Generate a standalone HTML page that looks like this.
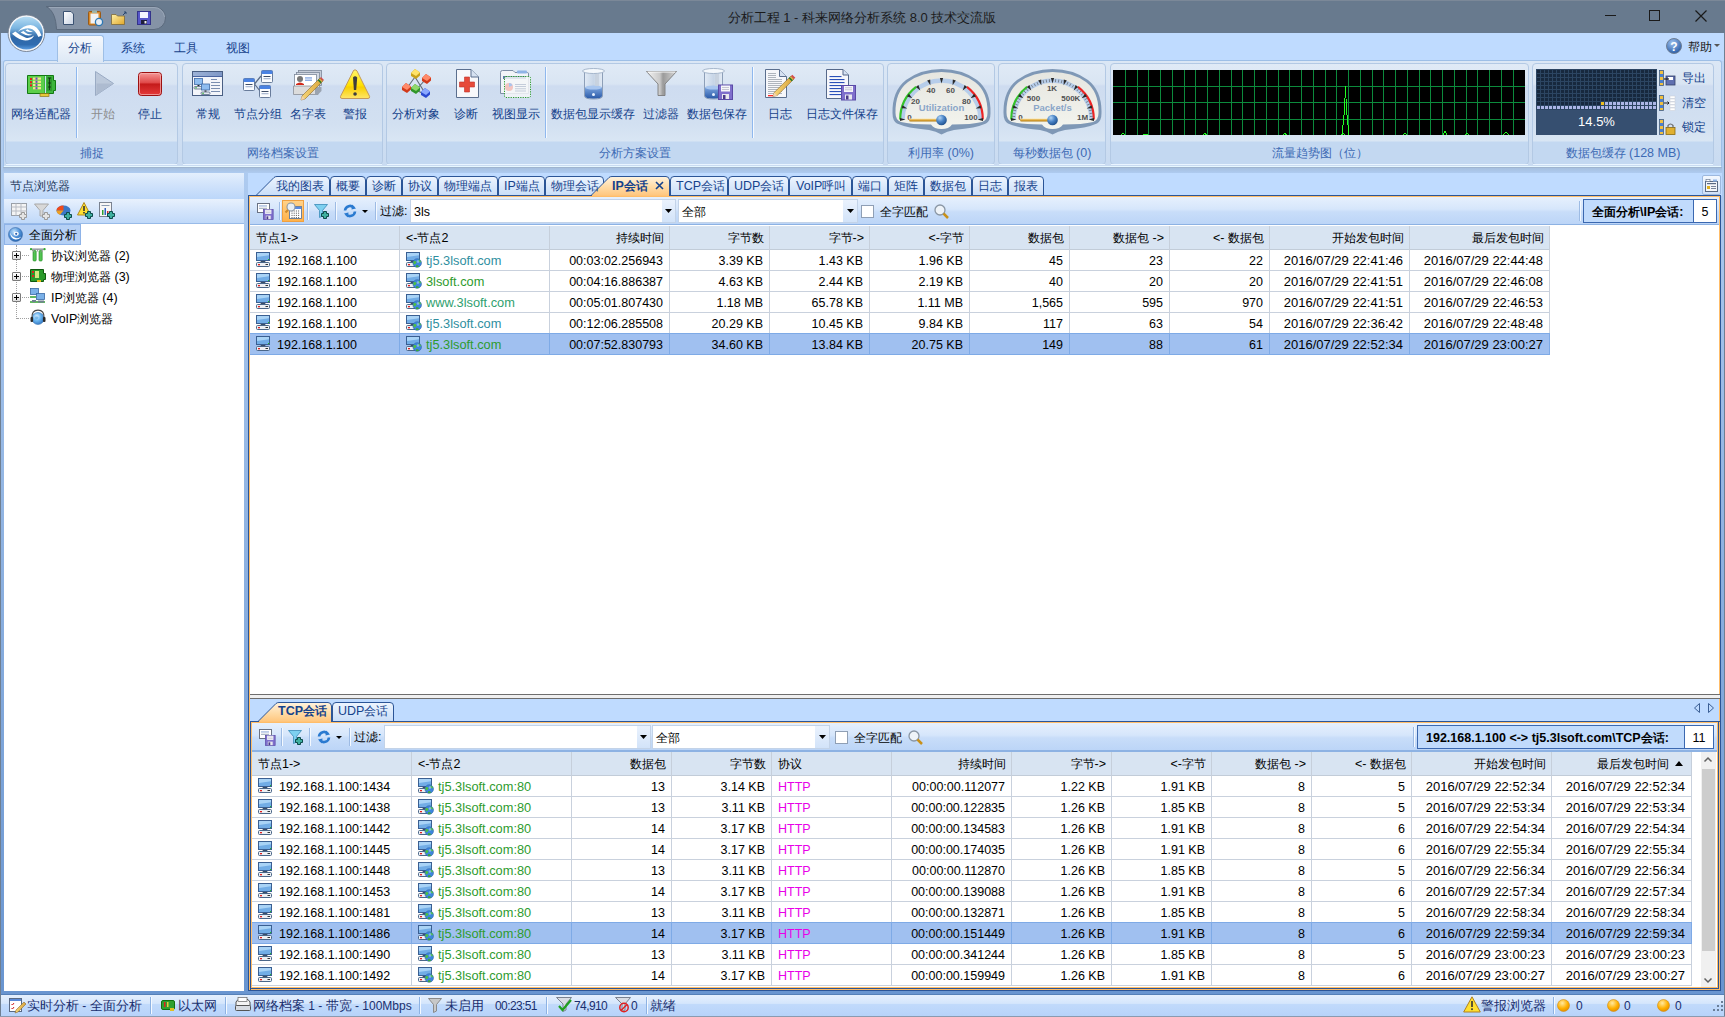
<!DOCTYPE html><html><head><meta charset="utf-8"><title>科来网络分析系统</title><style>
html,body{margin:0;padding:0}
body{width:1725px;height:1017px;position:relative;overflow:hidden;background:#6f9ad5;font-family:"Liberation Sans",sans-serif}
body div{position:absolute;box-sizing:border-box}
.t{white-space:nowrap;line-height:20px;height:20px}
svg{overflow:visible}
</style></head><body>
<div style="left:0px;top:0px;width:1725px;height:33px;background:#687a8e"></div>
<div style="left:0px;top:0px;width:1725px;height:1px;background:#7b8898"></div>
<div class="t" style="left:562.0px;width:600px;text-align:center;top:7.5px;font-size:12.5px;color:#1b1b1b;font-weight:normal;">分析工程<span style="font-size:13px"> 1 - </span>科来网络分析系统<span style="font-size:13px"> 8.0 </span>技术交流版</div>
<div style="left:1605px;top:15px;width:11px;height:1px;background:#1a1a1a"></div>
<div style="left:1649px;top:10px;width:11px;height:11px;border:1px solid #1a1a1a"></div>
<svg style="position:absolute;left:1695px;top:10px" width="12" height="12" viewBox="0 0 12 12"><path d="M0.5 0.5L11.5 11.5M11.5 0.5L0.5 11.5" stroke="#1a1a1a" stroke-width="1.2"/></svg>
<div style="left:0px;top:33px;width:1725px;height:984px;background:linear-gradient(#c0d8f6 0px,#aecbf0 135px,#6995d0 958px)"></div>
<div style="left:0px;top:33px;width:1px;height:984px;background:#6f7f92"></div>
<div style="left:1724px;top:33px;width:1px;height:984px;background:#6f7f92"></div>
<div style="left:1px;top:33px;width:1723px;height:28px;background:#bfdbff"></div>
<div style="left:3px;top:60px;width:1719px;height:108px;background:linear-gradient(#dbe7f5,#c9dbf1);border:1px solid #9ebfe6;border-radius:3px;border-bottom:2px solid #e6f7ff"></div>
<div style="left:3px;top:167px;width:1719px;height:1px;background:#9fb4cf"></div>
<div style="left:57px;top:35px;width:47px;height:27px;background:linear-gradient(#f6f9fd,#dde8f5);border:1px solid #9ebfe6;border-bottom:none;border-radius:3px 3px 0 0"></div>
<div style="left:58px;top:61px;width:45px;height:2px;background:#dde8f5"></div>
<div class="t" style="left:50.0px;width:60px;text-align:center;top:37.5px;font-size:12px;color:#15428b;font-weight:normal;">分析</div>
<div class="t" style="left:103.0px;width:60px;text-align:center;top:37.5px;font-size:12px;color:#15428b;font-weight:normal;">系统</div>
<div class="t" style="left:156.0px;width:60px;text-align:center;top:37.5px;font-size:12px;color:#15428b;font-weight:normal;">工具</div>
<div class="t" style="left:208.0px;width:60px;text-align:center;top:37.5px;font-size:12px;color:#15428b;font-weight:normal;">视图</div>
<svg style="position:absolute;left:1666px;top:38px" width="16" height="16" viewBox="0 0 16 16"><defs><radialGradient id="hg" cx="40%" cy="30%" r="70%"><stop offset="0" stop-color="#9fc3f0"/><stop offset="1" stop-color="#2d5fa8"/></radialGradient></defs><circle cx="8" cy="8" r="7.5" fill="url(#hg)" stroke="#6f7f95"/><text x="8" y="12.5" font-size="12" font-weight="bold" text-anchor="middle" fill="#fff" font-family="Liberation Sans">?</text></svg>
<div class="t" style="left:1688px;top:36.5px;font-size:12px;color:#1b1b1b;font-weight:normal;">帮助</div>
<svg style="position:absolute;left:1714px;top:44px" width="6" height="4" viewBox="0 0 6 4"><path d="M0 0H6L3 3Z" fill="#555"/></svg>
<div style="left:5px;top:63px;width:173px;height:102px;border:1px solid #b3c9e4;border-radius:4px;overflow:hidden;background:linear-gradient(#e0eaf6 0px,#d9e5f3 20px,#cedcf0 22px,#d2e0f1 60px,#d9e6f4 77px,#c3d8f1 78px,#c3d8f1 100px)"></div>
<div style="left:6px;top:164px;width:171px;height:1px;background:#e9f4ff"></div>
<div class="t" style="left:5.0px;width:173px;text-align:center;top:142.5px;font-size:12px;color:#3d6ab4;font-weight:normal;">捕捉</div>
<div style="left:182px;top:63px;width:201px;height:102px;border:1px solid #b3c9e4;border-radius:4px;overflow:hidden;background:linear-gradient(#e0eaf6 0px,#d9e5f3 20px,#cedcf0 22px,#d2e0f1 60px,#d9e6f4 77px,#c3d8f1 78px,#c3d8f1 100px)"></div>
<div style="left:183px;top:164px;width:199px;height:1px;background:#e9f4ff"></div>
<div class="t" style="left:182.0px;width:201px;text-align:center;top:142.5px;font-size:12px;color:#3d6ab4;font-weight:normal;">网络档案设置</div>
<div style="left:386px;top:63px;width:498px;height:102px;border:1px solid #b3c9e4;border-radius:4px;overflow:hidden;background:linear-gradient(#e0eaf6 0px,#d9e5f3 20px,#cedcf0 22px,#d2e0f1 60px,#d9e6f4 77px,#c3d8f1 78px,#c3d8f1 100px)"></div>
<div style="left:387px;top:164px;width:496px;height:1px;background:#e9f4ff"></div>
<div class="t" style="left:386.0px;width:498px;text-align:center;top:142.5px;font-size:12px;color:#3d6ab4;font-weight:normal;">分析方案设置</div>
<div style="left:887px;top:63px;width:108px;height:102px;border:1px solid #b3c9e4;border-radius:4px;overflow:hidden;background:linear-gradient(#e0eaf6 0px,#d9e5f3 20px,#cedcf0 22px,#d2e0f1 60px,#d9e6f4 77px,#c3d8f1 78px,#c3d8f1 100px)"></div>
<div style="left:888px;top:164px;width:106px;height:1px;background:#e9f4ff"></div>
<div class="t" style="left:887.0px;width:108px;text-align:center;top:142.5px;font-size:12px;color:#3d6ab4;font-weight:normal;">利用率<span style="font-size:12.5px"> (0%)</span></div>
<div style="left:998px;top:63px;width:108px;height:102px;border:1px solid #b3c9e4;border-radius:4px;overflow:hidden;background:linear-gradient(#e0eaf6 0px,#d9e5f3 20px,#cedcf0 22px,#d2e0f1 60px,#d9e6f4 77px,#c3d8f1 78px,#c3d8f1 100px)"></div>
<div style="left:999px;top:164px;width:106px;height:1px;background:#e9f4ff"></div>
<div class="t" style="left:998.0px;width:108px;text-align:center;top:142.5px;font-size:12px;color:#3d6ab4;font-weight:normal;">每秒数据包<span style="font-size:12.5px"> (0)</span></div>
<div style="left:1110px;top:63px;width:419px;height:102px;border:1px solid #b3c9e4;border-radius:4px;overflow:hidden;background:linear-gradient(#e0eaf6 0px,#d9e5f3 20px,#cedcf0 22px,#d2e0f1 60px,#d9e6f4 77px,#c3d8f1 78px,#c3d8f1 100px)"></div>
<div style="left:1111px;top:164px;width:417px;height:1px;background:#e9f4ff"></div>
<div class="t" style="left:1110.0px;width:419px;text-align:center;top:142.5px;font-size:12px;color:#3d6ab4;font-weight:normal;">流量趋势图（位）</div>
<div style="left:1532px;top:63px;width:182px;height:102px;border:1px solid #b3c9e4;border-radius:4px;overflow:hidden;background:linear-gradient(#e0eaf6 0px,#d9e5f3 20px,#cedcf0 22px,#d2e0f1 60px,#d9e6f4 77px,#c3d8f1 78px,#c3d8f1 100px)"></div>
<div style="left:1533px;top:164px;width:180px;height:1px;background:#e9f4ff"></div>
<div class="t" style="left:1532.0px;width:182px;text-align:center;top:142.5px;font-size:12px;color:#3d6ab4;font-weight:normal;">数据包缓存<span style="font-size:12.5px"> (128 MB)</span></div>
<div class="t" style="left:-19.0px;width:120px;text-align:center;top:104.0px;font-size:12px;color:#15428b;font-weight:normal;">网络适配器</div>
<div class="t" style="left:42.5px;width:120px;text-align:center;top:104.0px;font-size:12px;color:#8d8d8d;font-weight:normal;">开始</div>
<div class="t" style="left:90.0px;width:120px;text-align:center;top:104.0px;font-size:12px;color:#15428b;font-weight:normal;">停止</div>
<div class="t" style="left:148.0px;width:120px;text-align:center;top:104.0px;font-size:12px;color:#15428b;font-weight:normal;">常规</div>
<div class="t" style="left:198.0px;width:120px;text-align:center;top:104.0px;font-size:12px;color:#15428b;font-weight:normal;">节点分组</div>
<div class="t" style="left:248.0px;width:120px;text-align:center;top:104.0px;font-size:12px;color:#15428b;font-weight:normal;">名字表</div>
<div class="t" style="left:295.0px;width:120px;text-align:center;top:104.0px;font-size:12px;color:#15428b;font-weight:normal;">警报</div>
<div class="t" style="left:356.0px;width:120px;text-align:center;top:104.0px;font-size:12px;color:#15428b;font-weight:normal;">分析对象</div>
<div class="t" style="left:406.0px;width:120px;text-align:center;top:104.0px;font-size:12px;color:#15428b;font-weight:normal;">诊断</div>
<div class="t" style="left:455.5px;width:120px;text-align:center;top:104.0px;font-size:12px;color:#15428b;font-weight:normal;">视图显示</div>
<div class="t" style="left:532.5px;width:120px;text-align:center;top:104.0px;font-size:12px;color:#15428b;font-weight:normal;">数据包显示缓存</div>
<div class="t" style="left:601.0px;width:120px;text-align:center;top:104.0px;font-size:12px;color:#15428b;font-weight:normal;">过滤器</div>
<div class="t" style="left:657.0px;width:120px;text-align:center;top:104.0px;font-size:12px;color:#15428b;font-weight:normal;">数据包保存</div>
<div class="t" style="left:719.5px;width:120px;text-align:center;top:104.0px;font-size:12px;color:#15428b;font-weight:normal;">日志</div>
<div class="t" style="left:781.5px;width:120px;text-align:center;top:104.0px;font-size:12px;color:#15428b;font-weight:normal;">日志文件保存</div>
<div style="left:76px;top:67px;width:1px;height:71px;background:#8fb8ee;box-shadow:1px 0 0 #f4f9ff"></div>
<div style="left:545px;top:67px;width:1px;height:71px;background:#8fb8ee;box-shadow:1px 0 0 #f4f9ff"></div>
<div style="left:752px;top:67px;width:1px;height:71px;background:#8fb8ee;box-shadow:1px 0 0 #f4f9ff"></div>
<div style="left:3px;top:168px;width:1719px;height:5px;background:linear-gradient(#a6bfdf,#aecbf0)"></div>
<div style="left:4px;top:173px;width:240px;height:26px;background:linear-gradient(#e4effd,#cfe2fb 50%,#bcd7fa)"></div>
<div class="t" style="left:10px;top:176.0px;font-size:12px;color:#1e395b;font-weight:normal;">节点浏览器</div>
<div style="left:4px;top:199px;width:240px;height:25px;background:linear-gradient(#e8f1fd,#d3e4fb 50%,#c0d9f9);border-bottom:1px solid #99bbe8"></div>
<div style="left:4px;top:224px;width:240px;height:767px;background:#fff"></div>
<div style="left:4px;top:224px;width:77px;height:21px;background:#b5d0f5;border:1px solid #8eb3e8"></div>
<div class="t" style="left:29px;top:225.0px;font-size:12px;color:#000;font-weight:normal;">全面分析</div>
<div class="t" style="left:51px;top:246.0px;font-size:12px;color:#000;font-weight:normal;">协议浏览器<span style="font-size:12.5px"> (2)</span></div>
<div class="t" style="left:51px;top:267.0px;font-size:12px;color:#000;font-weight:normal;">物理浏览器<span style="font-size:12.5px"> (3)</span></div>
<div class="t" style="left:51px;top:288.0px;font-size:12px;color:#000;font-weight:normal;"><span style="font-size:12.5px">IP</span>浏览器<span style="font-size:12.5px"> (4)</span></div>
<div class="t" style="left:51px;top:309.0px;font-size:12px;color:#000;font-weight:normal;"><span style="font-size:12.5px">VoIP</span>浏览器</div>
<div style="left:16px;top:245px;width:1px;height:74px;border-left:1px dotted #a0a0a0"></div>
<div style="left:17px;top:255px;width:12px;height:1px;border-top:1px dotted #a0a0a0"></div>
<div style="left:17px;top:276px;width:12px;height:1px;border-top:1px dotted #a0a0a0"></div>
<div style="left:17px;top:297px;width:12px;height:1px;border-top:1px dotted #a0a0a0"></div>
<div style="left:17px;top:318px;width:12px;height:1px;border-top:1px dotted #a0a0a0"></div>
<div style="left:12px;top:251px;width:9px;height:9px;background:linear-gradient(#fff,#dcdcdc);border:1px solid #7a7a7a;border-radius:1px"></div>
<div style="left:14px;top:255px;width:5px;height:1px;background:#000"></div>
<div style="left:16px;top:253px;width:1px;height:5px;background:#000"></div>
<div style="left:12px;top:272px;width:9px;height:9px;background:linear-gradient(#fff,#dcdcdc);border:1px solid #7a7a7a;border-radius:1px"></div>
<div style="left:14px;top:276px;width:5px;height:1px;background:#000"></div>
<div style="left:16px;top:274px;width:1px;height:5px;background:#000"></div>
<div style="left:12px;top:293px;width:9px;height:9px;background:linear-gradient(#fff,#dcdcdc);border:1px solid #7a7a7a;border-radius:1px"></div>
<div style="left:14px;top:297px;width:5px;height:1px;background:#000"></div>
<div style="left:16px;top:295px;width:1px;height:5px;background:#000"></div>
<div style="left:1px;top:994px;width:1723px;height:1px;background:#5580b8"></div>
<div style="left:1px;top:995px;width:1723px;height:21px;background:linear-gradient(#e4effd,#d5e6fc 40%,#c1dafb 45%,#b7d3fa)"></div>
<div style="left:0px;top:1016px;width:1725px;height:1px;background:#8a9bb0"></div>
<div class="t" style="left:27px;top:995.5px;font-size:13px;color:#1a2f6e;font-weight:normal;">实时分析<span style="font-size:12px"> - </span>全面分析</div>
<div class="t" style="left:178px;top:995.5px;font-size:13px;color:#1a2f6e;font-weight:normal;">以太网</div>
<div class="t" style="left:253px;top:995.5px;font-size:13px;color:#1a2f6e;font-weight:normal;">网络档案<span style="font-size:12px"> 1 - </span>带宽<span style="font-size:12px"> - 100Mbps</span></div>
<div class="t" style="left:445px;top:995.5px;font-size:13px;color:#1a2f6e;font-weight:normal;">未启用</div>
<div class="t" style="left:495px;top:995.5px;font-size:13px;color:#1a2f6e;font-weight:normal;letter-spacing:-0.6px"><span style="font-size:12px">00:23:51</span></div>
<div class="t" style="left:574px;top:995.5px;font-size:13px;color:#1a2f6e;font-weight:normal;letter-spacing:-0.6px"><span style="font-size:12px">74,910</span></div>
<div class="t" style="left:631px;top:995.5px;font-size:13px;color:#1a2f6e;font-weight:normal;letter-spacing:-0.6px"><span style="font-size:12px">0</span></div>
<div class="t" style="left:650px;top:995.5px;font-size:13px;color:#1a2f6e;font-weight:normal;">就绪</div>
<div class="t" style="left:1481px;top:995.5px;font-size:13px;color:#1a2f6e;font-weight:normal;">警报浏览器</div>
<div class="t" style="left:1576px;top:995.5px;font-size:13px;color:#1a2f6e;font-weight:normal;letter-spacing:-0.6px"><span style="font-size:12px">0</span></div>
<div class="t" style="left:1624px;top:995.5px;font-size:13px;color:#1a2f6e;font-weight:normal;letter-spacing:-0.6px"><span style="font-size:12px">0</span></div>
<div class="t" style="left:1675px;top:995.5px;font-size:13px;color:#1a2f6e;font-weight:normal;letter-spacing:-0.6px"><span style="font-size:12px">0</span></div>
<div style="left:150px;top:997px;width:1px;height:17px;background:#8db2e3;box-shadow:1px 0 0 #f4f9ff"></div>
<div style="left:225px;top:997px;width:1px;height:17px;background:#8db2e3;box-shadow:1px 0 0 #f4f9ff"></div>
<div style="left:419px;top:997px;width:1px;height:17px;background:#8db2e3;box-shadow:1px 0 0 #f4f9ff"></div>
<div style="left:546px;top:997px;width:1px;height:17px;background:#8db2e3;box-shadow:1px 0 0 #f4f9ff"></div>
<div style="left:646px;top:997px;width:1px;height:17px;background:#8db2e3;box-shadow:1px 0 0 #f4f9ff"></div>
<div style="left:1553px;top:997px;width:1px;height:17px;background:#8db2e3;box-shadow:1px 0 0 #f4f9ff"></div>
<div style="left:248px;top:173px;width:1474px;height:23px;background:#bfdbff"></div>
<svg style="position:absolute;left:0px;top:176px" width="1725" height="21" viewBox="0 0 1725 21"><defs><linearGradient id="tun" x1="0" y1="0" x2="0" y2="1"><stop offset="0" stop-color="#eef5fe"/><stop offset="1" stop-color="#c6dcf8"/></linearGradient><linearGradient id="tsel" x1="0" y1="0" x2="0" y2="1"><stop offset="0" stop-color="#fff3df"/><stop offset="0.5" stop-color="#ffdca8"/><stop offset="1" stop-color="#ffc479"/></linearGradient></defs><path d="M255 20.5 L274 1.5 Q275 0.5 277 0.5 H326 Q329 0.5 329.5 4 V20.5" fill="url(#tun)" stroke="#2b5597" stroke-width="1"/><path d="M330.5 20.5 V4 Q330.5 0.5 334 0.5 H362 Q365.5 0.5 365.5 4 V20.5" fill="url(#tun)" stroke="#2b5597" stroke-width="1"/><path d="M366.5 20.5 V4 Q366.5 0.5 370 0.5 H398 Q401.5 0.5 401.5 4 V20.5" fill="url(#tun)" stroke="#2b5597" stroke-width="1"/><path d="M402.5 20.5 V4 Q402.5 0.5 406 0.5 H434 Q437.5 0.5 437.5 4 V20.5" fill="url(#tun)" stroke="#2b5597" stroke-width="1"/><path d="M438.5 20.5 V4 Q438.5 0.5 442 0.5 H494 Q497.5 0.5 497.5 4 V20.5" fill="url(#tun)" stroke="#2b5597" stroke-width="1"/><path d="M498.5 20.5 V4 Q498.5 0.5 502 0.5 H541 Q544.5 0.5 544.5 4 V20.5" fill="url(#tun)" stroke="#2b5597" stroke-width="1"/><path d="M545.5 20.5 V4 Q545.5 0.5 549 0.5 H600 Q603.5 0.5 603.5 4 V20.5" fill="url(#tun)" stroke="#2b5597" stroke-width="1"/><path d="M670.5 20.5 V4 Q670.5 0.5 674 0.5 H724 Q727.5 0.5 727.5 4 V20.5" fill="url(#tun)" stroke="#2b5597" stroke-width="1"/><path d="M728.5 20.5 V4 Q728.5 0.5 732 0.5 H785 Q788.5 0.5 788.5 4 V20.5" fill="url(#tun)" stroke="#2b5597" stroke-width="1"/><path d="M789.5 20.5 V4 Q789.5 0.5 793 0.5 H848 Q851.5 0.5 851.5 4 V20.5" fill="url(#tun)" stroke="#2b5597" stroke-width="1"/><path d="M852.5 20.5 V4 Q852.5 0.5 856 0.5 H884 Q887.5 0.5 887.5 4 V20.5" fill="url(#tun)" stroke="#2b5597" stroke-width="1"/><path d="M888.5 20.5 V4 Q888.5 0.5 892 0.5 H920 Q923.5 0.5 923.5 4 V20.5" fill="url(#tun)" stroke="#2b5597" stroke-width="1"/><path d="M924.5 20.5 V4 Q924.5 0.5 928 0.5 H968 Q971.5 0.5 971.5 4 V20.5" fill="url(#tun)" stroke="#2b5597" stroke-width="1"/><path d="M972.5 20.5 V4 Q972.5 0.5 976 0.5 H1004 Q1007.5 0.5 1007.5 4 V20.5" fill="url(#tun)" stroke="#2b5597" stroke-width="1"/><path d="M1008.5 20.5 V4 Q1008.5 0.5 1012 0.5 H1040 Q1043.5 0.5 1043.5 4 V20.5" fill="url(#tun)" stroke="#2b5597" stroke-width="1"/><path d="M590 20.5 L609 1.5 Q610 0.5 612 0.5 H666 Q669 0.5 669.5 4 V20.5" fill="url(#tsel)" stroke="#2b5597" stroke-width="1"/></svg>
<div class="t" style="left:276px;top:175.5px;font-size:12px;color:#15428b;font-weight:normal;">我的图表</div>
<div class="t" style="left:336px;top:175.5px;font-size:12px;color:#15428b;font-weight:normal;">概要</div>
<div class="t" style="left:372px;top:175.5px;font-size:12px;color:#15428b;font-weight:normal;">诊断</div>
<div class="t" style="left:408px;top:175.5px;font-size:12px;color:#15428b;font-weight:normal;">协议</div>
<div class="t" style="left:444px;top:175.5px;font-size:12px;color:#15428b;font-weight:normal;">物理端点</div>
<div class="t" style="left:504px;top:175.5px;font-size:12px;color:#15428b;font-weight:normal;"><span style="font-size:12.5px">IP</span>端点</div>
<div class="t" style="left:551px;top:175.5px;font-size:12px;color:#15428b;font-weight:normal;">物理会话</div>
<div class="t" style="left:676px;top:175.5px;font-size:12px;color:#15428b;font-weight:normal;"><span style="font-size:12.5px">TCP</span>会话</div>
<div class="t" style="left:734px;top:175.5px;font-size:12px;color:#15428b;font-weight:normal;"><span style="font-size:12.5px">UDP</span>会话</div>
<div class="t" style="left:796px;top:175.5px;font-size:12px;color:#15428b;font-weight:normal;"><span style="font-size:12.5px">VoIP</span>呼叫</div>
<div class="t" style="left:858px;top:175.5px;font-size:12px;color:#15428b;font-weight:normal;">端口</div>
<div class="t" style="left:894px;top:175.5px;font-size:12px;color:#15428b;font-weight:normal;">矩阵</div>
<div class="t" style="left:930px;top:175.5px;font-size:12px;color:#15428b;font-weight:normal;">数据包</div>
<div class="t" style="left:978px;top:175.5px;font-size:12px;color:#15428b;font-weight:normal;">日志</div>
<div class="t" style="left:1014px;top:175.5px;font-size:12px;color:#15428b;font-weight:normal;">报表</div>
<div class="t" style="left:612px;top:175.5px;font-size:12px;color:#15428b;font-weight:bold;"><span style="font-size:12.5px">IP</span>会话</div>
<svg style="position:absolute;left:655px;top:181px" width="9" height="9" viewBox="0 0 9 9"><path d="M1 1L8 8M8 1L1 8" stroke="#15428b" stroke-width="1.6"/></svg>
<div style="left:1702px;top:175px;width:19px;height:20px;background:linear-gradient(#f3f8fe,#cfe1f9);border:1px solid #9db8de;border-radius:2px"></div>
<div style="left:248px;top:195px;width:1473px;height:796px;border:1px solid #2b5597"></div>
<div style="left:249px;top:196px;width:1471px;height:794px;border:1px solid #ffbd69;background:#bfdbff"></div>
<div style="left:592px;top:195px;width:77px;height:1px;background:#ffc479"></div>
<div style="left:250px;top:197px;width:1469px;height:497px;background:#fff"></div>
<div style="left:250px;top:197px;width:1469px;height:28px;background:linear-gradient(#e6f0fd,#d6e6fb 45%,#c8ddf9 55%,#bcd5f7);border-bottom:1px solid #8db2e3"></div>
<div class="t" style="left:380px;top:201.0px;font-size:12px;color:#000;font-weight:normal;">过滤<span style="font-size:12.5px">:</span></div>
<div style="left:410px;top:199px;width:266px;height:24px;background:#fff;border:1px solid #c3d3e8"></div>
<div style="left:662px;top:200px;width:13px;height:22px;background:linear-gradient(#eaf2fd,#d2e3f9)"></div>
<svg style="position:absolute;left:665px;top:209.0px" width="7" height="4" viewBox="0 0 7 4"><path d="M0 0H7L3.5 4Z" fill="#000"/></svg>
<div class="t" style="left:414px;top:201.5px;font-size:12px;color:#000;font-weight:normal;"><span style="font-size:12.5px">3ls</span></div>
<div style="left:678px;top:199px;width:180px;height:24px;background:#fff;border:1px solid #c3d3e8"></div>
<div style="left:843px;top:200px;width:14px;height:22px;background:linear-gradient(#eaf2fd,#d2e3f9)"></div>
<svg style="position:absolute;left:847px;top:209.0px" width="7" height="4" viewBox="0 0 7 4"><path d="M0 0H7L3.5 4Z" fill="#000"/></svg>
<div class="t" style="left:682px;top:201.5px;font-size:12px;color:#000;font-weight:normal;">全部</div>
<div style="left:861px;top:205.0px;width:13px;height:13px;background:#fff;border:1px solid #8f9fb5"></div>
<div class="t" style="left:880px;top:201.5px;font-size:12px;color:#000;font-weight:normal;">全字匹配</div>
<div style="left:1579px;top:201px;width:1px;height:20px;background:#9dbbe4;box-shadow:1px 0 0 #f4f9ff"></div>
<div style="left:1583px;top:199px;width:134px;height:24px;background:#c1dbfc;border:1px solid #3b68b0"></div>
<div style="left:1693px;top:200px;width:23px;height:22px;background:#fff;border-left:1px solid #3b68b0"></div>
<div class="t" style="left:1592px;top:201.5px;font-size:12px;color:#000;font-weight:bold;">全面分析<span style="font-size:12.5px">\IP</span>会话<span style="font-size:12.5px">:</span></div>
<div class="t" style="left:1693.0px;width:24px;text-align:center;top:201.5px;font-size:12px;color:#000;font-weight:normal;"><span style="font-size:12.5px">5</span></div>
<div style="left:250px;top:226px;width:1300px;height:24px;background:#d8e4f2;border-bottom:1px solid #c2ccd8"></div>
<div style="left:399px;top:226px;width:1px;height:24px;background:#c6cfdb"></div>
<div class="t" style="left:256px;top:228.0px;font-size:12px;color:#000;font-weight:normal;">节点<span style="font-size:12.5px">1-&gt;</span></div>
<div style="left:549px;top:226px;width:1px;height:24px;background:#c6cfdb"></div>
<div class="t" style="left:406px;top:228.0px;font-size:12px;color:#000;font-weight:normal;"><span style="font-size:12.5px">&lt;-</span>节点<span style="font-size:12.5px">2</span></div>
<div style="left:669px;top:226px;width:1px;height:24px;background:#c6cfdb"></div>
<div class="t" style="left:544px;width:120px;text-align:right;top:228.0px;font-size:12px;color:#000;font-weight:normal;">持续时间</div>
<div style="left:769px;top:226px;width:1px;height:24px;background:#c6cfdb"></div>
<div class="t" style="left:664px;width:100px;text-align:right;top:228.0px;font-size:12px;color:#000;font-weight:normal;">字节数</div>
<div style="left:869px;top:226px;width:1px;height:24px;background:#c6cfdb"></div>
<div class="t" style="left:764px;width:100px;text-align:right;top:228.0px;font-size:12px;color:#000;font-weight:normal;">字节<span style="font-size:12.5px">-&gt;</span></div>
<div style="left:969px;top:226px;width:1px;height:24px;background:#c6cfdb"></div>
<div class="t" style="left:864px;width:100px;text-align:right;top:228.0px;font-size:12px;color:#000;font-weight:normal;"><span style="font-size:12.5px">&lt;-</span>字节</div>
<div style="left:1069px;top:226px;width:1px;height:24px;background:#c6cfdb"></div>
<div class="t" style="left:964px;width:100px;text-align:right;top:228.0px;font-size:12px;color:#000;font-weight:normal;">数据包</div>
<div style="left:1169px;top:226px;width:1px;height:24px;background:#c6cfdb"></div>
<div class="t" style="left:1064px;width:100px;text-align:right;top:228.0px;font-size:12px;color:#000;font-weight:normal;">数据包<span style="font-size:12.5px"> -&gt;</span></div>
<div style="left:1269px;top:226px;width:1px;height:24px;background:#c6cfdb"></div>
<div class="t" style="left:1164px;width:100px;text-align:right;top:228.0px;font-size:12px;color:#000;font-weight:normal;"><span style="font-size:12.5px">&lt;- </span>数据包</div>
<div style="left:1409px;top:226px;width:1px;height:24px;background:#c6cfdb"></div>
<div class="t" style="left:1264px;width:140px;text-align:right;top:228.0px;font-size:12px;color:#000;font-weight:normal;">开始发包时间</div>
<div style="left:1549px;top:226px;width:1px;height:24px;background:#c6cfdb"></div>
<div class="t" style="left:1404px;width:140px;text-align:right;top:228.0px;font-size:12px;color:#000;font-weight:normal;">最后发包时间</div>
<div style="left:250px;top:270px;width:1300px;height:1px;background:#c9d1dd"></div>
<div style="left:399px;top:250px;width:1px;height:21px;background:#c9d1dd"></div>
<div class="t" style="left:277px;top:251.0px;font-size:12px;color:#000;font-weight:normal;"><span style="font-size:12.5px">192.168.1.100</span></div>
<div style="left:549px;top:250px;width:1px;height:21px;background:#c9d1dd"></div>
<div class="t" style="left:426px;top:251.0px;font-size:12px;color:#2f8fa0;font-weight:normal;"><span style="font-size:12.8px">tj5.3lsoft.com</span></div>
<div style="left:669px;top:250px;width:1px;height:21px;background:#c9d1dd"></div>
<div class="t" style="left:543px;width:120px;text-align:right;top:251.0px;font-size:12px;color:#000;font-weight:normal;"><span style="font-size:12.5px">00:03:02.256943</span></div>
<div style="left:769px;top:250px;width:1px;height:21px;background:#c9d1dd"></div>
<div class="t" style="left:663px;width:100px;text-align:right;top:251.0px;font-size:12px;color:#000;font-weight:normal;"><span style="font-size:12.5px">3.39 KB</span></div>
<div style="left:869px;top:250px;width:1px;height:21px;background:#c9d1dd"></div>
<div class="t" style="left:763px;width:100px;text-align:right;top:251.0px;font-size:12px;color:#000;font-weight:normal;"><span style="font-size:12.5px">1.43 KB</span></div>
<div style="left:969px;top:250px;width:1px;height:21px;background:#c9d1dd"></div>
<div class="t" style="left:863px;width:100px;text-align:right;top:251.0px;font-size:12px;color:#000;font-weight:normal;"><span style="font-size:12.5px">1.96 KB</span></div>
<div style="left:1069px;top:250px;width:1px;height:21px;background:#c9d1dd"></div>
<div class="t" style="left:963px;width:100px;text-align:right;top:251.0px;font-size:12px;color:#000;font-weight:normal;"><span style="font-size:12.5px">45</span></div>
<div style="left:1169px;top:250px;width:1px;height:21px;background:#c9d1dd"></div>
<div class="t" style="left:1063px;width:100px;text-align:right;top:251.0px;font-size:12px;color:#000;font-weight:normal;"><span style="font-size:12.5px">23</span></div>
<div style="left:1269px;top:250px;width:1px;height:21px;background:#c9d1dd"></div>
<div class="t" style="left:1163px;width:100px;text-align:right;top:251.0px;font-size:12px;color:#000;font-weight:normal;"><span style="font-size:12.5px">22</span></div>
<div style="left:1409px;top:250px;width:1px;height:21px;background:#c9d1dd"></div>
<div class="t" style="left:1263px;width:140px;text-align:right;top:251.0px;font-size:12px;color:#000;font-weight:normal;"><span style="font-size:13px">2016/07/29 22:41:46</span></div>
<div style="left:1549px;top:250px;width:1px;height:21px;background:#c9d1dd"></div>
<div class="t" style="left:1403px;width:140px;text-align:right;top:251.0px;font-size:12px;color:#000;font-weight:normal;"><span style="font-size:13px">2016/07/29 22:44:48</span></div>
<div style="left:250px;top:291px;width:1300px;height:1px;background:#c9d1dd"></div>
<div style="left:399px;top:271px;width:1px;height:21px;background:#c9d1dd"></div>
<div class="t" style="left:277px;top:272.0px;font-size:12px;color:#000;font-weight:normal;"><span style="font-size:12.5px">192.168.1.100</span></div>
<div style="left:549px;top:271px;width:1px;height:21px;background:#c9d1dd"></div>
<div class="t" style="left:426px;top:272.0px;font-size:12px;color:#2e9b2e;font-weight:normal;"><span style="font-size:12.8px">3lsoft.com</span></div>
<div style="left:669px;top:271px;width:1px;height:21px;background:#c9d1dd"></div>
<div class="t" style="left:543px;width:120px;text-align:right;top:272.0px;font-size:12px;color:#000;font-weight:normal;"><span style="font-size:12.5px">00:04:16.886387</span></div>
<div style="left:769px;top:271px;width:1px;height:21px;background:#c9d1dd"></div>
<div class="t" style="left:663px;width:100px;text-align:right;top:272.0px;font-size:12px;color:#000;font-weight:normal;"><span style="font-size:12.5px">4.63 KB</span></div>
<div style="left:869px;top:271px;width:1px;height:21px;background:#c9d1dd"></div>
<div class="t" style="left:763px;width:100px;text-align:right;top:272.0px;font-size:12px;color:#000;font-weight:normal;"><span style="font-size:12.5px">2.44 KB</span></div>
<div style="left:969px;top:271px;width:1px;height:21px;background:#c9d1dd"></div>
<div class="t" style="left:863px;width:100px;text-align:right;top:272.0px;font-size:12px;color:#000;font-weight:normal;"><span style="font-size:12.5px">2.19 KB</span></div>
<div style="left:1069px;top:271px;width:1px;height:21px;background:#c9d1dd"></div>
<div class="t" style="left:963px;width:100px;text-align:right;top:272.0px;font-size:12px;color:#000;font-weight:normal;"><span style="font-size:12.5px">40</span></div>
<div style="left:1169px;top:271px;width:1px;height:21px;background:#c9d1dd"></div>
<div class="t" style="left:1063px;width:100px;text-align:right;top:272.0px;font-size:12px;color:#000;font-weight:normal;"><span style="font-size:12.5px">20</span></div>
<div style="left:1269px;top:271px;width:1px;height:21px;background:#c9d1dd"></div>
<div class="t" style="left:1163px;width:100px;text-align:right;top:272.0px;font-size:12px;color:#000;font-weight:normal;"><span style="font-size:12.5px">20</span></div>
<div style="left:1409px;top:271px;width:1px;height:21px;background:#c9d1dd"></div>
<div class="t" style="left:1263px;width:140px;text-align:right;top:272.0px;font-size:12px;color:#000;font-weight:normal;"><span style="font-size:13px">2016/07/29 22:41:51</span></div>
<div style="left:1549px;top:271px;width:1px;height:21px;background:#c9d1dd"></div>
<div class="t" style="left:1403px;width:140px;text-align:right;top:272.0px;font-size:12px;color:#000;font-weight:normal;"><span style="font-size:13px">2016/07/29 22:46:08</span></div>
<div style="left:250px;top:312px;width:1300px;height:1px;background:#c9d1dd"></div>
<div style="left:399px;top:292px;width:1px;height:21px;background:#c9d1dd"></div>
<div class="t" style="left:277px;top:293.0px;font-size:12px;color:#000;font-weight:normal;"><span style="font-size:12.5px">192.168.1.100</span></div>
<div style="left:549px;top:292px;width:1px;height:21px;background:#c9d1dd"></div>
<div class="t" style="left:426px;top:293.0px;font-size:12px;color:#2f9f6f;font-weight:normal;"><span style="font-size:12.8px">www.3lsoft.com</span></div>
<div style="left:669px;top:292px;width:1px;height:21px;background:#c9d1dd"></div>
<div class="t" style="left:543px;width:120px;text-align:right;top:293.0px;font-size:12px;color:#000;font-weight:normal;"><span style="font-size:12.5px">00:05:01.807430</span></div>
<div style="left:769px;top:292px;width:1px;height:21px;background:#c9d1dd"></div>
<div class="t" style="left:663px;width:100px;text-align:right;top:293.0px;font-size:12px;color:#000;font-weight:normal;"><span style="font-size:12.5px">1.18 MB</span></div>
<div style="left:869px;top:292px;width:1px;height:21px;background:#c9d1dd"></div>
<div class="t" style="left:763px;width:100px;text-align:right;top:293.0px;font-size:12px;color:#000;font-weight:normal;"><span style="font-size:12.5px">65.78 KB</span></div>
<div style="left:969px;top:292px;width:1px;height:21px;background:#c9d1dd"></div>
<div class="t" style="left:863px;width:100px;text-align:right;top:293.0px;font-size:12px;color:#000;font-weight:normal;"><span style="font-size:12.5px">1.11 MB</span></div>
<div style="left:1069px;top:292px;width:1px;height:21px;background:#c9d1dd"></div>
<div class="t" style="left:963px;width:100px;text-align:right;top:293.0px;font-size:12px;color:#000;font-weight:normal;"><span style="font-size:12.5px">1,565</span></div>
<div style="left:1169px;top:292px;width:1px;height:21px;background:#c9d1dd"></div>
<div class="t" style="left:1063px;width:100px;text-align:right;top:293.0px;font-size:12px;color:#000;font-weight:normal;"><span style="font-size:12.5px">595</span></div>
<div style="left:1269px;top:292px;width:1px;height:21px;background:#c9d1dd"></div>
<div class="t" style="left:1163px;width:100px;text-align:right;top:293.0px;font-size:12px;color:#000;font-weight:normal;"><span style="font-size:12.5px">970</span></div>
<div style="left:1409px;top:292px;width:1px;height:21px;background:#c9d1dd"></div>
<div class="t" style="left:1263px;width:140px;text-align:right;top:293.0px;font-size:12px;color:#000;font-weight:normal;"><span style="font-size:13px">2016/07/29 22:41:51</span></div>
<div style="left:1549px;top:292px;width:1px;height:21px;background:#c9d1dd"></div>
<div class="t" style="left:1403px;width:140px;text-align:right;top:293.0px;font-size:12px;color:#000;font-weight:normal;"><span style="font-size:13px">2016/07/29 22:46:53</span></div>
<div style="left:250px;top:333px;width:1300px;height:1px;background:#c9d1dd"></div>
<div style="left:399px;top:313px;width:1px;height:21px;background:#c9d1dd"></div>
<div class="t" style="left:277px;top:314.0px;font-size:12px;color:#000;font-weight:normal;"><span style="font-size:12.5px">192.168.1.100</span></div>
<div style="left:549px;top:313px;width:1px;height:21px;background:#c9d1dd"></div>
<div class="t" style="left:426px;top:314.0px;font-size:12px;color:#2f8fa0;font-weight:normal;"><span style="font-size:12.8px">tj5.3lsoft.com</span></div>
<div style="left:669px;top:313px;width:1px;height:21px;background:#c9d1dd"></div>
<div class="t" style="left:543px;width:120px;text-align:right;top:314.0px;font-size:12px;color:#000;font-weight:normal;"><span style="font-size:12.5px">00:12:06.285508</span></div>
<div style="left:769px;top:313px;width:1px;height:21px;background:#c9d1dd"></div>
<div class="t" style="left:663px;width:100px;text-align:right;top:314.0px;font-size:12px;color:#000;font-weight:normal;"><span style="font-size:12.5px">20.29 KB</span></div>
<div style="left:869px;top:313px;width:1px;height:21px;background:#c9d1dd"></div>
<div class="t" style="left:763px;width:100px;text-align:right;top:314.0px;font-size:12px;color:#000;font-weight:normal;"><span style="font-size:12.5px">10.45 KB</span></div>
<div style="left:969px;top:313px;width:1px;height:21px;background:#c9d1dd"></div>
<div class="t" style="left:863px;width:100px;text-align:right;top:314.0px;font-size:12px;color:#000;font-weight:normal;"><span style="font-size:12.5px">9.84 KB</span></div>
<div style="left:1069px;top:313px;width:1px;height:21px;background:#c9d1dd"></div>
<div class="t" style="left:963px;width:100px;text-align:right;top:314.0px;font-size:12px;color:#000;font-weight:normal;"><span style="font-size:12.5px">117</span></div>
<div style="left:1169px;top:313px;width:1px;height:21px;background:#c9d1dd"></div>
<div class="t" style="left:1063px;width:100px;text-align:right;top:314.0px;font-size:12px;color:#000;font-weight:normal;"><span style="font-size:12.5px">63</span></div>
<div style="left:1269px;top:313px;width:1px;height:21px;background:#c9d1dd"></div>
<div class="t" style="left:1163px;width:100px;text-align:right;top:314.0px;font-size:12px;color:#000;font-weight:normal;"><span style="font-size:12.5px">54</span></div>
<div style="left:1409px;top:313px;width:1px;height:21px;background:#c9d1dd"></div>
<div class="t" style="left:1263px;width:140px;text-align:right;top:314.0px;font-size:12px;color:#000;font-weight:normal;"><span style="font-size:13px">2016/07/29 22:36:42</span></div>
<div style="left:1549px;top:313px;width:1px;height:21px;background:#c9d1dd"></div>
<div class="t" style="left:1403px;width:140px;text-align:right;top:314.0px;font-size:12px;color:#000;font-weight:normal;"><span style="font-size:13px">2016/07/29 22:48:48</span></div>
<div style="left:250px;top:354px;width:1300px;height:1px;background:#c9d1dd"></div>
<div style="left:250px;top:333px;width:1300px;height:22px;background:#a0c0f0;border-top:1px solid #7eaae6;border-bottom:1px solid #7eaae6"></div>
<div style="left:399px;top:333px;width:1px;height:22px;background:#7eaae6"></div>
<div class="t" style="left:277px;top:335.0px;font-size:12px;color:#000;font-weight:normal;"><span style="font-size:12.5px">192.168.1.100</span></div>
<div style="left:549px;top:333px;width:1px;height:22px;background:#7eaae6"></div>
<div class="t" style="left:426px;top:335.0px;font-size:12px;color:#2e9b2e;font-weight:normal;"><span style="font-size:12.8px">tj5.3lsoft.com</span></div>
<div style="left:669px;top:333px;width:1px;height:22px;background:#7eaae6"></div>
<div class="t" style="left:543px;width:120px;text-align:right;top:335.0px;font-size:12px;color:#000;font-weight:normal;"><span style="font-size:12.5px">00:07:52.830793</span></div>
<div style="left:769px;top:333px;width:1px;height:22px;background:#7eaae6"></div>
<div class="t" style="left:663px;width:100px;text-align:right;top:335.0px;font-size:12px;color:#000;font-weight:normal;"><span style="font-size:12.5px">34.60 KB</span></div>
<div style="left:869px;top:333px;width:1px;height:22px;background:#7eaae6"></div>
<div class="t" style="left:763px;width:100px;text-align:right;top:335.0px;font-size:12px;color:#000;font-weight:normal;"><span style="font-size:12.5px">13.84 KB</span></div>
<div style="left:969px;top:333px;width:1px;height:22px;background:#7eaae6"></div>
<div class="t" style="left:863px;width:100px;text-align:right;top:335.0px;font-size:12px;color:#000;font-weight:normal;"><span style="font-size:12.5px">20.75 KB</span></div>
<div style="left:1069px;top:333px;width:1px;height:22px;background:#7eaae6"></div>
<div class="t" style="left:963px;width:100px;text-align:right;top:335.0px;font-size:12px;color:#000;font-weight:normal;"><span style="font-size:12.5px">149</span></div>
<div style="left:1169px;top:333px;width:1px;height:22px;background:#7eaae6"></div>
<div class="t" style="left:1063px;width:100px;text-align:right;top:335.0px;font-size:12px;color:#000;font-weight:normal;"><span style="font-size:12.5px">88</span></div>
<div style="left:1269px;top:333px;width:1px;height:22px;background:#7eaae6"></div>
<div class="t" style="left:1163px;width:100px;text-align:right;top:335.0px;font-size:12px;color:#000;font-weight:normal;"><span style="font-size:12.5px">61</span></div>
<div style="left:1409px;top:333px;width:1px;height:22px;background:#7eaae6"></div>
<div class="t" style="left:1263px;width:140px;text-align:right;top:335.0px;font-size:12px;color:#000;font-weight:normal;"><span style="font-size:13px">2016/07/29 22:52:34</span></div>
<div style="left:1549px;top:333px;width:1px;height:22px;background:#7eaae6"></div>
<div class="t" style="left:1403px;width:140px;text-align:right;top:335.0px;font-size:12px;color:#000;font-weight:normal;"><span style="font-size:13px">2016/07/29 23:00:27</span></div>
<div style="left:250px;top:694px;width:1470px;height:1px;background:#6e6e6e"></div>
<div style="left:250px;top:695px;width:1470px;height:3px;background:#f0f0f0"></div>
<div style="left:250px;top:698px;width:1470px;height:1px;background:#6e6e6e"></div>
<svg style="position:absolute;left:0px;top:702px" width="1725" height="21" viewBox="0 0 1725 21"><defs><linearGradient id="tun" x1="0" y1="0" x2="0" y2="1"><stop offset="0" stop-color="#eef5fe"/><stop offset="1" stop-color="#c6dcf8"/></linearGradient><linearGradient id="tsel" x1="0" y1="0" x2="0" y2="1"><stop offset="0" stop-color="#fff3df"/><stop offset="0.5" stop-color="#ffdca8"/><stop offset="1" stop-color="#ffc479"/></linearGradient></defs><path d="M332.5 20.5 V4 Q332.5 0.5 336 0.5 H390 Q393.5 0.5 393.5 4 V20.5" fill="url(#tun)" stroke="#2b5597" stroke-width="1"/><path d="M257 20.5 L276 1.5 Q277 0.5 279 0.5 H328 Q331 0.5 331.5 4 V20.5" fill="url(#tsel)" stroke="#2b5597" stroke-width="1"/></svg>
<div class="t" style="left:278px;top:701.0px;font-size:12px;color:#15428b;font-weight:bold;"><span style="font-size:12.5px">TCP</span>会话</div>
<div class="t" style="left:338px;top:701.0px;font-size:12px;color:#15428b;font-weight:normal;"><span style="font-size:12.5px">UDP</span>会话</div>
<svg style="position:absolute;left:1694px;top:703px" width="6" height="10" viewBox="0 0 6 10"><path d="M5.5 0.5V9.5L0.5 5Z" fill="none" stroke="#3b5f95"/></svg>
<svg style="position:absolute;left:1708px;top:703px" width="6" height="10" viewBox="0 0 6 10"><path d="M0.5 0.5V9.5L5.5 5Z" fill="none" stroke="#3b5f95"/></svg>
<div style="left:250px;top:721px;width:1470px;height:269px;border:1px solid #2b5597;border-bottom:none;border-right:none"></div>
<div style="left:251px;top:722px;width:1467px;height:266px;border:1px solid #ffbd69;background:#fff"></div>
<div style="left:259px;top:721px;width:72px;height:1px;background:#ffc479"></div>
<div style="left:1718px;top:722px;width:1px;height:267px;background:#2b5597"></div>
<div style="left:251px;top:988px;width:1468px;height:1px;background:#2b5597"></div>
<div style="left:252px;top:723px;width:1465px;height:28px;background:linear-gradient(#e6f0fd,#d6e6fb 45%,#c8ddf9 55%,#bcd5f7);border-bottom:1px solid #8db2e3"></div>
<div class="t" style="left:354px;top:727.0px;font-size:12px;color:#000;font-weight:normal;">过滤<span style="font-size:12.5px">:</span></div>
<div style="left:384px;top:725px;width:267px;height:24px;background:#fff;border:1px solid #c3d3e8"></div>
<div style="left:637px;top:726px;width:13px;height:22px;background:linear-gradient(#eaf2fd,#d2e3f9)"></div>
<svg style="position:absolute;left:640px;top:735.0px" width="7" height="4" viewBox="0 0 7 4"><path d="M0 0H7L3.5 4Z" fill="#000"/></svg>
<div style="left:652px;top:725px;width:178px;height:24px;background:#fff;border:1px solid #c3d3e8"></div>
<div style="left:815px;top:726px;width:14px;height:22px;background:linear-gradient(#eaf2fd,#d2e3f9)"></div>
<svg style="position:absolute;left:819px;top:735.0px" width="7" height="4" viewBox="0 0 7 4"><path d="M0 0H7L3.5 4Z" fill="#000"/></svg>
<div class="t" style="left:656px;top:727.5px;font-size:12px;color:#000;font-weight:normal;">全部</div>
<div style="left:835px;top:731.0px;width:13px;height:13px;background:#fff;border:1px solid #8f9fb5"></div>
<div class="t" style="left:854px;top:727.5px;font-size:12px;color:#000;font-weight:normal;">全字匹配</div>
<div style="left:1413px;top:727px;width:1px;height:20px;background:#9dbbe4;box-shadow:1px 0 0 #f4f9ff"></div>
<div style="left:1417px;top:725px;width:297px;height:24px;background:#c1dbfc;border:1px solid #3b68b0"></div>
<div style="left:1684px;top:726px;width:29px;height:22px;background:#fff;border-left:1px solid #3b68b0"></div>
<div class="t" style="left:1426px;top:727.5px;font-size:12px;color:#000;font-weight:bold;"><span style="font-size:12.5px">192.168.1.100 &lt;-&gt; tj5.3lsoft.com\TCP</span>会话<span style="font-size:12.5px">:</span></div>
<div class="t" style="left:1684.0px;width:30px;text-align:center;top:727.5px;font-size:12px;color:#000;font-weight:normal;"><span style="font-size:12.5px">11</span></div>
<div style="left:252px;top:751px;width:1465px;height:1px;background:#8db2e3"></div>
<div style="left:252px;top:752px;width:1440px;height:24px;background:#d8e4f2;border-bottom:1px solid #c2ccd8"></div>
<div style="left:411px;top:752px;width:1px;height:24px;background:#c6cfdb"></div>
<div class="t" style="left:258px;top:754.0px;font-size:12px;color:#000;font-weight:normal;">节点<span style="font-size:12.5px">1-&gt;</span></div>
<div style="left:571px;top:752px;width:1px;height:24px;background:#c6cfdb"></div>
<div class="t" style="left:418px;top:754.0px;font-size:12px;color:#000;font-weight:normal;"><span style="font-size:12.5px">&lt;-</span>节点<span style="font-size:12.5px">2</span></div>
<div style="left:671px;top:752px;width:1px;height:24px;background:#c6cfdb"></div>
<div class="t" style="left:566px;width:100px;text-align:right;top:754.0px;font-size:12px;color:#000;font-weight:normal;">数据包</div>
<div style="left:771px;top:752px;width:1px;height:24px;background:#c6cfdb"></div>
<div class="t" style="left:666px;width:100px;text-align:right;top:754.0px;font-size:12px;color:#000;font-weight:normal;">字节数</div>
<div style="left:891px;top:752px;width:1px;height:24px;background:#c6cfdb"></div>
<div class="t" style="left:778px;top:754.0px;font-size:12px;color:#000;font-weight:normal;">协议</div>
<div style="left:1011px;top:752px;width:1px;height:24px;background:#c6cfdb"></div>
<div class="t" style="left:886px;width:120px;text-align:right;top:754.0px;font-size:12px;color:#000;font-weight:normal;">持续时间</div>
<div style="left:1111px;top:752px;width:1px;height:24px;background:#c6cfdb"></div>
<div class="t" style="left:1006px;width:100px;text-align:right;top:754.0px;font-size:12px;color:#000;font-weight:normal;">字节<span style="font-size:12.5px">-&gt;</span></div>
<div style="left:1211px;top:752px;width:1px;height:24px;background:#c6cfdb"></div>
<div class="t" style="left:1106px;width:100px;text-align:right;top:754.0px;font-size:12px;color:#000;font-weight:normal;"><span style="font-size:12.5px">&lt;-</span>字节</div>
<div style="left:1311px;top:752px;width:1px;height:24px;background:#c6cfdb"></div>
<div class="t" style="left:1206px;width:100px;text-align:right;top:754.0px;font-size:12px;color:#000;font-weight:normal;">数据包<span style="font-size:12.5px"> -&gt;</span></div>
<div style="left:1411px;top:752px;width:1px;height:24px;background:#c6cfdb"></div>
<div class="t" style="left:1306px;width:100px;text-align:right;top:754.0px;font-size:12px;color:#000;font-weight:normal;"><span style="font-size:12.5px">&lt;- </span>数据包</div>
<div style="left:1551px;top:752px;width:1px;height:24px;background:#c6cfdb"></div>
<div class="t" style="left:1406px;width:140px;text-align:right;top:754.0px;font-size:12px;color:#000;font-weight:normal;">开始发包时间</div>
<div style="left:1691px;top:752px;width:1px;height:24px;background:#c6cfdb"></div>
<div class="t" style="left:1529px;width:140px;text-align:right;top:754.0px;font-size:12px;color:#000;font-weight:normal;">最后发包时间</div>
<div style="left:252px;top:796px;width:1440px;height:1px;background:#c9d1dd"></div>
<div style="left:411px;top:776px;width:1px;height:21px;background:#c9d1dd"></div>
<div class="t" style="left:279px;top:777.0px;font-size:12px;color:#000;font-weight:normal;"><span style="font-size:12.5px">192.168.1.100:1434</span></div>
<div style="left:571px;top:776px;width:1px;height:21px;background:#c9d1dd"></div>
<div class="t" style="left:438px;top:777.0px;font-size:12px;color:#2e9b2e;font-weight:normal;"><span style="font-size:12.8px">tj5.3lsoft.com:80</span></div>
<div style="left:671px;top:776px;width:1px;height:21px;background:#c9d1dd"></div>
<div class="t" style="left:565px;width:100px;text-align:right;top:777.0px;font-size:12px;color:#000;font-weight:normal;"><span style="font-size:12.5px">13</span></div>
<div style="left:771px;top:776px;width:1px;height:21px;background:#c9d1dd"></div>
<div class="t" style="left:665px;width:100px;text-align:right;top:777.0px;font-size:12px;color:#000;font-weight:normal;"><span style="font-size:12.5px">3.14 KB</span></div>
<div style="left:891px;top:776px;width:1px;height:21px;background:#c9d1dd"></div>
<div class="t" style="left:778px;top:777.0px;font-size:12px;color:#e800e8;font-weight:normal;"><span style="font-size:12.5px">HTTP</span></div>
<div style="left:1011px;top:776px;width:1px;height:21px;background:#c9d1dd"></div>
<div class="t" style="left:885px;width:120px;text-align:right;top:777.0px;font-size:12px;color:#000;font-weight:normal;"><span style="font-size:12.5px">00:00:00.112077</span></div>
<div style="left:1111px;top:776px;width:1px;height:21px;background:#c9d1dd"></div>
<div class="t" style="left:1005px;width:100px;text-align:right;top:777.0px;font-size:12px;color:#000;font-weight:normal;"><span style="font-size:12.5px">1.22 KB</span></div>
<div style="left:1211px;top:776px;width:1px;height:21px;background:#c9d1dd"></div>
<div class="t" style="left:1105px;width:100px;text-align:right;top:777.0px;font-size:12px;color:#000;font-weight:normal;"><span style="font-size:12.5px">1.91 KB</span></div>
<div style="left:1311px;top:776px;width:1px;height:21px;background:#c9d1dd"></div>
<div class="t" style="left:1205px;width:100px;text-align:right;top:777.0px;font-size:12px;color:#000;font-weight:normal;"><span style="font-size:12.5px">8</span></div>
<div style="left:1411px;top:776px;width:1px;height:21px;background:#c9d1dd"></div>
<div class="t" style="left:1305px;width:100px;text-align:right;top:777.0px;font-size:12px;color:#000;font-weight:normal;"><span style="font-size:12.5px">5</span></div>
<div style="left:1551px;top:776px;width:1px;height:21px;background:#c9d1dd"></div>
<div class="t" style="left:1405px;width:140px;text-align:right;top:777.0px;font-size:12px;color:#000;font-weight:normal;"><span style="font-size:13px">2016/07/29 22:52:34</span></div>
<div style="left:1691px;top:776px;width:1px;height:21px;background:#c9d1dd"></div>
<div class="t" style="left:1545px;width:140px;text-align:right;top:777.0px;font-size:12px;color:#000;font-weight:normal;"><span style="font-size:13px">2016/07/29 22:52:34</span></div>
<div style="left:252px;top:817px;width:1440px;height:1px;background:#c9d1dd"></div>
<div style="left:411px;top:797px;width:1px;height:21px;background:#c9d1dd"></div>
<div class="t" style="left:279px;top:798.0px;font-size:12px;color:#000;font-weight:normal;"><span style="font-size:12.5px">192.168.1.100:1438</span></div>
<div style="left:571px;top:797px;width:1px;height:21px;background:#c9d1dd"></div>
<div class="t" style="left:438px;top:798.0px;font-size:12px;color:#2e9b2e;font-weight:normal;"><span style="font-size:12.8px">tj5.3lsoft.com:80</span></div>
<div style="left:671px;top:797px;width:1px;height:21px;background:#c9d1dd"></div>
<div class="t" style="left:565px;width:100px;text-align:right;top:798.0px;font-size:12px;color:#000;font-weight:normal;"><span style="font-size:12.5px">13</span></div>
<div style="left:771px;top:797px;width:1px;height:21px;background:#c9d1dd"></div>
<div class="t" style="left:665px;width:100px;text-align:right;top:798.0px;font-size:12px;color:#000;font-weight:normal;"><span style="font-size:12.5px">3.11 KB</span></div>
<div style="left:891px;top:797px;width:1px;height:21px;background:#c9d1dd"></div>
<div class="t" style="left:778px;top:798.0px;font-size:12px;color:#e800e8;font-weight:normal;"><span style="font-size:12.5px">HTTP</span></div>
<div style="left:1011px;top:797px;width:1px;height:21px;background:#c9d1dd"></div>
<div class="t" style="left:885px;width:120px;text-align:right;top:798.0px;font-size:12px;color:#000;font-weight:normal;"><span style="font-size:12.5px">00:00:00.122835</span></div>
<div style="left:1111px;top:797px;width:1px;height:21px;background:#c9d1dd"></div>
<div class="t" style="left:1005px;width:100px;text-align:right;top:798.0px;font-size:12px;color:#000;font-weight:normal;"><span style="font-size:12.5px">1.26 KB</span></div>
<div style="left:1211px;top:797px;width:1px;height:21px;background:#c9d1dd"></div>
<div class="t" style="left:1105px;width:100px;text-align:right;top:798.0px;font-size:12px;color:#000;font-weight:normal;"><span style="font-size:12.5px">1.85 KB</span></div>
<div style="left:1311px;top:797px;width:1px;height:21px;background:#c9d1dd"></div>
<div class="t" style="left:1205px;width:100px;text-align:right;top:798.0px;font-size:12px;color:#000;font-weight:normal;"><span style="font-size:12.5px">8</span></div>
<div style="left:1411px;top:797px;width:1px;height:21px;background:#c9d1dd"></div>
<div class="t" style="left:1305px;width:100px;text-align:right;top:798.0px;font-size:12px;color:#000;font-weight:normal;"><span style="font-size:12.5px">5</span></div>
<div style="left:1551px;top:797px;width:1px;height:21px;background:#c9d1dd"></div>
<div class="t" style="left:1405px;width:140px;text-align:right;top:798.0px;font-size:12px;color:#000;font-weight:normal;"><span style="font-size:13px">2016/07/29 22:53:34</span></div>
<div style="left:1691px;top:797px;width:1px;height:21px;background:#c9d1dd"></div>
<div class="t" style="left:1545px;width:140px;text-align:right;top:798.0px;font-size:12px;color:#000;font-weight:normal;"><span style="font-size:13px">2016/07/29 22:53:34</span></div>
<div style="left:252px;top:838px;width:1440px;height:1px;background:#c9d1dd"></div>
<div style="left:411px;top:818px;width:1px;height:21px;background:#c9d1dd"></div>
<div class="t" style="left:279px;top:819.0px;font-size:12px;color:#000;font-weight:normal;"><span style="font-size:12.5px">192.168.1.100:1442</span></div>
<div style="left:571px;top:818px;width:1px;height:21px;background:#c9d1dd"></div>
<div class="t" style="left:438px;top:819.0px;font-size:12px;color:#2e9b2e;font-weight:normal;"><span style="font-size:12.8px">tj5.3lsoft.com:80</span></div>
<div style="left:671px;top:818px;width:1px;height:21px;background:#c9d1dd"></div>
<div class="t" style="left:565px;width:100px;text-align:right;top:819.0px;font-size:12px;color:#000;font-weight:normal;"><span style="font-size:12.5px">14</span></div>
<div style="left:771px;top:818px;width:1px;height:21px;background:#c9d1dd"></div>
<div class="t" style="left:665px;width:100px;text-align:right;top:819.0px;font-size:12px;color:#000;font-weight:normal;"><span style="font-size:12.5px">3.17 KB</span></div>
<div style="left:891px;top:818px;width:1px;height:21px;background:#c9d1dd"></div>
<div class="t" style="left:778px;top:819.0px;font-size:12px;color:#e800e8;font-weight:normal;"><span style="font-size:12.5px">HTTP</span></div>
<div style="left:1011px;top:818px;width:1px;height:21px;background:#c9d1dd"></div>
<div class="t" style="left:885px;width:120px;text-align:right;top:819.0px;font-size:12px;color:#000;font-weight:normal;"><span style="font-size:12.5px">00:00:00.134583</span></div>
<div style="left:1111px;top:818px;width:1px;height:21px;background:#c9d1dd"></div>
<div class="t" style="left:1005px;width:100px;text-align:right;top:819.0px;font-size:12px;color:#000;font-weight:normal;"><span style="font-size:12.5px">1.26 KB</span></div>
<div style="left:1211px;top:818px;width:1px;height:21px;background:#c9d1dd"></div>
<div class="t" style="left:1105px;width:100px;text-align:right;top:819.0px;font-size:12px;color:#000;font-weight:normal;"><span style="font-size:12.5px">1.91 KB</span></div>
<div style="left:1311px;top:818px;width:1px;height:21px;background:#c9d1dd"></div>
<div class="t" style="left:1205px;width:100px;text-align:right;top:819.0px;font-size:12px;color:#000;font-weight:normal;"><span style="font-size:12.5px">8</span></div>
<div style="left:1411px;top:818px;width:1px;height:21px;background:#c9d1dd"></div>
<div class="t" style="left:1305px;width:100px;text-align:right;top:819.0px;font-size:12px;color:#000;font-weight:normal;"><span style="font-size:12.5px">6</span></div>
<div style="left:1551px;top:818px;width:1px;height:21px;background:#c9d1dd"></div>
<div class="t" style="left:1405px;width:140px;text-align:right;top:819.0px;font-size:12px;color:#000;font-weight:normal;"><span style="font-size:13px">2016/07/29 22:54:34</span></div>
<div style="left:1691px;top:818px;width:1px;height:21px;background:#c9d1dd"></div>
<div class="t" style="left:1545px;width:140px;text-align:right;top:819.0px;font-size:12px;color:#000;font-weight:normal;"><span style="font-size:13px">2016/07/29 22:54:34</span></div>
<div style="left:252px;top:859px;width:1440px;height:1px;background:#c9d1dd"></div>
<div style="left:411px;top:839px;width:1px;height:21px;background:#c9d1dd"></div>
<div class="t" style="left:279px;top:840.0px;font-size:12px;color:#000;font-weight:normal;"><span style="font-size:12.5px">192.168.1.100:1445</span></div>
<div style="left:571px;top:839px;width:1px;height:21px;background:#c9d1dd"></div>
<div class="t" style="left:438px;top:840.0px;font-size:12px;color:#2e9b2e;font-weight:normal;"><span style="font-size:12.8px">tj5.3lsoft.com:80</span></div>
<div style="left:671px;top:839px;width:1px;height:21px;background:#c9d1dd"></div>
<div class="t" style="left:565px;width:100px;text-align:right;top:840.0px;font-size:12px;color:#000;font-weight:normal;"><span style="font-size:12.5px">14</span></div>
<div style="left:771px;top:839px;width:1px;height:21px;background:#c9d1dd"></div>
<div class="t" style="left:665px;width:100px;text-align:right;top:840.0px;font-size:12px;color:#000;font-weight:normal;"><span style="font-size:12.5px">3.17 KB</span></div>
<div style="left:891px;top:839px;width:1px;height:21px;background:#c9d1dd"></div>
<div class="t" style="left:778px;top:840.0px;font-size:12px;color:#e800e8;font-weight:normal;"><span style="font-size:12.5px">HTTP</span></div>
<div style="left:1011px;top:839px;width:1px;height:21px;background:#c9d1dd"></div>
<div class="t" style="left:885px;width:120px;text-align:right;top:840.0px;font-size:12px;color:#000;font-weight:normal;"><span style="font-size:12.5px">00:00:00.174035</span></div>
<div style="left:1111px;top:839px;width:1px;height:21px;background:#c9d1dd"></div>
<div class="t" style="left:1005px;width:100px;text-align:right;top:840.0px;font-size:12px;color:#000;font-weight:normal;"><span style="font-size:12.5px">1.26 KB</span></div>
<div style="left:1211px;top:839px;width:1px;height:21px;background:#c9d1dd"></div>
<div class="t" style="left:1105px;width:100px;text-align:right;top:840.0px;font-size:12px;color:#000;font-weight:normal;"><span style="font-size:12.5px">1.91 KB</span></div>
<div style="left:1311px;top:839px;width:1px;height:21px;background:#c9d1dd"></div>
<div class="t" style="left:1205px;width:100px;text-align:right;top:840.0px;font-size:12px;color:#000;font-weight:normal;"><span style="font-size:12.5px">8</span></div>
<div style="left:1411px;top:839px;width:1px;height:21px;background:#c9d1dd"></div>
<div class="t" style="left:1305px;width:100px;text-align:right;top:840.0px;font-size:12px;color:#000;font-weight:normal;"><span style="font-size:12.5px">6</span></div>
<div style="left:1551px;top:839px;width:1px;height:21px;background:#c9d1dd"></div>
<div class="t" style="left:1405px;width:140px;text-align:right;top:840.0px;font-size:12px;color:#000;font-weight:normal;"><span style="font-size:13px">2016/07/29 22:55:34</span></div>
<div style="left:1691px;top:839px;width:1px;height:21px;background:#c9d1dd"></div>
<div class="t" style="left:1545px;width:140px;text-align:right;top:840.0px;font-size:12px;color:#000;font-weight:normal;"><span style="font-size:13px">2016/07/29 22:55:34</span></div>
<div style="left:252px;top:880px;width:1440px;height:1px;background:#c9d1dd"></div>
<div style="left:411px;top:860px;width:1px;height:21px;background:#c9d1dd"></div>
<div class="t" style="left:279px;top:861.0px;font-size:12px;color:#000;font-weight:normal;"><span style="font-size:12.5px">192.168.1.100:1448</span></div>
<div style="left:571px;top:860px;width:1px;height:21px;background:#c9d1dd"></div>
<div class="t" style="left:438px;top:861.0px;font-size:12px;color:#2e9b2e;font-weight:normal;"><span style="font-size:12.8px">tj5.3lsoft.com:80</span></div>
<div style="left:671px;top:860px;width:1px;height:21px;background:#c9d1dd"></div>
<div class="t" style="left:565px;width:100px;text-align:right;top:861.0px;font-size:12px;color:#000;font-weight:normal;"><span style="font-size:12.5px">13</span></div>
<div style="left:771px;top:860px;width:1px;height:21px;background:#c9d1dd"></div>
<div class="t" style="left:665px;width:100px;text-align:right;top:861.0px;font-size:12px;color:#000;font-weight:normal;"><span style="font-size:12.5px">3.11 KB</span></div>
<div style="left:891px;top:860px;width:1px;height:21px;background:#c9d1dd"></div>
<div class="t" style="left:778px;top:861.0px;font-size:12px;color:#e800e8;font-weight:normal;"><span style="font-size:12.5px">HTTP</span></div>
<div style="left:1011px;top:860px;width:1px;height:21px;background:#c9d1dd"></div>
<div class="t" style="left:885px;width:120px;text-align:right;top:861.0px;font-size:12px;color:#000;font-weight:normal;"><span style="font-size:12.5px">00:00:00.112870</span></div>
<div style="left:1111px;top:860px;width:1px;height:21px;background:#c9d1dd"></div>
<div class="t" style="left:1005px;width:100px;text-align:right;top:861.0px;font-size:12px;color:#000;font-weight:normal;"><span style="font-size:12.5px">1.26 KB</span></div>
<div style="left:1211px;top:860px;width:1px;height:21px;background:#c9d1dd"></div>
<div class="t" style="left:1105px;width:100px;text-align:right;top:861.0px;font-size:12px;color:#000;font-weight:normal;"><span style="font-size:12.5px">1.85 KB</span></div>
<div style="left:1311px;top:860px;width:1px;height:21px;background:#c9d1dd"></div>
<div class="t" style="left:1205px;width:100px;text-align:right;top:861.0px;font-size:12px;color:#000;font-weight:normal;"><span style="font-size:12.5px">8</span></div>
<div style="left:1411px;top:860px;width:1px;height:21px;background:#c9d1dd"></div>
<div class="t" style="left:1305px;width:100px;text-align:right;top:861.0px;font-size:12px;color:#000;font-weight:normal;"><span style="font-size:12.5px">5</span></div>
<div style="left:1551px;top:860px;width:1px;height:21px;background:#c9d1dd"></div>
<div class="t" style="left:1405px;width:140px;text-align:right;top:861.0px;font-size:12px;color:#000;font-weight:normal;"><span style="font-size:13px">2016/07/29 22:56:34</span></div>
<div style="left:1691px;top:860px;width:1px;height:21px;background:#c9d1dd"></div>
<div class="t" style="left:1545px;width:140px;text-align:right;top:861.0px;font-size:12px;color:#000;font-weight:normal;"><span style="font-size:13px">2016/07/29 22:56:34</span></div>
<div style="left:252px;top:901px;width:1440px;height:1px;background:#c9d1dd"></div>
<div style="left:411px;top:881px;width:1px;height:21px;background:#c9d1dd"></div>
<div class="t" style="left:279px;top:882.0px;font-size:12px;color:#000;font-weight:normal;"><span style="font-size:12.5px">192.168.1.100:1453</span></div>
<div style="left:571px;top:881px;width:1px;height:21px;background:#c9d1dd"></div>
<div class="t" style="left:438px;top:882.0px;font-size:12px;color:#2e9b2e;font-weight:normal;"><span style="font-size:12.8px">tj5.3lsoft.com:80</span></div>
<div style="left:671px;top:881px;width:1px;height:21px;background:#c9d1dd"></div>
<div class="t" style="left:565px;width:100px;text-align:right;top:882.0px;font-size:12px;color:#000;font-weight:normal;"><span style="font-size:12.5px">14</span></div>
<div style="left:771px;top:881px;width:1px;height:21px;background:#c9d1dd"></div>
<div class="t" style="left:665px;width:100px;text-align:right;top:882.0px;font-size:12px;color:#000;font-weight:normal;"><span style="font-size:12.5px">3.17 KB</span></div>
<div style="left:891px;top:881px;width:1px;height:21px;background:#c9d1dd"></div>
<div class="t" style="left:778px;top:882.0px;font-size:12px;color:#e800e8;font-weight:normal;"><span style="font-size:12.5px">HTTP</span></div>
<div style="left:1011px;top:881px;width:1px;height:21px;background:#c9d1dd"></div>
<div class="t" style="left:885px;width:120px;text-align:right;top:882.0px;font-size:12px;color:#000;font-weight:normal;"><span style="font-size:12.5px">00:00:00.139088</span></div>
<div style="left:1111px;top:881px;width:1px;height:21px;background:#c9d1dd"></div>
<div class="t" style="left:1005px;width:100px;text-align:right;top:882.0px;font-size:12px;color:#000;font-weight:normal;"><span style="font-size:12.5px">1.26 KB</span></div>
<div style="left:1211px;top:881px;width:1px;height:21px;background:#c9d1dd"></div>
<div class="t" style="left:1105px;width:100px;text-align:right;top:882.0px;font-size:12px;color:#000;font-weight:normal;"><span style="font-size:12.5px">1.91 KB</span></div>
<div style="left:1311px;top:881px;width:1px;height:21px;background:#c9d1dd"></div>
<div class="t" style="left:1205px;width:100px;text-align:right;top:882.0px;font-size:12px;color:#000;font-weight:normal;"><span style="font-size:12.5px">8</span></div>
<div style="left:1411px;top:881px;width:1px;height:21px;background:#c9d1dd"></div>
<div class="t" style="left:1305px;width:100px;text-align:right;top:882.0px;font-size:12px;color:#000;font-weight:normal;"><span style="font-size:12.5px">6</span></div>
<div style="left:1551px;top:881px;width:1px;height:21px;background:#c9d1dd"></div>
<div class="t" style="left:1405px;width:140px;text-align:right;top:882.0px;font-size:12px;color:#000;font-weight:normal;"><span style="font-size:13px">2016/07/29 22:57:34</span></div>
<div style="left:1691px;top:881px;width:1px;height:21px;background:#c9d1dd"></div>
<div class="t" style="left:1545px;width:140px;text-align:right;top:882.0px;font-size:12px;color:#000;font-weight:normal;"><span style="font-size:13px">2016/07/29 22:57:34</span></div>
<div style="left:252px;top:922px;width:1440px;height:1px;background:#c9d1dd"></div>
<div style="left:411px;top:902px;width:1px;height:21px;background:#c9d1dd"></div>
<div class="t" style="left:279px;top:903.0px;font-size:12px;color:#000;font-weight:normal;"><span style="font-size:12.5px">192.168.1.100:1481</span></div>
<div style="left:571px;top:902px;width:1px;height:21px;background:#c9d1dd"></div>
<div class="t" style="left:438px;top:903.0px;font-size:12px;color:#2e9b2e;font-weight:normal;"><span style="font-size:12.8px">tj5.3lsoft.com:80</span></div>
<div style="left:671px;top:902px;width:1px;height:21px;background:#c9d1dd"></div>
<div class="t" style="left:565px;width:100px;text-align:right;top:903.0px;font-size:12px;color:#000;font-weight:normal;"><span style="font-size:12.5px">13</span></div>
<div style="left:771px;top:902px;width:1px;height:21px;background:#c9d1dd"></div>
<div class="t" style="left:665px;width:100px;text-align:right;top:903.0px;font-size:12px;color:#000;font-weight:normal;"><span style="font-size:12.5px">3.11 KB</span></div>
<div style="left:891px;top:902px;width:1px;height:21px;background:#c9d1dd"></div>
<div class="t" style="left:778px;top:903.0px;font-size:12px;color:#e800e8;font-weight:normal;"><span style="font-size:12.5px">HTTP</span></div>
<div style="left:1011px;top:902px;width:1px;height:21px;background:#c9d1dd"></div>
<div class="t" style="left:885px;width:120px;text-align:right;top:903.0px;font-size:12px;color:#000;font-weight:normal;"><span style="font-size:12.5px">00:00:00.132871</span></div>
<div style="left:1111px;top:902px;width:1px;height:21px;background:#c9d1dd"></div>
<div class="t" style="left:1005px;width:100px;text-align:right;top:903.0px;font-size:12px;color:#000;font-weight:normal;"><span style="font-size:12.5px">1.26 KB</span></div>
<div style="left:1211px;top:902px;width:1px;height:21px;background:#c9d1dd"></div>
<div class="t" style="left:1105px;width:100px;text-align:right;top:903.0px;font-size:12px;color:#000;font-weight:normal;"><span style="font-size:12.5px">1.85 KB</span></div>
<div style="left:1311px;top:902px;width:1px;height:21px;background:#c9d1dd"></div>
<div class="t" style="left:1205px;width:100px;text-align:right;top:903.0px;font-size:12px;color:#000;font-weight:normal;"><span style="font-size:12.5px">8</span></div>
<div style="left:1411px;top:902px;width:1px;height:21px;background:#c9d1dd"></div>
<div class="t" style="left:1305px;width:100px;text-align:right;top:903.0px;font-size:12px;color:#000;font-weight:normal;"><span style="font-size:12.5px">5</span></div>
<div style="left:1551px;top:902px;width:1px;height:21px;background:#c9d1dd"></div>
<div class="t" style="left:1405px;width:140px;text-align:right;top:903.0px;font-size:12px;color:#000;font-weight:normal;"><span style="font-size:13px">2016/07/29 22:58:34</span></div>
<div style="left:1691px;top:902px;width:1px;height:21px;background:#c9d1dd"></div>
<div class="t" style="left:1545px;width:140px;text-align:right;top:903.0px;font-size:12px;color:#000;font-weight:normal;"><span style="font-size:13px">2016/07/29 22:58:34</span></div>
<div style="left:252px;top:943px;width:1440px;height:1px;background:#c9d1dd"></div>
<div style="left:252px;top:922px;width:1440px;height:22px;background:#a0c0f0;border-top:1px solid #7eaae6;border-bottom:1px solid #7eaae6"></div>
<div style="left:411px;top:922px;width:1px;height:22px;background:#7eaae6"></div>
<div class="t" style="left:279px;top:924.0px;font-size:12px;color:#000;font-weight:normal;"><span style="font-size:12.5px">192.168.1.100:1486</span></div>
<div style="left:571px;top:922px;width:1px;height:22px;background:#7eaae6"></div>
<div class="t" style="left:438px;top:924.0px;font-size:12px;color:#2e9b2e;font-weight:normal;"><span style="font-size:12.8px">tj5.3lsoft.com:80</span></div>
<div style="left:671px;top:922px;width:1px;height:22px;background:#7eaae6"></div>
<div class="t" style="left:565px;width:100px;text-align:right;top:924.0px;font-size:12px;color:#000;font-weight:normal;"><span style="font-size:12.5px">14</span></div>
<div style="left:771px;top:922px;width:1px;height:22px;background:#7eaae6"></div>
<div class="t" style="left:665px;width:100px;text-align:right;top:924.0px;font-size:12px;color:#000;font-weight:normal;"><span style="font-size:12.5px">3.17 KB</span></div>
<div style="left:891px;top:922px;width:1px;height:22px;background:#7eaae6"></div>
<div class="t" style="left:778px;top:924.0px;font-size:12px;color:#e800e8;font-weight:normal;"><span style="font-size:12.5px">HTTP</span></div>
<div style="left:1011px;top:922px;width:1px;height:22px;background:#7eaae6"></div>
<div class="t" style="left:885px;width:120px;text-align:right;top:924.0px;font-size:12px;color:#000;font-weight:normal;"><span style="font-size:12.5px">00:00:00.151449</span></div>
<div style="left:1111px;top:922px;width:1px;height:22px;background:#7eaae6"></div>
<div class="t" style="left:1005px;width:100px;text-align:right;top:924.0px;font-size:12px;color:#000;font-weight:normal;"><span style="font-size:12.5px">1.26 KB</span></div>
<div style="left:1211px;top:922px;width:1px;height:22px;background:#7eaae6"></div>
<div class="t" style="left:1105px;width:100px;text-align:right;top:924.0px;font-size:12px;color:#000;font-weight:normal;"><span style="font-size:12.5px">1.91 KB</span></div>
<div style="left:1311px;top:922px;width:1px;height:22px;background:#7eaae6"></div>
<div class="t" style="left:1205px;width:100px;text-align:right;top:924.0px;font-size:12px;color:#000;font-weight:normal;"><span style="font-size:12.5px">8</span></div>
<div style="left:1411px;top:922px;width:1px;height:22px;background:#7eaae6"></div>
<div class="t" style="left:1305px;width:100px;text-align:right;top:924.0px;font-size:12px;color:#000;font-weight:normal;"><span style="font-size:12.5px">6</span></div>
<div style="left:1551px;top:922px;width:1px;height:22px;background:#7eaae6"></div>
<div class="t" style="left:1405px;width:140px;text-align:right;top:924.0px;font-size:12px;color:#000;font-weight:normal;"><span style="font-size:13px">2016/07/29 22:59:34</span></div>
<div style="left:1691px;top:922px;width:1px;height:22px;background:#7eaae6"></div>
<div class="t" style="left:1545px;width:140px;text-align:right;top:924.0px;font-size:12px;color:#000;font-weight:normal;"><span style="font-size:13px">2016/07/29 22:59:34</span></div>
<div style="left:252px;top:964px;width:1440px;height:1px;background:#c9d1dd"></div>
<div style="left:411px;top:944px;width:1px;height:21px;background:#c9d1dd"></div>
<div class="t" style="left:279px;top:945.0px;font-size:12px;color:#000;font-weight:normal;"><span style="font-size:12.5px">192.168.1.100:1490</span></div>
<div style="left:571px;top:944px;width:1px;height:21px;background:#c9d1dd"></div>
<div class="t" style="left:438px;top:945.0px;font-size:12px;color:#2e9b2e;font-weight:normal;"><span style="font-size:12.8px">tj5.3lsoft.com:80</span></div>
<div style="left:671px;top:944px;width:1px;height:21px;background:#c9d1dd"></div>
<div class="t" style="left:565px;width:100px;text-align:right;top:945.0px;font-size:12px;color:#000;font-weight:normal;"><span style="font-size:12.5px">13</span></div>
<div style="left:771px;top:944px;width:1px;height:21px;background:#c9d1dd"></div>
<div class="t" style="left:665px;width:100px;text-align:right;top:945.0px;font-size:12px;color:#000;font-weight:normal;"><span style="font-size:12.5px">3.11 KB</span></div>
<div style="left:891px;top:944px;width:1px;height:21px;background:#c9d1dd"></div>
<div class="t" style="left:778px;top:945.0px;font-size:12px;color:#e800e8;font-weight:normal;"><span style="font-size:12.5px">HTTP</span></div>
<div style="left:1011px;top:944px;width:1px;height:21px;background:#c9d1dd"></div>
<div class="t" style="left:885px;width:120px;text-align:right;top:945.0px;font-size:12px;color:#000;font-weight:normal;"><span style="font-size:12.5px">00:00:00.341244</span></div>
<div style="left:1111px;top:944px;width:1px;height:21px;background:#c9d1dd"></div>
<div class="t" style="left:1005px;width:100px;text-align:right;top:945.0px;font-size:12px;color:#000;font-weight:normal;"><span style="font-size:12.5px">1.26 KB</span></div>
<div style="left:1211px;top:944px;width:1px;height:21px;background:#c9d1dd"></div>
<div class="t" style="left:1105px;width:100px;text-align:right;top:945.0px;font-size:12px;color:#000;font-weight:normal;"><span style="font-size:12.5px">1.85 KB</span></div>
<div style="left:1311px;top:944px;width:1px;height:21px;background:#c9d1dd"></div>
<div class="t" style="left:1205px;width:100px;text-align:right;top:945.0px;font-size:12px;color:#000;font-weight:normal;"><span style="font-size:12.5px">8</span></div>
<div style="left:1411px;top:944px;width:1px;height:21px;background:#c9d1dd"></div>
<div class="t" style="left:1305px;width:100px;text-align:right;top:945.0px;font-size:12px;color:#000;font-weight:normal;"><span style="font-size:12.5px">5</span></div>
<div style="left:1551px;top:944px;width:1px;height:21px;background:#c9d1dd"></div>
<div class="t" style="left:1405px;width:140px;text-align:right;top:945.0px;font-size:12px;color:#000;font-weight:normal;"><span style="font-size:13px">2016/07/29 23:00:23</span></div>
<div style="left:1691px;top:944px;width:1px;height:21px;background:#c9d1dd"></div>
<div class="t" style="left:1545px;width:140px;text-align:right;top:945.0px;font-size:12px;color:#000;font-weight:normal;"><span style="font-size:13px">2016/07/29 23:00:23</span></div>
<div style="left:252px;top:985px;width:1440px;height:1px;background:#c9d1dd"></div>
<div style="left:411px;top:965px;width:1px;height:21px;background:#c9d1dd"></div>
<div class="t" style="left:279px;top:966.0px;font-size:12px;color:#000;font-weight:normal;"><span style="font-size:12.5px">192.168.1.100:1492</span></div>
<div style="left:571px;top:965px;width:1px;height:21px;background:#c9d1dd"></div>
<div class="t" style="left:438px;top:966.0px;font-size:12px;color:#2e9b2e;font-weight:normal;"><span style="font-size:12.8px">tj5.3lsoft.com:80</span></div>
<div style="left:671px;top:965px;width:1px;height:21px;background:#c9d1dd"></div>
<div class="t" style="left:565px;width:100px;text-align:right;top:966.0px;font-size:12px;color:#000;font-weight:normal;"><span style="font-size:12.5px">14</span></div>
<div style="left:771px;top:965px;width:1px;height:21px;background:#c9d1dd"></div>
<div class="t" style="left:665px;width:100px;text-align:right;top:966.0px;font-size:12px;color:#000;font-weight:normal;"><span style="font-size:12.5px">3.17 KB</span></div>
<div style="left:891px;top:965px;width:1px;height:21px;background:#c9d1dd"></div>
<div class="t" style="left:778px;top:966.0px;font-size:12px;color:#e800e8;font-weight:normal;"><span style="font-size:12.5px">HTTP</span></div>
<div style="left:1011px;top:965px;width:1px;height:21px;background:#c9d1dd"></div>
<div class="t" style="left:885px;width:120px;text-align:right;top:966.0px;font-size:12px;color:#000;font-weight:normal;"><span style="font-size:12.5px">00:00:00.159949</span></div>
<div style="left:1111px;top:965px;width:1px;height:21px;background:#c9d1dd"></div>
<div class="t" style="left:1005px;width:100px;text-align:right;top:966.0px;font-size:12px;color:#000;font-weight:normal;"><span style="font-size:12.5px">1.26 KB</span></div>
<div style="left:1211px;top:965px;width:1px;height:21px;background:#c9d1dd"></div>
<div class="t" style="left:1105px;width:100px;text-align:right;top:966.0px;font-size:12px;color:#000;font-weight:normal;"><span style="font-size:12.5px">1.91 KB</span></div>
<div style="left:1311px;top:965px;width:1px;height:21px;background:#c9d1dd"></div>
<div class="t" style="left:1205px;width:100px;text-align:right;top:966.0px;font-size:12px;color:#000;font-weight:normal;"><span style="font-size:12.5px">8</span></div>
<div style="left:1411px;top:965px;width:1px;height:21px;background:#c9d1dd"></div>
<div class="t" style="left:1305px;width:100px;text-align:right;top:966.0px;font-size:12px;color:#000;font-weight:normal;"><span style="font-size:12.5px">6</span></div>
<div style="left:1551px;top:965px;width:1px;height:21px;background:#c9d1dd"></div>
<div class="t" style="left:1405px;width:140px;text-align:right;top:966.0px;font-size:12px;color:#000;font-weight:normal;"><span style="font-size:13px">2016/07/29 23:00:27</span></div>
<div style="left:1691px;top:965px;width:1px;height:21px;background:#c9d1dd"></div>
<div class="t" style="left:1545px;width:140px;text-align:right;top:966.0px;font-size:12px;color:#000;font-weight:normal;"><span style="font-size:13px">2016/07/29 23:00:27</span></div>
<svg style="position:absolute;left:1675px;top:761px" width="8" height="5" viewBox="0 0 8 5"><path d="M0 5H8L4 0Z" fill="#000"/></svg>
<div style="left:252px;top:986px;width:1465px;height:1px;background:#fff"></div>
<div style="left:1692px;top:752px;width:9px;height:235px;background:#fff"></div>
<div style="left:1701px;top:752px;width:15px;height:235px;background:#f0f0f0"></div>
<div style="left:1702px;top:769px;width:13px;height:182px;background:#cdcdcd"></div>
<svg style="position:absolute;left:1704px;top:757px" width="8" height="5" viewBox="0 0 8 5"><path d="M0.5 4.5L4 1L7.5 4.5" fill="none" stroke="#606060" stroke-width="1.5"/></svg>
<svg style="position:absolute;left:1704px;top:978px" width="8" height="5" viewBox="0 0 8 5"><path d="M0.5 0.5L4 4L7.5 0.5" fill="none" stroke="#606060" stroke-width="1.5"/></svg>
<svg style="position:absolute;left:256px;top:252px" width="16" height="16" viewBox="0 0 16 16"><rect x="0.5" y="0.5" width="13" height="8" fill="#72ade6" stroke="#3a5f92"/><path d="M1 1H13V3.2L1 5Z" fill="#a9d3f6"/><rect x="12" y="7" width="1" height="1" fill="#22c022"/><path d="M5 9H9L10 10.5H4Z" fill="#3a4e66"/><rect x="0.5" y="10.5" width="13" height="4" rx="1" fill="#edf0f4" stroke="#4a6689"/><rect x="2" y="12" width="2" height="1.3" fill="#e02020"/><rect x="9.5" y="12" width="2.5" height="1" fill="#333"/></svg>
<svg style="position:absolute;left:406px;top:252px" width="16" height="16" viewBox="0 0 16 16"><rect x="0.5" y="0.5" width="13" height="8" fill="#72ade6" stroke="#3a5f92"/><path d="M1 1H13V3.2L1 5Z" fill="#a9d3f6"/><rect x="12" y="7" width="1" height="1" fill="#22c022"/><path d="M5 9H9L10 10.5H4Z" fill="#3a4e66"/><rect x="0.5" y="10.5" width="13" height="4" rx="1" fill="#edf0f4" stroke="#4a6689"/><rect x="2" y="12" width="2" height="1.3" fill="#e02020"/><rect x="9.5" y="12" width="2.5" height="1" fill="#333"/><circle cx="11.2" cy="11" r="4.3" fill="#3d86dc" stroke="#2a5aa0" stroke-width="0.5"/><path d="M7.6 9.2Q9.5 8.6 10.6 10Q9.8 12.2 8 12.6Q7 11 7.6 9.2Z" fill="#4fc040"/><path d="M10.2 13.2Q12.2 12.6 13.2 14.6Q11.5 15.6 9.8 15Z" fill="#3aa83a"/><path d="M12.5 7.2Q14.6 8 15.3 10.2Q13.8 10.6 12.6 9.4Z" fill="#4fc040"/><circle cx="12" cy="9.6" r="1.3" fill="#9cc8f4" fill-opacity="0.7"/></svg>
<svg style="position:absolute;left:256px;top:273px" width="16" height="16" viewBox="0 0 16 16"><rect x="0.5" y="0.5" width="13" height="8" fill="#72ade6" stroke="#3a5f92"/><path d="M1 1H13V3.2L1 5Z" fill="#a9d3f6"/><rect x="12" y="7" width="1" height="1" fill="#22c022"/><path d="M5 9H9L10 10.5H4Z" fill="#3a4e66"/><rect x="0.5" y="10.5" width="13" height="4" rx="1" fill="#edf0f4" stroke="#4a6689"/><rect x="2" y="12" width="2" height="1.3" fill="#e02020"/><rect x="9.5" y="12" width="2.5" height="1" fill="#333"/></svg>
<svg style="position:absolute;left:406px;top:273px" width="16" height="16" viewBox="0 0 16 16"><rect x="0.5" y="0.5" width="13" height="8" fill="#72ade6" stroke="#3a5f92"/><path d="M1 1H13V3.2L1 5Z" fill="#a9d3f6"/><rect x="12" y="7" width="1" height="1" fill="#22c022"/><path d="M5 9H9L10 10.5H4Z" fill="#3a4e66"/><rect x="0.5" y="10.5" width="13" height="4" rx="1" fill="#edf0f4" stroke="#4a6689"/><rect x="2" y="12" width="2" height="1.3" fill="#e02020"/><rect x="9.5" y="12" width="2.5" height="1" fill="#333"/><circle cx="11.2" cy="11" r="4.3" fill="#3d86dc" stroke="#2a5aa0" stroke-width="0.5"/><path d="M7.6 9.2Q9.5 8.6 10.6 10Q9.8 12.2 8 12.6Q7 11 7.6 9.2Z" fill="#4fc040"/><path d="M10.2 13.2Q12.2 12.6 13.2 14.6Q11.5 15.6 9.8 15Z" fill="#3aa83a"/><path d="M12.5 7.2Q14.6 8 15.3 10.2Q13.8 10.6 12.6 9.4Z" fill="#4fc040"/><circle cx="12" cy="9.6" r="1.3" fill="#9cc8f4" fill-opacity="0.7"/></svg>
<svg style="position:absolute;left:256px;top:294px" width="16" height="16" viewBox="0 0 16 16"><rect x="0.5" y="0.5" width="13" height="8" fill="#72ade6" stroke="#3a5f92"/><path d="M1 1H13V3.2L1 5Z" fill="#a9d3f6"/><rect x="12" y="7" width="1" height="1" fill="#22c022"/><path d="M5 9H9L10 10.5H4Z" fill="#3a4e66"/><rect x="0.5" y="10.5" width="13" height="4" rx="1" fill="#edf0f4" stroke="#4a6689"/><rect x="2" y="12" width="2" height="1.3" fill="#e02020"/><rect x="9.5" y="12" width="2.5" height="1" fill="#333"/></svg>
<svg style="position:absolute;left:406px;top:294px" width="16" height="16" viewBox="0 0 16 16"><rect x="0.5" y="0.5" width="13" height="8" fill="#72ade6" stroke="#3a5f92"/><path d="M1 1H13V3.2L1 5Z" fill="#a9d3f6"/><rect x="12" y="7" width="1" height="1" fill="#22c022"/><path d="M5 9H9L10 10.5H4Z" fill="#3a4e66"/><rect x="0.5" y="10.5" width="13" height="4" rx="1" fill="#edf0f4" stroke="#4a6689"/><rect x="2" y="12" width="2" height="1.3" fill="#e02020"/><rect x="9.5" y="12" width="2.5" height="1" fill="#333"/><circle cx="11.2" cy="11" r="4.3" fill="#3d86dc" stroke="#2a5aa0" stroke-width="0.5"/><path d="M7.6 9.2Q9.5 8.6 10.6 10Q9.8 12.2 8 12.6Q7 11 7.6 9.2Z" fill="#4fc040"/><path d="M10.2 13.2Q12.2 12.6 13.2 14.6Q11.5 15.6 9.8 15Z" fill="#3aa83a"/><path d="M12.5 7.2Q14.6 8 15.3 10.2Q13.8 10.6 12.6 9.4Z" fill="#4fc040"/><circle cx="12" cy="9.6" r="1.3" fill="#9cc8f4" fill-opacity="0.7"/></svg>
<svg style="position:absolute;left:256px;top:315px" width="16" height="16" viewBox="0 0 16 16"><rect x="0.5" y="0.5" width="13" height="8" fill="#72ade6" stroke="#3a5f92"/><path d="M1 1H13V3.2L1 5Z" fill="#a9d3f6"/><rect x="12" y="7" width="1" height="1" fill="#22c022"/><path d="M5 9H9L10 10.5H4Z" fill="#3a4e66"/><rect x="0.5" y="10.5" width="13" height="4" rx="1" fill="#edf0f4" stroke="#4a6689"/><rect x="2" y="12" width="2" height="1.3" fill="#e02020"/><rect x="9.5" y="12" width="2.5" height="1" fill="#333"/></svg>
<svg style="position:absolute;left:406px;top:315px" width="16" height="16" viewBox="0 0 16 16"><rect x="0.5" y="0.5" width="13" height="8" fill="#72ade6" stroke="#3a5f92"/><path d="M1 1H13V3.2L1 5Z" fill="#a9d3f6"/><rect x="12" y="7" width="1" height="1" fill="#22c022"/><path d="M5 9H9L10 10.5H4Z" fill="#3a4e66"/><rect x="0.5" y="10.5" width="13" height="4" rx="1" fill="#edf0f4" stroke="#4a6689"/><rect x="2" y="12" width="2" height="1.3" fill="#e02020"/><rect x="9.5" y="12" width="2.5" height="1" fill="#333"/><circle cx="11.2" cy="11" r="4.3" fill="#3d86dc" stroke="#2a5aa0" stroke-width="0.5"/><path d="M7.6 9.2Q9.5 8.6 10.6 10Q9.8 12.2 8 12.6Q7 11 7.6 9.2Z" fill="#4fc040"/><path d="M10.2 13.2Q12.2 12.6 13.2 14.6Q11.5 15.6 9.8 15Z" fill="#3aa83a"/><path d="M12.5 7.2Q14.6 8 15.3 10.2Q13.8 10.6 12.6 9.4Z" fill="#4fc040"/><circle cx="12" cy="9.6" r="1.3" fill="#9cc8f4" fill-opacity="0.7"/></svg>
<svg style="position:absolute;left:256px;top:336px" width="16" height="16" viewBox="0 0 16 16"><rect x="0.5" y="0.5" width="13" height="8" fill="#72ade6" stroke="#3a5f92"/><path d="M1 1H13V3.2L1 5Z" fill="#a9d3f6"/><rect x="12" y="7" width="1" height="1" fill="#22c022"/><path d="M5 9H9L10 10.5H4Z" fill="#3a4e66"/><rect x="0.5" y="10.5" width="13" height="4" rx="1" fill="#edf0f4" stroke="#4a6689"/><rect x="2" y="12" width="2" height="1.3" fill="#e02020"/><rect x="9.5" y="12" width="2.5" height="1" fill="#333"/></svg>
<svg style="position:absolute;left:406px;top:336px" width="16" height="16" viewBox="0 0 16 16"><rect x="0.5" y="0.5" width="13" height="8" fill="#72ade6" stroke="#3a5f92"/><path d="M1 1H13V3.2L1 5Z" fill="#a9d3f6"/><rect x="12" y="7" width="1" height="1" fill="#22c022"/><path d="M5 9H9L10 10.5H4Z" fill="#3a4e66"/><rect x="0.5" y="10.5" width="13" height="4" rx="1" fill="#edf0f4" stroke="#4a6689"/><rect x="2" y="12" width="2" height="1.3" fill="#e02020"/><rect x="9.5" y="12" width="2.5" height="1" fill="#333"/><circle cx="11.2" cy="11" r="4.3" fill="#3d86dc" stroke="#2a5aa0" stroke-width="0.5"/><path d="M7.6 9.2Q9.5 8.6 10.6 10Q9.8 12.2 8 12.6Q7 11 7.6 9.2Z" fill="#4fc040"/><path d="M10.2 13.2Q12.2 12.6 13.2 14.6Q11.5 15.6 9.8 15Z" fill="#3aa83a"/><path d="M12.5 7.2Q14.6 8 15.3 10.2Q13.8 10.6 12.6 9.4Z" fill="#4fc040"/><circle cx="12" cy="9.6" r="1.3" fill="#9cc8f4" fill-opacity="0.7"/></svg>
<svg style="position:absolute;left:258px;top:778px" width="16" height="16" viewBox="0 0 16 16"><rect x="0.5" y="0.5" width="13" height="8" fill="#72ade6" stroke="#3a5f92"/><path d="M1 1H13V3.2L1 5Z" fill="#a9d3f6"/><rect x="12" y="7" width="1" height="1" fill="#22c022"/><path d="M5 9H9L10 10.5H4Z" fill="#3a4e66"/><rect x="0.5" y="10.5" width="13" height="4" rx="1" fill="#edf0f4" stroke="#4a6689"/><rect x="2" y="12" width="2" height="1.3" fill="#e02020"/><rect x="9.5" y="12" width="2.5" height="1" fill="#333"/></svg>
<svg style="position:absolute;left:418px;top:778px" width="16" height="16" viewBox="0 0 16 16"><rect x="0.5" y="0.5" width="13" height="8" fill="#72ade6" stroke="#3a5f92"/><path d="M1 1H13V3.2L1 5Z" fill="#a9d3f6"/><rect x="12" y="7" width="1" height="1" fill="#22c022"/><path d="M5 9H9L10 10.5H4Z" fill="#3a4e66"/><rect x="0.5" y="10.5" width="13" height="4" rx="1" fill="#edf0f4" stroke="#4a6689"/><rect x="2" y="12" width="2" height="1.3" fill="#e02020"/><rect x="9.5" y="12" width="2.5" height="1" fill="#333"/><circle cx="11.2" cy="11" r="4.3" fill="#3d86dc" stroke="#2a5aa0" stroke-width="0.5"/><path d="M7.6 9.2Q9.5 8.6 10.6 10Q9.8 12.2 8 12.6Q7 11 7.6 9.2Z" fill="#4fc040"/><path d="M10.2 13.2Q12.2 12.6 13.2 14.6Q11.5 15.6 9.8 15Z" fill="#3aa83a"/><path d="M12.5 7.2Q14.6 8 15.3 10.2Q13.8 10.6 12.6 9.4Z" fill="#4fc040"/><circle cx="12" cy="9.6" r="1.3" fill="#9cc8f4" fill-opacity="0.7"/></svg>
<svg style="position:absolute;left:258px;top:799px" width="16" height="16" viewBox="0 0 16 16"><rect x="0.5" y="0.5" width="13" height="8" fill="#72ade6" stroke="#3a5f92"/><path d="M1 1H13V3.2L1 5Z" fill="#a9d3f6"/><rect x="12" y="7" width="1" height="1" fill="#22c022"/><path d="M5 9H9L10 10.5H4Z" fill="#3a4e66"/><rect x="0.5" y="10.5" width="13" height="4" rx="1" fill="#edf0f4" stroke="#4a6689"/><rect x="2" y="12" width="2" height="1.3" fill="#e02020"/><rect x="9.5" y="12" width="2.5" height="1" fill="#333"/></svg>
<svg style="position:absolute;left:418px;top:799px" width="16" height="16" viewBox="0 0 16 16"><rect x="0.5" y="0.5" width="13" height="8" fill="#72ade6" stroke="#3a5f92"/><path d="M1 1H13V3.2L1 5Z" fill="#a9d3f6"/><rect x="12" y="7" width="1" height="1" fill="#22c022"/><path d="M5 9H9L10 10.5H4Z" fill="#3a4e66"/><rect x="0.5" y="10.5" width="13" height="4" rx="1" fill="#edf0f4" stroke="#4a6689"/><rect x="2" y="12" width="2" height="1.3" fill="#e02020"/><rect x="9.5" y="12" width="2.5" height="1" fill="#333"/><circle cx="11.2" cy="11" r="4.3" fill="#3d86dc" stroke="#2a5aa0" stroke-width="0.5"/><path d="M7.6 9.2Q9.5 8.6 10.6 10Q9.8 12.2 8 12.6Q7 11 7.6 9.2Z" fill="#4fc040"/><path d="M10.2 13.2Q12.2 12.6 13.2 14.6Q11.5 15.6 9.8 15Z" fill="#3aa83a"/><path d="M12.5 7.2Q14.6 8 15.3 10.2Q13.8 10.6 12.6 9.4Z" fill="#4fc040"/><circle cx="12" cy="9.6" r="1.3" fill="#9cc8f4" fill-opacity="0.7"/></svg>
<svg style="position:absolute;left:258px;top:820px" width="16" height="16" viewBox="0 0 16 16"><rect x="0.5" y="0.5" width="13" height="8" fill="#72ade6" stroke="#3a5f92"/><path d="M1 1H13V3.2L1 5Z" fill="#a9d3f6"/><rect x="12" y="7" width="1" height="1" fill="#22c022"/><path d="M5 9H9L10 10.5H4Z" fill="#3a4e66"/><rect x="0.5" y="10.5" width="13" height="4" rx="1" fill="#edf0f4" stroke="#4a6689"/><rect x="2" y="12" width="2" height="1.3" fill="#e02020"/><rect x="9.5" y="12" width="2.5" height="1" fill="#333"/></svg>
<svg style="position:absolute;left:418px;top:820px" width="16" height="16" viewBox="0 0 16 16"><rect x="0.5" y="0.5" width="13" height="8" fill="#72ade6" stroke="#3a5f92"/><path d="M1 1H13V3.2L1 5Z" fill="#a9d3f6"/><rect x="12" y="7" width="1" height="1" fill="#22c022"/><path d="M5 9H9L10 10.5H4Z" fill="#3a4e66"/><rect x="0.5" y="10.5" width="13" height="4" rx="1" fill="#edf0f4" stroke="#4a6689"/><rect x="2" y="12" width="2" height="1.3" fill="#e02020"/><rect x="9.5" y="12" width="2.5" height="1" fill="#333"/><circle cx="11.2" cy="11" r="4.3" fill="#3d86dc" stroke="#2a5aa0" stroke-width="0.5"/><path d="M7.6 9.2Q9.5 8.6 10.6 10Q9.8 12.2 8 12.6Q7 11 7.6 9.2Z" fill="#4fc040"/><path d="M10.2 13.2Q12.2 12.6 13.2 14.6Q11.5 15.6 9.8 15Z" fill="#3aa83a"/><path d="M12.5 7.2Q14.6 8 15.3 10.2Q13.8 10.6 12.6 9.4Z" fill="#4fc040"/><circle cx="12" cy="9.6" r="1.3" fill="#9cc8f4" fill-opacity="0.7"/></svg>
<svg style="position:absolute;left:258px;top:841px" width="16" height="16" viewBox="0 0 16 16"><rect x="0.5" y="0.5" width="13" height="8" fill="#72ade6" stroke="#3a5f92"/><path d="M1 1H13V3.2L1 5Z" fill="#a9d3f6"/><rect x="12" y="7" width="1" height="1" fill="#22c022"/><path d="M5 9H9L10 10.5H4Z" fill="#3a4e66"/><rect x="0.5" y="10.5" width="13" height="4" rx="1" fill="#edf0f4" stroke="#4a6689"/><rect x="2" y="12" width="2" height="1.3" fill="#e02020"/><rect x="9.5" y="12" width="2.5" height="1" fill="#333"/></svg>
<svg style="position:absolute;left:418px;top:841px" width="16" height="16" viewBox="0 0 16 16"><rect x="0.5" y="0.5" width="13" height="8" fill="#72ade6" stroke="#3a5f92"/><path d="M1 1H13V3.2L1 5Z" fill="#a9d3f6"/><rect x="12" y="7" width="1" height="1" fill="#22c022"/><path d="M5 9H9L10 10.5H4Z" fill="#3a4e66"/><rect x="0.5" y="10.5" width="13" height="4" rx="1" fill="#edf0f4" stroke="#4a6689"/><rect x="2" y="12" width="2" height="1.3" fill="#e02020"/><rect x="9.5" y="12" width="2.5" height="1" fill="#333"/><circle cx="11.2" cy="11" r="4.3" fill="#3d86dc" stroke="#2a5aa0" stroke-width="0.5"/><path d="M7.6 9.2Q9.5 8.6 10.6 10Q9.8 12.2 8 12.6Q7 11 7.6 9.2Z" fill="#4fc040"/><path d="M10.2 13.2Q12.2 12.6 13.2 14.6Q11.5 15.6 9.8 15Z" fill="#3aa83a"/><path d="M12.5 7.2Q14.6 8 15.3 10.2Q13.8 10.6 12.6 9.4Z" fill="#4fc040"/><circle cx="12" cy="9.6" r="1.3" fill="#9cc8f4" fill-opacity="0.7"/></svg>
<svg style="position:absolute;left:258px;top:862px" width="16" height="16" viewBox="0 0 16 16"><rect x="0.5" y="0.5" width="13" height="8" fill="#72ade6" stroke="#3a5f92"/><path d="M1 1H13V3.2L1 5Z" fill="#a9d3f6"/><rect x="12" y="7" width="1" height="1" fill="#22c022"/><path d="M5 9H9L10 10.5H4Z" fill="#3a4e66"/><rect x="0.5" y="10.5" width="13" height="4" rx="1" fill="#edf0f4" stroke="#4a6689"/><rect x="2" y="12" width="2" height="1.3" fill="#e02020"/><rect x="9.5" y="12" width="2.5" height="1" fill="#333"/></svg>
<svg style="position:absolute;left:418px;top:862px" width="16" height="16" viewBox="0 0 16 16"><rect x="0.5" y="0.5" width="13" height="8" fill="#72ade6" stroke="#3a5f92"/><path d="M1 1H13V3.2L1 5Z" fill="#a9d3f6"/><rect x="12" y="7" width="1" height="1" fill="#22c022"/><path d="M5 9H9L10 10.5H4Z" fill="#3a4e66"/><rect x="0.5" y="10.5" width="13" height="4" rx="1" fill="#edf0f4" stroke="#4a6689"/><rect x="2" y="12" width="2" height="1.3" fill="#e02020"/><rect x="9.5" y="12" width="2.5" height="1" fill="#333"/><circle cx="11.2" cy="11" r="4.3" fill="#3d86dc" stroke="#2a5aa0" stroke-width="0.5"/><path d="M7.6 9.2Q9.5 8.6 10.6 10Q9.8 12.2 8 12.6Q7 11 7.6 9.2Z" fill="#4fc040"/><path d="M10.2 13.2Q12.2 12.6 13.2 14.6Q11.5 15.6 9.8 15Z" fill="#3aa83a"/><path d="M12.5 7.2Q14.6 8 15.3 10.2Q13.8 10.6 12.6 9.4Z" fill="#4fc040"/><circle cx="12" cy="9.6" r="1.3" fill="#9cc8f4" fill-opacity="0.7"/></svg>
<svg style="position:absolute;left:258px;top:883px" width="16" height="16" viewBox="0 0 16 16"><rect x="0.5" y="0.5" width="13" height="8" fill="#72ade6" stroke="#3a5f92"/><path d="M1 1H13V3.2L1 5Z" fill="#a9d3f6"/><rect x="12" y="7" width="1" height="1" fill="#22c022"/><path d="M5 9H9L10 10.5H4Z" fill="#3a4e66"/><rect x="0.5" y="10.5" width="13" height="4" rx="1" fill="#edf0f4" stroke="#4a6689"/><rect x="2" y="12" width="2" height="1.3" fill="#e02020"/><rect x="9.5" y="12" width="2.5" height="1" fill="#333"/></svg>
<svg style="position:absolute;left:418px;top:883px" width="16" height="16" viewBox="0 0 16 16"><rect x="0.5" y="0.5" width="13" height="8" fill="#72ade6" stroke="#3a5f92"/><path d="M1 1H13V3.2L1 5Z" fill="#a9d3f6"/><rect x="12" y="7" width="1" height="1" fill="#22c022"/><path d="M5 9H9L10 10.5H4Z" fill="#3a4e66"/><rect x="0.5" y="10.5" width="13" height="4" rx="1" fill="#edf0f4" stroke="#4a6689"/><rect x="2" y="12" width="2" height="1.3" fill="#e02020"/><rect x="9.5" y="12" width="2.5" height="1" fill="#333"/><circle cx="11.2" cy="11" r="4.3" fill="#3d86dc" stroke="#2a5aa0" stroke-width="0.5"/><path d="M7.6 9.2Q9.5 8.6 10.6 10Q9.8 12.2 8 12.6Q7 11 7.6 9.2Z" fill="#4fc040"/><path d="M10.2 13.2Q12.2 12.6 13.2 14.6Q11.5 15.6 9.8 15Z" fill="#3aa83a"/><path d="M12.5 7.2Q14.6 8 15.3 10.2Q13.8 10.6 12.6 9.4Z" fill="#4fc040"/><circle cx="12" cy="9.6" r="1.3" fill="#9cc8f4" fill-opacity="0.7"/></svg>
<svg style="position:absolute;left:258px;top:904px" width="16" height="16" viewBox="0 0 16 16"><rect x="0.5" y="0.5" width="13" height="8" fill="#72ade6" stroke="#3a5f92"/><path d="M1 1H13V3.2L1 5Z" fill="#a9d3f6"/><rect x="12" y="7" width="1" height="1" fill="#22c022"/><path d="M5 9H9L10 10.5H4Z" fill="#3a4e66"/><rect x="0.5" y="10.5" width="13" height="4" rx="1" fill="#edf0f4" stroke="#4a6689"/><rect x="2" y="12" width="2" height="1.3" fill="#e02020"/><rect x="9.5" y="12" width="2.5" height="1" fill="#333"/></svg>
<svg style="position:absolute;left:418px;top:904px" width="16" height="16" viewBox="0 0 16 16"><rect x="0.5" y="0.5" width="13" height="8" fill="#72ade6" stroke="#3a5f92"/><path d="M1 1H13V3.2L1 5Z" fill="#a9d3f6"/><rect x="12" y="7" width="1" height="1" fill="#22c022"/><path d="M5 9H9L10 10.5H4Z" fill="#3a4e66"/><rect x="0.5" y="10.5" width="13" height="4" rx="1" fill="#edf0f4" stroke="#4a6689"/><rect x="2" y="12" width="2" height="1.3" fill="#e02020"/><rect x="9.5" y="12" width="2.5" height="1" fill="#333"/><circle cx="11.2" cy="11" r="4.3" fill="#3d86dc" stroke="#2a5aa0" stroke-width="0.5"/><path d="M7.6 9.2Q9.5 8.6 10.6 10Q9.8 12.2 8 12.6Q7 11 7.6 9.2Z" fill="#4fc040"/><path d="M10.2 13.2Q12.2 12.6 13.2 14.6Q11.5 15.6 9.8 15Z" fill="#3aa83a"/><path d="M12.5 7.2Q14.6 8 15.3 10.2Q13.8 10.6 12.6 9.4Z" fill="#4fc040"/><circle cx="12" cy="9.6" r="1.3" fill="#9cc8f4" fill-opacity="0.7"/></svg>
<svg style="position:absolute;left:258px;top:925px" width="16" height="16" viewBox="0 0 16 16"><rect x="0.5" y="0.5" width="13" height="8" fill="#72ade6" stroke="#3a5f92"/><path d="M1 1H13V3.2L1 5Z" fill="#a9d3f6"/><rect x="12" y="7" width="1" height="1" fill="#22c022"/><path d="M5 9H9L10 10.5H4Z" fill="#3a4e66"/><rect x="0.5" y="10.5" width="13" height="4" rx="1" fill="#edf0f4" stroke="#4a6689"/><rect x="2" y="12" width="2" height="1.3" fill="#e02020"/><rect x="9.5" y="12" width="2.5" height="1" fill="#333"/></svg>
<svg style="position:absolute;left:418px;top:925px" width="16" height="16" viewBox="0 0 16 16"><rect x="0.5" y="0.5" width="13" height="8" fill="#72ade6" stroke="#3a5f92"/><path d="M1 1H13V3.2L1 5Z" fill="#a9d3f6"/><rect x="12" y="7" width="1" height="1" fill="#22c022"/><path d="M5 9H9L10 10.5H4Z" fill="#3a4e66"/><rect x="0.5" y="10.5" width="13" height="4" rx="1" fill="#edf0f4" stroke="#4a6689"/><rect x="2" y="12" width="2" height="1.3" fill="#e02020"/><rect x="9.5" y="12" width="2.5" height="1" fill="#333"/><circle cx="11.2" cy="11" r="4.3" fill="#3d86dc" stroke="#2a5aa0" stroke-width="0.5"/><path d="M7.6 9.2Q9.5 8.6 10.6 10Q9.8 12.2 8 12.6Q7 11 7.6 9.2Z" fill="#4fc040"/><path d="M10.2 13.2Q12.2 12.6 13.2 14.6Q11.5 15.6 9.8 15Z" fill="#3aa83a"/><path d="M12.5 7.2Q14.6 8 15.3 10.2Q13.8 10.6 12.6 9.4Z" fill="#4fc040"/><circle cx="12" cy="9.6" r="1.3" fill="#9cc8f4" fill-opacity="0.7"/></svg>
<svg style="position:absolute;left:258px;top:946px" width="16" height="16" viewBox="0 0 16 16"><rect x="0.5" y="0.5" width="13" height="8" fill="#72ade6" stroke="#3a5f92"/><path d="M1 1H13V3.2L1 5Z" fill="#a9d3f6"/><rect x="12" y="7" width="1" height="1" fill="#22c022"/><path d="M5 9H9L10 10.5H4Z" fill="#3a4e66"/><rect x="0.5" y="10.5" width="13" height="4" rx="1" fill="#edf0f4" stroke="#4a6689"/><rect x="2" y="12" width="2" height="1.3" fill="#e02020"/><rect x="9.5" y="12" width="2.5" height="1" fill="#333"/></svg>
<svg style="position:absolute;left:418px;top:946px" width="16" height="16" viewBox="0 0 16 16"><rect x="0.5" y="0.5" width="13" height="8" fill="#72ade6" stroke="#3a5f92"/><path d="M1 1H13V3.2L1 5Z" fill="#a9d3f6"/><rect x="12" y="7" width="1" height="1" fill="#22c022"/><path d="M5 9H9L10 10.5H4Z" fill="#3a4e66"/><rect x="0.5" y="10.5" width="13" height="4" rx="1" fill="#edf0f4" stroke="#4a6689"/><rect x="2" y="12" width="2" height="1.3" fill="#e02020"/><rect x="9.5" y="12" width="2.5" height="1" fill="#333"/><circle cx="11.2" cy="11" r="4.3" fill="#3d86dc" stroke="#2a5aa0" stroke-width="0.5"/><path d="M7.6 9.2Q9.5 8.6 10.6 10Q9.8 12.2 8 12.6Q7 11 7.6 9.2Z" fill="#4fc040"/><path d="M10.2 13.2Q12.2 12.6 13.2 14.6Q11.5 15.6 9.8 15Z" fill="#3aa83a"/><path d="M12.5 7.2Q14.6 8 15.3 10.2Q13.8 10.6 12.6 9.4Z" fill="#4fc040"/><circle cx="12" cy="9.6" r="1.3" fill="#9cc8f4" fill-opacity="0.7"/></svg>
<svg style="position:absolute;left:258px;top:967px" width="16" height="16" viewBox="0 0 16 16"><rect x="0.5" y="0.5" width="13" height="8" fill="#72ade6" stroke="#3a5f92"/><path d="M1 1H13V3.2L1 5Z" fill="#a9d3f6"/><rect x="12" y="7" width="1" height="1" fill="#22c022"/><path d="M5 9H9L10 10.5H4Z" fill="#3a4e66"/><rect x="0.5" y="10.5" width="13" height="4" rx="1" fill="#edf0f4" stroke="#4a6689"/><rect x="2" y="12" width="2" height="1.3" fill="#e02020"/><rect x="9.5" y="12" width="2.5" height="1" fill="#333"/></svg>
<svg style="position:absolute;left:418px;top:967px" width="16" height="16" viewBox="0 0 16 16"><rect x="0.5" y="0.5" width="13" height="8" fill="#72ade6" stroke="#3a5f92"/><path d="M1 1H13V3.2L1 5Z" fill="#a9d3f6"/><rect x="12" y="7" width="1" height="1" fill="#22c022"/><path d="M5 9H9L10 10.5H4Z" fill="#3a4e66"/><rect x="0.5" y="10.5" width="13" height="4" rx="1" fill="#edf0f4" stroke="#4a6689"/><rect x="2" y="12" width="2" height="1.3" fill="#e02020"/><rect x="9.5" y="12" width="2.5" height="1" fill="#333"/><circle cx="11.2" cy="11" r="4.3" fill="#3d86dc" stroke="#2a5aa0" stroke-width="0.5"/><path d="M7.6 9.2Q9.5 8.6 10.6 10Q9.8 12.2 8 12.6Q7 11 7.6 9.2Z" fill="#4fc040"/><path d="M10.2 13.2Q12.2 12.6 13.2 14.6Q11.5 15.6 9.8 15Z" fill="#3aa83a"/><path d="M12.5 7.2Q14.6 8 15.3 10.2Q13.8 10.6 12.6 9.4Z" fill="#4fc040"/><circle cx="12" cy="9.6" r="1.3" fill="#9cc8f4" fill-opacity="0.7"/></svg>
<svg style="position:absolute;left:7px;top:14px" width="39" height="39" viewBox="0 0 39 39"><defs><linearGradient id="g1" x1="0" y1="0" x2="0" y2="1"><stop offset="0" stop-color="#b4dcf4"/><stop offset="0.35" stop-color="#7ab4e0"/><stop offset="0.62" stop-color="#2f68a8"/><stop offset="0.85" stop-color="#2f6cb0"/><stop offset="1" stop-color="#5a9ce0"/></linearGradient></defs><circle cx="19.4" cy="19.2" r="18.3" fill="#f4f6f9" stroke="#707c8c" stroke-width="0.9"/><circle cx="19.4" cy="19.2" r="16.4" fill="url(#g1)"/><path d="M5 19.8 L8.3 17.6 Q13.5 22 18.8 23.8 Q23 24.8 27.2 21.6 Q24.5 26.6 18.5 26.6 Q12 26.2 5 19.8 Z" fill="#fff"/><path d="M10.5 18 Q16.5 11.2 23.5 11 Q30.5 11.3 34.6 21.4 L31.4 23 Q28 15.2 23 14.4 Q16.5 13.8 10.5 18 Z" fill="#fff"/><path d="M13.6 18.6 L16.4 16.9 Q20.2 20.6 25.4 20.4 Q21 23.2 13.6 18.6Z" fill="#fff"/><path d="M18.6 16.4 L20.4 15.2 Q22.8 17.4 26 17.3 Q22.6 19.2 18.6 16.4Z" fill="#fff"/></svg>
<svg style="position:absolute;left:40px;top:4px" width="130" height="28" viewBox="0 0 130 28"><path d="M6 2.5 H114 A11.5 11.5 0 0 1 114 25.5 H16.5 C16 14 13 6 6 2.5 Z" fill="#8593a6" stroke="#5b6a7d" stroke-width="1"/><path d="M9 3.5 H114 A10.5 10.5 0 0 1 124.5 13" fill="none" stroke="#9aa7b8" stroke-width="1"/></svg>
<svg style="position:absolute;left:63px;top:11px" width="11" height="14" viewBox="0 0 11 14"><defs><linearGradient id="g2" x1="0" y1="0" x2="1" y2="1"><stop offset="0" stop-color="#ffffff"/><stop offset="1" stop-color="#c9d3e3"/></linearGradient></defs><path d="M0.5 0.5H8L10.5 3V13.5H0.5Z" fill="url(#g2)" stroke="#3b5272"/></svg>
<svg style="position:absolute;left:88px;top:10px" width="15" height="16" viewBox="0 0 15 16"><rect x="0.5" y="1.5" width="12" height="13.5" rx="1" fill="#d98a2b" stroke="#9a5a16"/><rect x="2.5" y="3.5" width="8" height="10" fill="#f1f3f6"/><rect x="4" y="0.5" width="5" height="2.5" fill="#9fb5a5"/><circle cx="11" cy="12" r="3.6" fill="#e7edf3" stroke="#2c78b5" stroke-width="1.3"/></svg>
<svg style="position:absolute;left:111px;top:11px" width="17" height="14" viewBox="0 0 17 14"><defs><linearGradient id="g3" x1="0" y1="0" x2="1" y2="1"><stop offset="0" stop-color="#fff1a8"/><stop offset="1" stop-color="#e0a72a"/></linearGradient></defs><path d="M0.5 3.5H5L6.5 5H13.5V13.5H0.5Z" fill="url(#g3)" stroke="#7d6a3a" stroke-width="0.8"/><path d="M12 4L15 1M13 1H15V3" stroke="#28466e" stroke-width="1" fill="none"/></svg>
<svg style="position:absolute;left:137px;top:11px" width="14" height="14" viewBox="0 0 14 14"><rect x="0.5" y="0.5" width="13" height="13" fill="#5656c8" stroke="#33338a"/><rect x="3" y="1" width="8" height="6" fill="#f4f6ff"/><rect x="4" y="9" width="6" height="4" fill="#1e1e3a"/><rect x="7.5" y="10" width="2" height="2.5" fill="#eee"/></svg>
<svg style="position:absolute;left:26px;top:74px" width="30" height="23" viewBox="0 0 30 23"><path d="M1.5 1.5H27.5V6.5H29.5V16.5H27.5V19.5H1.5Z" fill="#3cb53c" stroke="#137a13"/><rect x="2" y="2" width="16" height="17" fill="#5ccf4a"/><rect x="14" y="19.5" width="9" height="3" fill="#e7c73a" stroke="#7a6a10" stroke-width="0.6"/><rect x="4" y="4.0" width="2" height="2" fill="#e51b1b"/><rect x="4" y="7.2" width="2" height="2" fill="#e51b1b"/><rect x="4" y="10.4" width="2" height="2" fill="#e51b1b"/><rect x="7" y="3.5" width="8" height="2.2" fill="#f0e68a"/><rect x="9.5" y="3.5" width="2" height="2.2" fill="#6b4fb5"/><rect x="7" y="6.7" width="8" height="2.2" fill="#f0e68a"/><rect x="9.5" y="6.7" width="2" height="2.2" fill="#6b4fb5"/><rect x="7" y="9.9" width="8" height="2.2" fill="#f0e68a"/><rect x="9.5" y="9.9" width="2" height="2.2" fill="#6b4fb5"/><rect x="7" y="13.100000000000001" width="8" height="2.2" fill="#f0e68a"/><rect x="9.5" y="13.100000000000001" width="2" height="2.2" fill="#6b4fb5"/><rect x="19" y="2" width="1" height="17" fill="#c9e0f0"/><rect x="21" y="3" width="5" height="14" fill="#2e9a2e"/><path d="M22 4H25M23.5 4V16M22 9H25M22 13H25" stroke="#102a10" stroke-width="0.8"/></svg>
<svg style="position:absolute;left:95px;top:71px" width="20" height="26" viewBox="0 0 20 26"><path d="M0.5 0.5 L18.5 12.5 L0.5 24.5Z" fill="#bcc9db" stroke="#9aabc4"/><path d="M1.5 12.5 L18 12.5 L1.5 24Z" fill="#adbbd0"/></svg>
<svg style="position:absolute;left:138px;top:72px" width="24" height="24" viewBox="0 0 24 24"><defs><linearGradient id="g4" x1="0" y1="0" x2="0" y2="1"><stop offset="0" stop-color="#f59a9a"/><stop offset="0.45" stop-color="#e04848"/><stop offset="0.5" stop-color="#c41a1a"/><stop offset="1" stop-color="#e63b3b"/></linearGradient></defs><rect x="0.5" y="0.5" width="23" height="23" rx="3" fill="url(#g4)" stroke="#9c1010"/><rect x="1.5" y="1.5" width="21" height="21" rx="2" fill="none" stroke="#f7b7b7" stroke-opacity="0.7"/></svg>
<svg style="position:absolute;left:192px;top:71px" width="32" height="26" viewBox="0 0 32 26"><defs><linearGradient id="g5" x1="0" y1="0" x2="1" y2="0"><stop offset="0" stop-color="#9db2d6"/><stop offset="1" stop-color="#7f98c6"/></linearGradient></defs><rect x="0.5" y="0.5" width="30" height="24" fill="#f3f5fa" stroke="#4a5f83"/><rect x="1" y="1" width="29" height="4" fill="url(#g5)"/><rect x="1" y="5" width="29" height="1" fill="#4a64a0"/><rect x="2.5" y="7.5" width="8" height="6" fill="#8fbdf0" stroke="#3f6aa6" stroke-width="0.8"/><rect x="5.5" y="14.0" width="2" height="1.2" fill="#222"/><rect x="2.0" y="15.5" width="9" height="2.5" rx="1" fill="#e6eaf0" stroke="#455a78" stroke-width="0.7"/><rect x="3.3" y="16.3" width="1.5" height="1" fill="#22b022"/><rect x="9.5" y="13" width="8" height="6" fill="#8fbdf0" stroke="#3f6aa6" stroke-width="0.8"/><rect x="12.5" y="19.5" width="2" height="1.2" fill="#222"/><rect x="9.0" y="21" width="9" height="2.5" rx="1" fill="#e6eaf0" stroke="#455a78" stroke-width="0.7"/><rect x="10.3" y="21.8" width="1.5" height="1" fill="#22b022"/><rect x="19" y="8" width="6" height="1" fill="#7a8eb0"/><rect x="19" y="11" width="9" height="1" fill="#7a8eb0"/><rect x="19" y="14" width="9" height="1" fill="#7a8eb0"/><rect x="19" y="17" width="9" height="1" fill="#7a8eb0"/><rect x="19" y="20" width="9" height="1" fill="#7a8eb0"/></svg>
<svg style="position:absolute;left:243px;top:70px" width="31" height="29" viewBox="0 0 31 29"><path d="M11.5 14L18 6M11.5 14L17 21" stroke="#5b6b84" stroke-width="1.2" fill="none"/><rect x="0.5" y="8.5" width="11" height="12" rx="1" fill="#fbfcfe" stroke="#5a6f90" stroke-width="0.9"/><rect x="0.5" y="8.5" width="11" height="3.5" rx="1" fill="#4a82e2"/><rect x="2.5" y="14" width="7" height="1" fill="#3e4d66"/><rect x="2.5" y="16.3" width="7" height="0.9" fill="#8da0c0"/><rect x="18.5" y="0.5" width="11" height="12" rx="1" fill="#fbfcfe" stroke="#5a6f90" stroke-width="0.9"/><rect x="18.5" y="0.5" width="11" height="3.5" rx="1" fill="#4a82e2"/><rect x="20.5" y="6" width="7" height="1" fill="#3e4d66"/><rect x="20.5" y="8.3" width="7" height="0.9" fill="#8da0c0"/><rect x="16.5" y="15.5" width="11" height="12" rx="1" fill="#fbfcfe" stroke="#5a6f90" stroke-width="0.9"/><rect x="16.5" y="15.5" width="11" height="3.5" rx="1" fill="#4a82e2"/><rect x="18.5" y="21" width="7" height="1" fill="#3e4d66"/><rect x="18.5" y="23.3" width="7" height="0.9" fill="#8da0c0"/></svg>
<svg style="position:absolute;left:293px;top:70px" width="31" height="31" viewBox="0 0 31 31"><defs><linearGradient id="g6" x1="0" y1="0" x2="1" y2="0"><stop offset="0" stop-color="#f7d77a"/><stop offset="1" stop-color="#d9a43a"/></linearGradient></defs><rect x="5.5" y="0.5" width="23" height="15" fill="#c5ccd8" stroke="#7d8899" stroke-width="0.8"/><rect x="3.5" y="2.5" width="23" height="15" fill="#d3d9e3" stroke="#7d8899" stroke-width="0.8"/><rect x="1.5" y="4.5" width="22" height="15" fill="#fff" stroke="#7d8899" stroke-width="0.8"/><circle cx="7" cy="9" r="3" fill="#777"/><path d="M3 14Q7 11 11 14V15H3Z" fill="#d32a1a"/><rect x="12" y="7.5" width="7" height="0.9" fill="#4a7fd8"/><rect x="12" y="9.7" width="7" height="0.9" fill="#4a7fd8"/><path d="M0.5 16H22L25 18V24.5H0.5Z" fill="#dcdcdc" stroke="#8a8f98" stroke-width="0.8"/><path d="M22 17H28.5V21L25 24.5H22Z" fill="#9aa3b0"/><path d="M8 30 L9 26 L27 8 L30 11 L12 29Z" fill="url(#g6)" stroke="#8b6a2a" stroke-width="0.6"/><path d="M25.2 9.8L28 12.6" stroke="#1f7a2a" stroke-width="1.5"/><path d="M27 8L28 7L31 10L30 11Z" fill="#d84a4a"/><path d="M8 30L9 26L12 29Z" fill="#f3d3b0"/></svg>
<svg style="position:absolute;left:340px;top:69px" width="31" height="31" viewBox="0 0 31 31"><defs><linearGradient id="g7" x1="0" y1="0" x2="0" y2="1"><stop offset="0" stop-color="#fff46a"/><stop offset="0.55" stop-color="#ffe000"/><stop offset="0.6" stop-color="#f8d000"/><stop offset="1" stop-color="#ffe66a"/></linearGradient></defs><path d="M15 1 Q16 0.5 17 2 L29.6 27.4 Q30 29.5 28 29.5 H2 Q0 29.5 0.5 27.4 L13.3 2 Q14 0.5 15 1Z" fill="url(#g7)" stroke="#c49a5a" stroke-width="1"/><path d="M13 8.5 Q15 6 17.2 8.5 L16.2 21 H13.9Z" fill="#3d3d3d"/><circle cx="15.05" cy="25" r="1.8" fill="#3d3d3d"/></svg>
<svg style="position:absolute;left:402px;top:69px" width="30" height="31" viewBox="0 0 30 31"><path d="M13 8L5 19M13 8L23 24M24 10L13 22M8 18L22 25" stroke="#606a74" stroke-width="1.1" fill="none"/><path d="M9 4 L13 0 L18 3.5 L18 6.5 L14 10 L9 7Z" fill="#c9a21a"/><path d="M9 4 L13 0 L18 3.5 L14 7Z" fill="#ffe36a"/><path d="M20 9 L24 5 L29 8.5 L29 11.5 L25 15 L20 12Z" fill="#d23a1a"/><path d="M20 9 L24 5 L29 8.5 L25 12Z" fill="#ff8a6a"/><path d="M0 18 L4 14 L9 17.5 L9 20.5 L5 24 L0 21Z" fill="#d23a1a"/><path d="M0 18 L4 14 L9 17.5 L5 21Z" fill="#ff8a6a"/><path d="M9 19 L13 15 L18 18.5 L18 21.5 L14 25 L9 22Z" fill="#2f962a"/><path d="M9 19 L13 15 L18 18.5 L14 22Z" fill="#8fd86a"/><path d="M19 23 L23 19 L28 22.5 L28 25.5 L24 29 L19 26Z" fill="#2a4ad0"/><path d="M19 23 L23 19 L28 22.5 L24 26Z" fill="#8aa8ff"/></svg>
<svg style="position:absolute;left:456px;top:69px" width="23" height="30" viewBox="0 0 23 30"><path d="M0.5 0.5H15L22.5 8V28.5H0.5Z" fill="#f7f8fb" stroke="#5b6f8e"/><path d="M15 0.5V8H22.5" fill="#d6e2f2" stroke="#5b6f8e"/><path d="M8.5 8H13.5V13H18.5V18H13.5V23H8.5V18H3.5V13H8.5Z" fill="#e64a3a" stroke="#c0302a" stroke-width="0.6"/></svg>
<svg style="position:absolute;left:500px;top:70px" width="32" height="29" viewBox="0 0 32 29"><path d="M0.5 2.5Q0.5 0.5 2.5 0.5H13L15 2.5H27.5Q28.5 2.5 28.5 4V23.5H0.5Z" fill="#f2f4f8" stroke="#7e8ea6"/><rect x="17" y="0.5" width="10" height="3" rx="1" fill="#8fb3e6"/><rect x="3" y="6" width="23" height="3" fill="#5c7aa8"/><rect x="4.5" y="6.5" width="26" height="21" rx="1.5" fill="#f5f6f8" fill-opacity="0.85" stroke="#2a9a2a" stroke-dasharray="1.2 1.2"/><circle cx="9" cy="17" r="4" fill="#f3c4c0"/><path d="M9 17V13A4 4 0 0 1 12.6 15.2Z" fill="#a8c4ee"/><rect x="15" y="14.0" width="11" height="0.8" fill="#b8c2d2"/><rect x="15" y="16.2" width="11" height="0.8" fill="#b8c2d2"/><rect x="15" y="18.4" width="11" height="0.8" fill="#b8c2d2"/><rect x="15" y="20.6" width="11" height="0.8" fill="#b8c2d2"/></svg>
<svg style="position:absolute;left:582px;top:68px" width="24" height="33" viewBox="0 0 24 33"><defs><linearGradient id="g8" x1="0" y1="0" x2="1" y2="0"><stop offset="0" stop-color="#e6eef8"/><stop offset="0.5" stop-color="#b8c8dc"/><stop offset="1" stop-color="#e8eef6"/></linearGradient><linearGradient id="g9" x1="0" y1="0" x2="0" y2="1"><stop offset="0" stop-color="#7ea7e0"/><stop offset="1" stop-color="#2a5aa8"/></linearGradient></defs><path d="M2.5 3 V28 Q2.5 31 11.5 31 Q20.5 31 20.5 28 V3" fill="url(#g8)" fill-opacity="0.55" stroke="#8d9fb8" stroke-width="1"/><path d="M3 19 Q11.5 22 20 19 V28 Q20 30.5 11.5 30.5 Q3 30.5 3 28Z" fill="url(#g9)"/><ellipse cx="11.5" cy="19.5" rx="8.5" ry="2" fill="#a8c6ef"/><ellipse cx="11.5" cy="3" rx="11" ry="2.5" fill="#f4f8fc" stroke="#9eb0c6" stroke-width="0.9"/><rect x="13" y="6" width="4" height="12" fill="#c6d0dc" fill-opacity="0.8"/><circle cx="11.5" cy="26.5" r="1.5" fill="#e8f2ff"/></svg>
<svg style="position:absolute;left:646px;top:71px" width="31" height="26" viewBox="0 0 31 26"><defs><linearGradient id="g10" x1="0" y1="0" x2="1" y2="0"><stop offset="0" stop-color="#f4f4f4"/><stop offset="0.45" stop-color="#c8c8c8"/><stop offset="0.55" stop-color="#9a9a9a"/><stop offset="1" stop-color="#d8d8d8"/></linearGradient></defs><path d="M0.5 0.5H30.5L19 13V24.5H12V13Z" fill="url(#g10)" stroke="#7a7a7a" stroke-width="0.9"/><path d="M1.5 1H29.5" stroke="#fafafa"/></svg>
<svg style="position:absolute;left:702px;top:68px" width="33" height="33" viewBox="0 0 33 33"><defs><linearGradient id="g11" x1="0" y1="0" x2="1" y2="0"><stop offset="0" stop-color="#e6eef8"/><stop offset="0.5" stop-color="#b8c8dc"/><stop offset="1" stop-color="#e8eef6"/></linearGradient><linearGradient id="g12" x1="0" y1="0" x2="0" y2="1"><stop offset="0" stop-color="#7ea7e0"/><stop offset="1" stop-color="#2a5aa8"/></linearGradient></defs><path d="M2.5 3 V28 Q2.5 31 11.5 31 Q20.5 31 20.5 28 V3" fill="url(#g11)" fill-opacity="0.55" stroke="#8d9fb8" stroke-width="1"/><path d="M3 19 Q11.5 22 20 19 V28 Q20 30.5 11.5 30.5 Q3 30.5 3 28Z" fill="url(#g12)"/><ellipse cx="11.5" cy="19.5" rx="8.5" ry="2" fill="#a8c6ef"/><ellipse cx="11.5" cy="3" rx="11" ry="2.5" fill="#f4f8fc" stroke="#9eb0c6" stroke-width="0.9"/><rect x="13" y="6" width="4" height="12" fill="#c6d0dc" fill-opacity="0.8"/><circle cx="11.5" cy="26.5" r="1.5" fill="#e8f2ff"/><g transform="translate(16,16.5) scale(1)"><rect x="0.5" y="0.5" width="14" height="14.5" fill="#7f6fcc" stroke="#5a4aa6"/><rect x="3" y="1" width="9" height="6" fill="#f6f6fa"/><rect x="4" y="2.5" width="7" height="0.7" fill="#b0b0c0"/><rect x="4" y="4.5" width="7" height="0.7" fill="#b0b0c0"/><rect x="4" y="9.5" width="7" height="5" fill="#e8e8ee"/><rect x="5" y="10.5" width="2.5" height="4" fill="#4a3a8a"/></g></svg>
<svg style="position:absolute;left:765px;top:69px" width="31" height="30" viewBox="0 0 31 30"><path d="M0.5 0.5H14.5L21.5 7.5V28.5H0.5Z" fill="#f6f7fa" stroke="#5b6f8e"/><path d="M14.5 0.5V7.5H21.5" fill="#d6e2f2" stroke="#5b6f8e"/><rect x="3" y="4" width="8" height="0.9" fill="#a8adb6"/><rect x="3" y="6" width="8" height="0.9" fill="#a8adb6"/><rect x="3" y="8" width="8" height="0.9" fill="#a8adb6"/><rect x="3" y="10" width="14" height="0.9" fill="#a8adb6"/><rect x="3" y="12" width="14" height="0.9" fill="#a8adb6"/><rect x="3" y="14" width="14" height="0.9" fill="#a8adb6"/><rect x="3" y="16" width="14" height="0.9" fill="#a8adb6"/><rect x="3" y="18" width="14" height="0.9" fill="#a8adb6"/><rect x="3" y="20" width="14" height="0.9" fill="#a8adb6"/><rect x="3" y="22" width="14" height="0.9" fill="#a8adb6"/><rect x="3" y="24" width="14" height="0.9" fill="#a8adb6"/><rect x="3" y="26" width="5" height="1.3" fill="#ff2a2a"/><path d="M8 27.5 L9.2 23.5 L26 7 L29 10 L12.2 26.5Z" fill="url(#g6)" stroke="#8b6a2a" stroke-width="0.6"/><path d="M24.2 8.8L27.2 11.8" stroke="#1f7a2a" stroke-width="1.5"/><path d="M26 7L27.3 5.8L30.3 8.8L29 10Z" fill="#d84a4a"/><path d="M8 27.5L9.2 23.5L12.2 26.5Z" fill="#f3d3b0"/></svg>
<svg style="position:absolute;left:826px;top:69px" width="31" height="32" viewBox="0 0 31 32"><path d="M0.5 0.5H17L22.5 6V29.5H0.5Z" fill="#f6f7fb" stroke="#56698a"/><path d="M17 0.5V6H22.5" fill="#d6e2f2" stroke="#56698a"/><rect x="3.5" y="7" width="12" height="1.1" fill="#2a50b8"/><rect x="3.5" y="10" width="15" height="1.1" fill="#2a50b8"/><rect x="3.5" y="13" width="15" height="1.1" fill="#2a50b8"/><rect x="3.5" y="16" width="15" height="1.1" fill="#2a50b8"/><rect x="3.5" y="19" width="15" height="1.1" fill="#2a50b8"/><rect x="3.5" y="22" width="15" height="1.1" fill="#2a50b8"/><rect x="3.5" y="25" width="15" height="1.1" fill="#2a50b8"/><g transform="translate(15,16) scale(1)"><rect x="0.5" y="0.5" width="14" height="14.5" fill="#7f6fcc" stroke="#5a4aa6"/><rect x="3" y="1" width="9" height="6" fill="#f6f6fa"/><rect x="4" y="2.5" width="7" height="0.7" fill="#b0b0c0"/><rect x="4" y="4.5" width="7" height="0.7" fill="#b0b0c0"/><rect x="4" y="9.5" width="7" height="5" fill="#e8e8ee"/><rect x="5" y="10.5" width="2.5" height="4" fill="#4a3a8a"/></g></svg>
<svg style="position:absolute;left:892px;top:69px" width="99" height="66" viewBox="0 0 99 66"><defs><linearGradient id="g13" x1="0" y1="0" x2="0" y2="1"><stop offset="0" stop-color="#e6e6e0"/><stop offset="1" stop-color="#f3f4ee"/></linearGradient></defs><path d="M0.5 44 Q0 22 14 11 Q29 0 49.5 0 Q70 0 85 11 Q99 22 98.5 44 Q98.5 52 94 54.5 Q84 59 62 61 Q55 62 49.5 65.5 Q44 62 37 61 Q15 59 5 54.5 Q0.5 52 0.5 44Z" fill="#7f98b6"/><path d="M3.5 44 Q3 23 16 13 Q30 3 49.5 3 Q69 3 83 13 Q96 23 95.5 44 Q95.5 51 90 53 Q80 55.5 60 55.5 Q57 60 49.5 60 Q42 60 39 55.5 Q19 55.5 9 53 Q3.5 51 3.5 44Z" fill="url(#g13)"/><path d="M10.50 50.50 A39 39 0 0 1 88.50 50.50" fill="none" stroke="#b6cdea" stroke-width="4.5"/><path d="M8.20 50.50 A41.3 41.3 0 0 1 24.07 17.96" fill="none" stroke="#34c22a" stroke-width="2.2"/><path d="M74.93 17.96 A41.3 41.3 0 0 1 90.80 50.50" fill="none" stroke="#ee2424" stroke-width="2.2"/><path d="M8.03 48.91L8.03 52.09L13.50 50.50Z" fill="#2a2a2a"/><path d="M10.55 36.17L9.57 39.20L15.26 39.38Z" fill="#2a2a2a"/><path d="M16.89 24.84L15.01 27.41L20.38 29.34Z" fill="#2a2a2a"/><path d="M26.41 16.01L23.84 17.89L28.34 21.38Z" fill="#2a2a2a"/><path d="M38.20 10.57L35.17 11.55L38.38 16.26Z" fill="#2a2a2a"/><path d="M51.09 9.03L47.91 9.03L49.50 14.50Z" fill="#2a2a2a"/><path d="M63.83 11.55L60.80 10.57L60.62 16.26Z" fill="#2a2a2a"/><path d="M75.16 17.89L72.59 16.01L70.66 21.38Z" fill="#2a2a2a"/><path d="M83.99 27.41L82.11 24.84L78.62 29.34Z" fill="#2a2a2a"/><path d="M89.43 39.20L88.45 36.17L83.74 39.38Z" fill="#2a2a2a"/><path d="M90.97 52.09L90.97 48.91L85.50 50.50Z" fill="#2a2a2a"/><text x="17.5" y="50.5" font-size="8" font-family="Liberation Sans" font-weight="bold" fill="#505050" text-anchor="middle">0</text><text x="23.5" y="35" font-size="8" font-family="Liberation Sans" font-weight="bold" fill="#505050" text-anchor="middle">20</text><text x="39" y="23.5" font-size="8" font-family="Liberation Sans" font-weight="bold" fill="#505050" text-anchor="middle">40</text><text x="58.5" y="23.5" font-size="8" font-family="Liberation Sans" font-weight="bold" fill="#505050" text-anchor="middle">60</text><text x="74.5" y="35" font-size="8" font-family="Liberation Sans" font-weight="bold" fill="#505050" text-anchor="middle">80</text><text x="79" y="50.5" font-size="8" font-family="Liberation Sans" font-weight="bold" fill="#505050" text-anchor="middle">100</text><text x="49.5" y="42" font-size="9.5" font-family="Liberation Sans" font-weight="bold" fill="#8ba6c8" text-anchor="middle">Utilization</text><defs><linearGradient id="g14" x1="0" y1="0" x2="0" y2="1"><stop offset="0" stop-color="#f8e6b0"/><stop offset="0.5" stop-color="#e0a83a"/><stop offset="1" stop-color="#b07a10"/></linearGradient></defs><rect x="17" y="49.5" width="32" height="3" rx="1.5" fill="url(#g14)"/><defs><radialGradient id="g15" cx="0.35" cy="0.3" r="0.75"><stop offset="0" stop-color="#b0d4f6"/><stop offset="0.5" stop-color="#4a84c6"/><stop offset="1" stop-color="#1f4f8a"/></radialGradient></defs><circle cx="49.5" cy="51" r="5.3" fill="url(#g15)"/></svg>
<svg style="position:absolute;left:1003px;top:69px" width="99" height="66" viewBox="0 0 99 66"><defs><linearGradient id="g16" x1="0" y1="0" x2="0" y2="1"><stop offset="0" stop-color="#e6e6e0"/><stop offset="1" stop-color="#f3f4ee"/></linearGradient></defs><path d="M0.5 44 Q0 22 14 11 Q29 0 49.5 0 Q70 0 85 11 Q99 22 98.5 44 Q98.5 52 94 54.5 Q84 59 62 61 Q55 62 49.5 65.5 Q44 62 37 61 Q15 59 5 54.5 Q0.5 52 0.5 44Z" fill="#7f98b6"/><path d="M3.5 44 Q3 23 16 13 Q30 3 49.5 3 Q69 3 83 13 Q96 23 95.5 44 Q95.5 51 90 53 Q80 55.5 60 55.5 Q57 60 49.5 60 Q42 60 39 55.5 Q19 55.5 9 53 Q3.5 51 3.5 44Z" fill="url(#g16)"/><path d="M10.50 50.50 A39 39 0 0 1 88.50 50.50" fill="none" stroke="#b6cdea" stroke-width="4.5"/><path d="M8.20 50.50 A41.3 41.3 0 0 1 24.07 17.96" fill="none" stroke="#34c22a" stroke-width="2.2"/><path d="M74.93 17.96 A41.3 41.3 0 0 1 90.80 50.50" fill="none" stroke="#ee2424" stroke-width="2.2"/><path d="M8.03 48.91L8.03 52.09L13.50 50.50Z" fill="#2a2a2a"/><path d="M10.55 36.17L9.57 39.20L15.26 39.38Z" fill="#2a2a2a"/><path d="M16.89 24.84L15.01 27.41L20.38 29.34Z" fill="#2a2a2a"/><path d="M26.41 16.01L23.84 17.89L28.34 21.38Z" fill="#2a2a2a"/><path d="M38.20 10.57L35.17 11.55L38.38 16.26Z" fill="#2a2a2a"/><path d="M51.09 9.03L47.91 9.03L49.50 14.50Z" fill="#2a2a2a"/><path d="M63.83 11.55L60.80 10.57L60.62 16.26Z" fill="#2a2a2a"/><path d="M75.16 17.89L72.59 16.01L70.66 21.38Z" fill="#2a2a2a"/><path d="M83.99 27.41L82.11 24.84L78.62 29.34Z" fill="#2a2a2a"/><path d="M89.43 39.20L88.45 36.17L83.74 39.38Z" fill="#2a2a2a"/><path d="M90.97 52.09L90.97 48.91L85.50 50.50Z" fill="#2a2a2a"/><path d="M9.12 47.32L12.12 47.56" stroke="#6a7078" stroke-width="0.8"/><path d="M9.50 44.16L12.46 44.63" stroke="#6a7078" stroke-width="0.8"/><path d="M10.12 41.05L13.04 41.75" stroke="#6a7078" stroke-width="0.8"/><path d="M12.08 35.00L14.85 36.15" stroke="#6a7078" stroke-width="0.8"/><path d="M13.41 32.11L16.09 33.48" stroke="#6a7078" stroke-width="0.8"/><path d="M14.97 29.34L17.53 30.91" stroke="#6a7078" stroke-width="0.8"/><path d="M18.70 24.20L20.98 26.15" stroke="#6a7078" stroke-width="0.8"/><path d="M20.86 21.86L22.98 23.98" stroke="#6a7078" stroke-width="0.8"/><path d="M23.20 19.70L25.15 21.98" stroke="#6a7078" stroke-width="0.8"/><path d="M28.34 15.97L29.91 18.53" stroke="#6a7078" stroke-width="0.8"/><path d="M31.11 14.41L32.48 17.09" stroke="#6a7078" stroke-width="0.8"/><path d="M34.00 13.08L35.15 15.85" stroke="#6a7078" stroke-width="0.8"/><path d="M40.05 11.12L40.75 14.04" stroke="#6a7078" stroke-width="0.8"/><path d="M43.16 10.50L43.63 13.46" stroke="#6a7078" stroke-width="0.8"/><path d="M46.32 10.12L46.56 13.12" stroke="#6a7078" stroke-width="0.8"/><path d="M52.68 10.12L52.44 13.12" stroke="#6a7078" stroke-width="0.8"/><path d="M55.84 10.50L55.37 13.46" stroke="#6a7078" stroke-width="0.8"/><path d="M58.95 11.12L58.25 14.04" stroke="#6a7078" stroke-width="0.8"/><path d="M65.00 13.08L63.85 15.85" stroke="#6a7078" stroke-width="0.8"/><path d="M67.89 14.41L66.52 17.09" stroke="#6a7078" stroke-width="0.8"/><path d="M70.66 15.97L69.09 18.53" stroke="#6a7078" stroke-width="0.8"/><path d="M75.80 19.70L73.85 21.98" stroke="#6a7078" stroke-width="0.8"/><path d="M78.14 21.86L76.02 23.98" stroke="#6a7078" stroke-width="0.8"/><path d="M80.30 24.20L78.02 26.15" stroke="#6a7078" stroke-width="0.8"/><path d="M84.03 29.34L81.47 30.91" stroke="#6a7078" stroke-width="0.8"/><path d="M85.59 32.11L82.91 33.48" stroke="#6a7078" stroke-width="0.8"/><path d="M86.92 35.00L84.15 36.15" stroke="#6a7078" stroke-width="0.8"/><path d="M88.88 41.05L85.96 41.75" stroke="#6a7078" stroke-width="0.8"/><path d="M89.50 44.16L86.54 44.63" stroke="#6a7078" stroke-width="0.8"/><path d="M89.88 47.32L86.88 47.56" stroke="#6a7078" stroke-width="0.8"/><text x="17.5" y="50.5" font-size="8" font-family="Liberation Sans" font-weight="bold" fill="#505050" text-anchor="middle">0</text><text x="30.5" y="31.7" font-size="8" font-family="Liberation Sans" font-weight="bold" fill="#505050" text-anchor="middle">500</text><text x="49" y="21.8" font-size="8" font-family="Liberation Sans" font-weight="bold" fill="#505050" text-anchor="middle">1K</text><text x="67.8" y="31.7" font-size="8" font-family="Liberation Sans" font-weight="bold" fill="#505050" text-anchor="middle">500K</text><text x="79.6" y="50.6" font-size="8" font-family="Liberation Sans" font-weight="bold" fill="#505050" text-anchor="middle">1M</text><text x="49.5" y="42" font-size="9.5" font-family="Liberation Sans" font-weight="bold" fill="#8ba6c8" text-anchor="middle">Packet/s</text><defs><linearGradient id="g17" x1="0" y1="0" x2="0" y2="1"><stop offset="0" stop-color="#f8e6b0"/><stop offset="0.5" stop-color="#e0a83a"/><stop offset="1" stop-color="#b07a10"/></linearGradient></defs><rect x="17" y="49.5" width="32" height="3" rx="1.5" fill="url(#g17)"/><defs><radialGradient id="g18" cx="0.35" cy="0.3" r="0.75"><stop offset="0" stop-color="#b0d4f6"/><stop offset="0.5" stop-color="#4a84c6"/><stop offset="1" stop-color="#1f4f8a"/></radialGradient></defs><circle cx="49.5" cy="51" r="5.3" fill="url(#g18)"/></svg>
<svg style="position:absolute;left:1113px;top:70px" width="412" height="65" viewBox="0 0 412 65" shape-rendering="crispEdges"><rect x="0" y="0" width="412" height="65" fill="#000"/><rect x="12" y="0" width="1" height="65" fill="#0c8a3c"/><rect x="24" y="0" width="1" height="65" fill="#0c8a3c"/><rect x="35" y="0" width="1" height="65" fill="#0c8a3c"/><rect x="47" y="0" width="1" height="65" fill="#0c8a3c"/><rect x="59" y="0" width="1" height="65" fill="#0c8a3c"/><rect x="71" y="0" width="1" height="65" fill="#0c8a3c"/><rect x="82" y="0" width="1" height="65" fill="#0c8a3c"/><rect x="94" y="0" width="1" height="65" fill="#0c8a3c"/><rect x="106" y="0" width="1" height="65" fill="#0c8a3c"/><rect x="118" y="0" width="1" height="65" fill="#0c8a3c"/><rect x="129" y="0" width="1" height="65" fill="#0c8a3c"/><rect x="141" y="0" width="1" height="65" fill="#0c8a3c"/><rect x="153" y="0" width="1" height="65" fill="#0c8a3c"/><rect x="165" y="0" width="1" height="65" fill="#0c8a3c"/><rect x="176" y="0" width="1" height="65" fill="#0c8a3c"/><rect x="188" y="0" width="1" height="65" fill="#0c8a3c"/><rect x="200" y="0" width="1" height="65" fill="#0c8a3c"/><rect x="212" y="0" width="1" height="65" fill="#0c8a3c"/><rect x="223" y="0" width="1" height="65" fill="#0c8a3c"/><rect x="235" y="0" width="1" height="65" fill="#0c8a3c"/><rect x="247" y="0" width="1" height="65" fill="#0c8a3c"/><rect x="259" y="0" width="1" height="65" fill="#0c8a3c"/><rect x="270" y="0" width="1" height="65" fill="#0c8a3c"/><rect x="282" y="0" width="1" height="65" fill="#0c8a3c"/><rect x="294" y="0" width="1" height="65" fill="#0c8a3c"/><rect x="306" y="0" width="1" height="65" fill="#0c8a3c"/><rect x="317" y="0" width="1" height="65" fill="#0c8a3c"/><rect x="329" y="0" width="1" height="65" fill="#0c8a3c"/><rect x="341" y="0" width="1" height="65" fill="#0c8a3c"/><rect x="353" y="0" width="1" height="65" fill="#0c8a3c"/><rect x="364" y="0" width="1" height="65" fill="#0c8a3c"/><rect x="376" y="0" width="1" height="65" fill="#0c8a3c"/><rect x="388" y="0" width="1" height="65" fill="#0c8a3c"/><rect x="400" y="0" width="1" height="65" fill="#0c8a3c"/><rect x="0" y="16" width="412" height="1" fill="#0c8a3c"/><rect x="0" y="32" width="412" height="1" fill="#0c8a3c"/><rect x="0" y="49" width="412" height="1" fill="#0c8a3c"/><path d="M229 65 L231.5 40 L232.5 16 L233.5 40 L236 65" fill="none" stroke="#20ff20" stroke-width="1"/><path d="M8 65L10 63L12 65M30 65L33 64L35 65M90 65L92 63.5L94 65M170 65L172 63.5L174 65M228 65L230 63L232 65M290 65L292 63L294 65M330 65L332 61L334 65M352 65L354 63L356 65M390 65L393 62L396 65" fill="none" stroke="#20ff20" stroke-width="1"/></svg>
<svg style="position:absolute;left:1536px;top:69px" width="121" height="66" viewBox="0 0 121 66"><rect x="0" y="0" width="121" height="66" fill="#2c4562"/><rect x="1" y="1" width="3" height="3" fill="#17283e"/><rect x="5" y="1" width="3" height="3" fill="#17283e"/><rect x="9" y="1" width="3" height="3" fill="#17283e"/><rect x="13" y="1" width="3" height="3" fill="#17283e"/><rect x="17" y="1" width="3" height="3" fill="#17283e"/><rect x="21" y="1" width="3" height="3" fill="#17283e"/><rect x="25" y="1" width="3" height="3" fill="#17283e"/><rect x="29" y="1" width="3" height="3" fill="#17283e"/><rect x="33" y="1" width="3" height="3" fill="#17283e"/><rect x="37" y="1" width="3" height="3" fill="#17283e"/><rect x="41" y="1" width="3" height="3" fill="#17283e"/><rect x="45" y="1" width="3" height="3" fill="#17283e"/><rect x="49" y="1" width="3" height="3" fill="#17283e"/><rect x="53" y="1" width="3" height="3" fill="#17283e"/><rect x="57" y="1" width="3" height="3" fill="#17283e"/><rect x="61" y="1" width="3" height="3" fill="#17283e"/><rect x="65" y="1" width="3" height="3" fill="#17283e"/><rect x="69" y="1" width="3" height="3" fill="#17283e"/><rect x="73" y="1" width="3" height="3" fill="#17283e"/><rect x="77" y="1" width="3" height="3" fill="#17283e"/><rect x="81" y="1" width="3" height="3" fill="#17283e"/><rect x="85" y="1" width="3" height="3" fill="#17283e"/><rect x="89" y="1" width="3" height="3" fill="#17283e"/><rect x="93" y="1" width="3" height="3" fill="#17283e"/><rect x="97" y="1" width="3" height="3" fill="#17283e"/><rect x="101" y="1" width="3" height="3" fill="#17283e"/><rect x="105" y="1" width="3" height="3" fill="#17283e"/><rect x="109" y="1" width="3" height="3" fill="#17283e"/><rect x="113" y="1" width="3" height="3" fill="#17283e"/><rect x="117" y="1" width="3" height="3" fill="#17283e"/><rect x="1" y="5" width="3" height="3" fill="#17283e"/><rect x="5" y="5" width="3" height="3" fill="#17283e"/><rect x="9" y="5" width="3" height="3" fill="#17283e"/><rect x="13" y="5" width="3" height="3" fill="#17283e"/><rect x="17" y="5" width="3" height="3" fill="#17283e"/><rect x="21" y="5" width="3" height="3" fill="#17283e"/><rect x="25" y="5" width="3" height="3" fill="#17283e"/><rect x="29" y="5" width="3" height="3" fill="#17283e"/><rect x="33" y="5" width="3" height="3" fill="#17283e"/><rect x="37" y="5" width="3" height="3" fill="#17283e"/><rect x="41" y="5" width="3" height="3" fill="#17283e"/><rect x="45" y="5" width="3" height="3" fill="#17283e"/><rect x="49" y="5" width="3" height="3" fill="#17283e"/><rect x="53" y="5" width="3" height="3" fill="#17283e"/><rect x="57" y="5" width="3" height="3" fill="#17283e"/><rect x="61" y="5" width="3" height="3" fill="#17283e"/><rect x="65" y="5" width="3" height="3" fill="#17283e"/><rect x="69" y="5" width="3" height="3" fill="#17283e"/><rect x="73" y="5" width="3" height="3" fill="#17283e"/><rect x="77" y="5" width="3" height="3" fill="#17283e"/><rect x="81" y="5" width="3" height="3" fill="#17283e"/><rect x="85" y="5" width="3" height="3" fill="#17283e"/><rect x="89" y="5" width="3" height="3" fill="#17283e"/><rect x="93" y="5" width="3" height="3" fill="#17283e"/><rect x="97" y="5" width="3" height="3" fill="#17283e"/><rect x="101" y="5" width="3" height="3" fill="#17283e"/><rect x="105" y="5" width="3" height="3" fill="#17283e"/><rect x="109" y="5" width="3" height="3" fill="#17283e"/><rect x="113" y="5" width="3" height="3" fill="#17283e"/><rect x="117" y="5" width="3" height="3" fill="#17283e"/><rect x="1" y="9" width="3" height="3" fill="#17283e"/><rect x="5" y="9" width="3" height="3" fill="#17283e"/><rect x="9" y="9" width="3" height="3" fill="#17283e"/><rect x="13" y="9" width="3" height="3" fill="#17283e"/><rect x="17" y="9" width="3" height="3" fill="#17283e"/><rect x="21" y="9" width="3" height="3" fill="#17283e"/><rect x="25" y="9" width="3" height="3" fill="#17283e"/><rect x="29" y="9" width="3" height="3" fill="#17283e"/><rect x="33" y="9" width="3" height="3" fill="#17283e"/><rect x="37" y="9" width="3" height="3" fill="#17283e"/><rect x="41" y="9" width="3" height="3" fill="#17283e"/><rect x="45" y="9" width="3" height="3" fill="#17283e"/><rect x="49" y="9" width="3" height="3" fill="#17283e"/><rect x="53" y="9" width="3" height="3" fill="#17283e"/><rect x="57" y="9" width="3" height="3" fill="#17283e"/><rect x="61" y="9" width="3" height="3" fill="#17283e"/><rect x="65" y="9" width="3" height="3" fill="#17283e"/><rect x="69" y="9" width="3" height="3" fill="#17283e"/><rect x="73" y="9" width="3" height="3" fill="#17283e"/><rect x="77" y="9" width="3" height="3" fill="#17283e"/><rect x="81" y="9" width="3" height="3" fill="#17283e"/><rect x="85" y="9" width="3" height="3" fill="#17283e"/><rect x="89" y="9" width="3" height="3" fill="#17283e"/><rect x="93" y="9" width="3" height="3" fill="#17283e"/><rect x="97" y="9" width="3" height="3" fill="#17283e"/><rect x="101" y="9" width="3" height="3" fill="#17283e"/><rect x="105" y="9" width="3" height="3" fill="#17283e"/><rect x="109" y="9" width="3" height="3" fill="#17283e"/><rect x="113" y="9" width="3" height="3" fill="#17283e"/><rect x="117" y="9" width="3" height="3" fill="#17283e"/><rect x="1" y="13" width="3" height="3" fill="#17283e"/><rect x="5" y="13" width="3" height="3" fill="#17283e"/><rect x="9" y="13" width="3" height="3" fill="#17283e"/><rect x="13" y="13" width="3" height="3" fill="#17283e"/><rect x="17" y="13" width="3" height="3" fill="#17283e"/><rect x="21" y="13" width="3" height="3" fill="#17283e"/><rect x="25" y="13" width="3" height="3" fill="#17283e"/><rect x="29" y="13" width="3" height="3" fill="#17283e"/><rect x="33" y="13" width="3" height="3" fill="#17283e"/><rect x="37" y="13" width="3" height="3" fill="#17283e"/><rect x="41" y="13" width="3" height="3" fill="#17283e"/><rect x="45" y="13" width="3" height="3" fill="#17283e"/><rect x="49" y="13" width="3" height="3" fill="#17283e"/><rect x="53" y="13" width="3" height="3" fill="#17283e"/><rect x="57" y="13" width="3" height="3" fill="#17283e"/><rect x="61" y="13" width="3" height="3" fill="#17283e"/><rect x="65" y="13" width="3" height="3" fill="#17283e"/><rect x="69" y="13" width="3" height="3" fill="#17283e"/><rect x="73" y="13" width="3" height="3" fill="#17283e"/><rect x="77" y="13" width="3" height="3" fill="#17283e"/><rect x="81" y="13" width="3" height="3" fill="#17283e"/><rect x="85" y="13" width="3" height="3" fill="#17283e"/><rect x="89" y="13" width="3" height="3" fill="#17283e"/><rect x="93" y="13" width="3" height="3" fill="#17283e"/><rect x="97" y="13" width="3" height="3" fill="#17283e"/><rect x="101" y="13" width="3" height="3" fill="#17283e"/><rect x="105" y="13" width="3" height="3" fill="#17283e"/><rect x="109" y="13" width="3" height="3" fill="#17283e"/><rect x="113" y="13" width="3" height="3" fill="#17283e"/><rect x="117" y="13" width="3" height="3" fill="#17283e"/><rect x="1" y="17" width="3" height="3" fill="#17283e"/><rect x="5" y="17" width="3" height="3" fill="#17283e"/><rect x="9" y="17" width="3" height="3" fill="#17283e"/><rect x="13" y="17" width="3" height="3" fill="#17283e"/><rect x="17" y="17" width="3" height="3" fill="#17283e"/><rect x="21" y="17" width="3" height="3" fill="#17283e"/><rect x="25" y="17" width="3" height="3" fill="#17283e"/><rect x="29" y="17" width="3" height="3" fill="#17283e"/><rect x="33" y="17" width="3" height="3" fill="#17283e"/><rect x="37" y="17" width="3" height="3" fill="#17283e"/><rect x="41" y="17" width="3" height="3" fill="#17283e"/><rect x="45" y="17" width="3" height="3" fill="#17283e"/><rect x="49" y="17" width="3" height="3" fill="#17283e"/><rect x="53" y="17" width="3" height="3" fill="#17283e"/><rect x="57" y="17" width="3" height="3" fill="#17283e"/><rect x="61" y="17" width="3" height="3" fill="#17283e"/><rect x="65" y="17" width="3" height="3" fill="#17283e"/><rect x="69" y="17" width="3" height="3" fill="#17283e"/><rect x="73" y="17" width="3" height="3" fill="#17283e"/><rect x="77" y="17" width="3" height="3" fill="#17283e"/><rect x="81" y="17" width="3" height="3" fill="#17283e"/><rect x="85" y="17" width="3" height="3" fill="#17283e"/><rect x="89" y="17" width="3" height="3" fill="#17283e"/><rect x="93" y="17" width="3" height="3" fill="#17283e"/><rect x="97" y="17" width="3" height="3" fill="#17283e"/><rect x="101" y="17" width="3" height="3" fill="#17283e"/><rect x="105" y="17" width="3" height="3" fill="#17283e"/><rect x="109" y="17" width="3" height="3" fill="#17283e"/><rect x="113" y="17" width="3" height="3" fill="#17283e"/><rect x="117" y="17" width="3" height="3" fill="#17283e"/><rect x="1" y="21" width="3" height="3" fill="#17283e"/><rect x="5" y="21" width="3" height="3" fill="#17283e"/><rect x="9" y="21" width="3" height="3" fill="#17283e"/><rect x="13" y="21" width="3" height="3" fill="#17283e"/><rect x="17" y="21" width="3" height="3" fill="#17283e"/><rect x="21" y="21" width="3" height="3" fill="#17283e"/><rect x="25" y="21" width="3" height="3" fill="#17283e"/><rect x="29" y="21" width="3" height="3" fill="#17283e"/><rect x="33" y="21" width="3" height="3" fill="#17283e"/><rect x="37" y="21" width="3" height="3" fill="#17283e"/><rect x="41" y="21" width="3" height="3" fill="#17283e"/><rect x="45" y="21" width="3" height="3" fill="#17283e"/><rect x="49" y="21" width="3" height="3" fill="#17283e"/><rect x="53" y="21" width="3" height="3" fill="#17283e"/><rect x="57" y="21" width="3" height="3" fill="#17283e"/><rect x="61" y="21" width="3" height="3" fill="#17283e"/><rect x="65" y="21" width="3" height="3" fill="#17283e"/><rect x="69" y="21" width="3" height="3" fill="#17283e"/><rect x="73" y="21" width="3" height="3" fill="#17283e"/><rect x="77" y="21" width="3" height="3" fill="#17283e"/><rect x="81" y="21" width="3" height="3" fill="#17283e"/><rect x="85" y="21" width="3" height="3" fill="#17283e"/><rect x="89" y="21" width="3" height="3" fill="#17283e"/><rect x="93" y="21" width="3" height="3" fill="#17283e"/><rect x="97" y="21" width="3" height="3" fill="#17283e"/><rect x="101" y="21" width="3" height="3" fill="#17283e"/><rect x="105" y="21" width="3" height="3" fill="#17283e"/><rect x="109" y="21" width="3" height="3" fill="#17283e"/><rect x="113" y="21" width="3" height="3" fill="#17283e"/><rect x="117" y="21" width="3" height="3" fill="#17283e"/><rect x="1" y="25" width="3" height="3" fill="#17283e"/><rect x="5" y="25" width="3" height="3" fill="#17283e"/><rect x="9" y="25" width="3" height="3" fill="#17283e"/><rect x="13" y="25" width="3" height="3" fill="#17283e"/><rect x="17" y="25" width="3" height="3" fill="#17283e"/><rect x="21" y="25" width="3" height="3" fill="#17283e"/><rect x="25" y="25" width="3" height="3" fill="#17283e"/><rect x="29" y="25" width="3" height="3" fill="#17283e"/><rect x="33" y="25" width="3" height="3" fill="#17283e"/><rect x="37" y="25" width="3" height="3" fill="#17283e"/><rect x="41" y="25" width="3" height="3" fill="#17283e"/><rect x="45" y="25" width="3" height="3" fill="#17283e"/><rect x="49" y="25" width="3" height="3" fill="#17283e"/><rect x="53" y="25" width="3" height="3" fill="#17283e"/><rect x="57" y="25" width="3" height="3" fill="#17283e"/><rect x="61" y="25" width="3" height="3" fill="#17283e"/><rect x="65" y="25" width="3" height="3" fill="#17283e"/><rect x="69" y="25" width="3" height="3" fill="#17283e"/><rect x="73" y="25" width="3" height="3" fill="#17283e"/><rect x="77" y="25" width="3" height="3" fill="#17283e"/><rect x="81" y="25" width="3" height="3" fill="#17283e"/><rect x="85" y="25" width="3" height="3" fill="#17283e"/><rect x="89" y="25" width="3" height="3" fill="#17283e"/><rect x="93" y="25" width="3" height="3" fill="#17283e"/><rect x="97" y="25" width="3" height="3" fill="#17283e"/><rect x="101" y="25" width="3" height="3" fill="#17283e"/><rect x="105" y="25" width="3" height="3" fill="#17283e"/><rect x="109" y="25" width="3" height="3" fill="#17283e"/><rect x="113" y="25" width="3" height="3" fill="#17283e"/><rect x="117" y="25" width="3" height="3" fill="#17283e"/><rect x="1" y="29" width="3" height="3" fill="#17283e"/><rect x="5" y="29" width="3" height="3" fill="#17283e"/><rect x="9" y="29" width="3" height="3" fill="#17283e"/><rect x="13" y="29" width="3" height="3" fill="#17283e"/><rect x="17" y="29" width="3" height="3" fill="#17283e"/><rect x="21" y="29" width="3" height="3" fill="#17283e"/><rect x="25" y="29" width="3" height="3" fill="#17283e"/><rect x="29" y="29" width="3" height="3" fill="#17283e"/><rect x="33" y="29" width="3" height="3" fill="#17283e"/><rect x="37" y="29" width="3" height="3" fill="#17283e"/><rect x="41" y="29" width="3" height="3" fill="#17283e"/><rect x="45" y="29" width="3" height="3" fill="#17283e"/><rect x="49" y="29" width="3" height="3" fill="#17283e"/><rect x="53" y="29" width="3" height="3" fill="#17283e"/><rect x="57" y="29" width="3" height="3" fill="#17283e"/><rect x="61" y="29" width="3" height="3" fill="#17283e"/><rect x="65" y="29" width="3" height="3" fill="#17283e"/><rect x="69" y="29" width="3" height="3" fill="#17283e"/><rect x="73" y="29" width="3" height="3" fill="#17283e"/><rect x="77" y="29" width="3" height="3" fill="#17283e"/><rect x="81" y="29" width="3" height="3" fill="#17283e"/><rect x="85" y="29" width="3" height="3" fill="#17283e"/><rect x="89" y="29" width="3" height="3" fill="#17283e"/><rect x="93" y="29" width="3" height="3" fill="#17283e"/><rect x="97" y="29" width="3" height="3" fill="#17283e"/><rect x="101" y="29" width="3" height="3" fill="#17283e"/><rect x="105" y="29" width="3" height="3" fill="#17283e"/><rect x="109" y="29" width="3" height="3" fill="#17283e"/><rect x="113" y="29" width="3" height="3" fill="#17283e"/><rect x="117" y="29" width="3" height="3" fill="#17283e"/><rect x="1" y="33" width="3" height="3" fill="#17283e"/><rect x="5" y="33" width="3" height="3" fill="#17283e"/><rect x="9" y="33" width="3" height="3" fill="#17283e"/><rect x="13" y="33" width="3" height="3" fill="#17283e"/><rect x="17" y="33" width="3" height="3" fill="#17283e"/><rect x="21" y="33" width="3" height="3" fill="#17283e"/><rect x="25" y="33" width="3" height="3" fill="#17283e"/><rect x="29" y="33" width="3" height="3" fill="#17283e"/><rect x="33" y="33" width="3" height="3" fill="#17283e"/><rect x="37" y="33" width="3" height="3" fill="#17283e"/><rect x="41" y="33" width="3" height="3" fill="#17283e"/><rect x="45" y="33" width="3" height="3" fill="#17283e"/><rect x="49" y="33" width="3" height="3" fill="#17283e"/><rect x="53" y="33" width="3" height="3" fill="#17283e"/><rect x="57" y="33" width="3" height="3" fill="#17283e"/><rect x="61" y="33" width="3" height="3" fill="#17283e"/><rect x="65" y="33" width="3" height="3" fill="#f0c020"/><rect x="69" y="33" width="3" height="3" fill="#acb6e6"/><rect x="73" y="33" width="3" height="3" fill="#acb6e6"/><rect x="77" y="33" width="3" height="3" fill="#acb6e6"/><rect x="81" y="33" width="3" height="3" fill="#acb6e6"/><rect x="85" y="33" width="3" height="3" fill="#acb6e6"/><rect x="89" y="33" width="3" height="3" fill="#acb6e6"/><rect x="93" y="33" width="3" height="3" fill="#acb6e6"/><rect x="97" y="33" width="3" height="3" fill="#acb6e6"/><rect x="101" y="33" width="3" height="3" fill="#acb6e6"/><rect x="105" y="33" width="3" height="3" fill="#acb6e6"/><rect x="109" y="33" width="3" height="3" fill="#acb6e6"/><rect x="113" y="33" width="3" height="3" fill="#acb6e6"/><rect x="117" y="33" width="3" height="3" fill="#acb6e6"/><rect x="1" y="37" width="3" height="3" fill="#acb6e6"/><rect x="5" y="37" width="3" height="3" fill="#acb6e6"/><rect x="9" y="37" width="3" height="3" fill="#acb6e6"/><rect x="13" y="37" width="3" height="3" fill="#acb6e6"/><rect x="17" y="37" width="3" height="3" fill="#acb6e6"/><rect x="21" y="37" width="3" height="3" fill="#acb6e6"/><rect x="25" y="37" width="3" height="3" fill="#acb6e6"/><rect x="29" y="37" width="3" height="3" fill="#acb6e6"/><rect x="33" y="37" width="3" height="3" fill="#acb6e6"/><rect x="37" y="37" width="3" height="3" fill="#acb6e6"/><rect x="41" y="37" width="3" height="3" fill="#acb6e6"/><rect x="45" y="37" width="3" height="3" fill="#acb6e6"/><rect x="49" y="37" width="3" height="3" fill="#acb6e6"/><rect x="53" y="37" width="3" height="3" fill="#acb6e6"/><rect x="57" y="37" width="3" height="3" fill="#acb6e6"/><rect x="61" y="37" width="3" height="3" fill="#acb6e6"/><rect x="65" y="37" width="3" height="3" fill="#acb6e6"/><rect x="69" y="37" width="3" height="3" fill="#acb6e6"/><rect x="73" y="37" width="3" height="3" fill="#acb6e6"/><rect x="77" y="37" width="3" height="3" fill="#acb6e6"/><rect x="81" y="37" width="3" height="3" fill="#acb6e6"/><rect x="85" y="37" width="3" height="3" fill="#acb6e6"/><rect x="89" y="37" width="3" height="3" fill="#acb6e6"/><rect x="93" y="37" width="3" height="3" fill="#acb6e6"/><rect x="97" y="37" width="3" height="3" fill="#acb6e6"/><rect x="101" y="37" width="3" height="3" fill="#acb6e6"/><rect x="105" y="37" width="3" height="3" fill="#acb6e6"/><rect x="109" y="37" width="3" height="3" fill="#acb6e6"/><rect x="113" y="37" width="3" height="3" fill="#acb6e6"/><rect x="117" y="37" width="3" height="3" fill="#acb6e6"/><rect x="0" y="41" width="121" height="25" fill="#364f70"/></svg>
<div class="t" style="left:1556.5px;width:80px;text-align:center;top:111.5px;font-size:12px;color:#fff;font-weight:normal;"><span style="font-size:13px">14.5%</span></div>
<div class="t" style="left:1682px;top:67.5px;font-size:12px;color:#15428b;font-weight:normal;">导出</div>
<div class="t" style="left:1682px;top:92.5px;font-size:12px;color:#15428b;font-weight:normal;">清空</div>
<div class="t" style="left:1682px;top:117.0px;font-size:12px;color:#15428b;font-weight:normal;">锁定</div>
<svg style="position:absolute;left:1659px;top:70px" width="17" height="17" viewBox="0 0 17 17"><rect x="0.5" y="0.5" width="4" height="15" fill="#f0c040" stroke="#3a5a8a" stroke-width="0.8"/><rect x="1" y="4" width="3" height="3" fill="#4a7fd0"/><rect x="1" y="10" width="3" height="3" fill="#4a7fd0"/><rect x="7" y="6" width="9" height="9" fill="#6070b0" stroke="#34406a" stroke-width="0.8"/><rect x="9" y="7" width="5" height="3" fill="#fff"/><path d="M5 9H10" stroke="#222" stroke-width="1.2"/></svg>
<svg style="position:absolute;left:1659px;top:95px" width="17" height="17" viewBox="0 0 17 17"><rect x="0.5" y="0.5" width="4" height="15" fill="#f0c040" stroke="#3a5a8a" stroke-width="0.8"/><rect x="1" y="4" width="3" height="3" fill="#4a7fd0"/><rect x="1" y="10" width="3" height="3" fill="#4a7fd0"/><path d="M5 8H10M8.5 6.5L10 8L8.5 9.5" stroke="#222" stroke-width="1" fill="none"/><rect x="11" y="1" width="5" height="2.5" fill="#fff" stroke="#c8ccd4" stroke-width="0.5"/><rect x="11" y="4" width="5" height="2.5" fill="#fff" stroke="#c8ccd4" stroke-width="0.5"/><rect x="11" y="7" width="5" height="2.5" fill="#fff" stroke="#c8ccd4" stroke-width="0.5"/><rect x="11" y="10" width="5" height="2.5" fill="#fff" stroke="#c8ccd4" stroke-width="0.5"/><rect x="11" y="13" width="5" height="2.5" fill="#fff" stroke="#c8ccd4" stroke-width="0.5"/></svg>
<svg style="position:absolute;left:1659px;top:119px" width="17" height="17" viewBox="0 0 17 17"><rect x="0.5" y="0.5" width="4" height="15" fill="#f0c040" stroke="#3a5a8a" stroke-width="0.8"/><rect x="1" y="4" width="3" height="3" fill="#4a7fd0"/><rect x="1" y="10" width="3" height="3" fill="#4a7fd0"/><rect x="7" y="8.5" width="9" height="7" fill="#e0b030" stroke="#8a6a10" stroke-width="0.8"/><path d="M9 8.5V6.5Q11.5 3.5 14 6.5V8.5" stroke="#6a6a6a" fill="none" stroke-width="1.2"/></svg>
<svg style="position:absolute;left:11px;top:203px" width="17" height="17" viewBox="0 0 17 17"><rect x="0.5" y="0.5" width="15" height="12" fill="#f4f4f4" stroke="#9aa0a8"/><path d="M0.5 4H15.5M0.5 8H15.5M5 0.5V12.5M10 0.5V12.5" stroke="#b8bcc4"/><path d="M10.5 9.5H13.5V11.5H15.5V14.5H13.5V16.5H10.5V14.5H8.5V11.5H10.5Z" fill="#e4e4e4" stroke="#9a9a9a" stroke-width="1"/></svg>
<svg style="position:absolute;left:34px;top:203px" width="17" height="17" viewBox="0 0 17 17"><path d="M0.5 1H14.5L9 7.5V13H6V7.5Z" fill="#d8d8d8" stroke="#a8a8a8"/><path d="M10.5 9.5H13.5V11.5H15.5V14.5H13.5V16.5H10.5V14.5H8.5V11.5H10.5Z" fill="#e4e4e4" stroke="#9a9a9a" stroke-width="1"/></svg>
<svg style="position:absolute;left:56px;top:203px" width="17" height="17" viewBox="0 0 17 17"><ellipse cx="7.5" cy="7.5" rx="7" ry="5" fill="#3a78c8"/><path d="M7.5 7.5V2.5A7 5 0 0 0 0.5 7.5Z" fill="#f04a1a"/><path d="M7.5 7.5L0.5 7.5A7 5 0 0 0 4 11.8Z" fill="#f0a020"/><path d="M10.5 9.5H13.5V11.5H15.5V14.5H13.5V16.5H10.5V14.5H8.5V11.5H10.5Z" fill="#3fb0a0" stroke="#0d4a4a" stroke-width="1"/></svg>
<svg style="position:absolute;left:77px;top:202px" width="17" height="18" viewBox="0 0 17 18"><path d="M7 0.5L13.5 13H0.5Z" fill="#ffe030" stroke="#b08a20"/><rect x="6.2" y="4" width="1.6" height="5" fill="#333"/><rect x="6.2" y="10" width="1.6" height="1.5" fill="#333"/><path d="M10.5 9.5H13.5V11.5H15.5V14.5H13.5V16.5H10.5V14.5H8.5V11.5H10.5Z" fill="#3fb0a0" stroke="#0d4a4a" stroke-width="1"/></svg>
<svg style="position:absolute;left:99px;top:202px" width="17" height="18" viewBox="0 0 17 18"><rect x="0.5" y="0.5" width="12" height="14" fill="#f6f6f6" stroke="#7a8290"/><rect x="2.5" y="3" width="8" height="1" fill="#8a9ab0"/><rect x="3" y="8" width="1.5" height="5" fill="#30a030"/><rect x="5.5" y="6" width="1.5" height="7" fill="#3060c0"/><rect x="8" y="9" width="1.5" height="4" fill="#d03030"/><path d="M10.5 9.5H13.5V11.5H15.5V14.5H13.5V16.5H10.5V14.5H8.5V11.5H10.5Z" fill="#3fb0a0" stroke="#0d4a4a" stroke-width="1"/></svg>
<svg style="position:absolute;left:8px;top:227px" width="16" height="15" viewBox="0 0 16 15"><defs><radialGradient id="g19" cx="0.4" cy="0.3" r="0.8"><stop offset="0" stop-color="#c4e2fb"/><stop offset="0.5" stop-color="#4f92d8"/><stop offset="1" stop-color="#1d5aa6"/></radialGradient></defs><circle cx="7.5" cy="7.5" r="7" fill="url(#g19)" stroke="#3a6aa6" stroke-width="0.6"/><path d="M2.3 5.5Q2 11.5 7.5 12.6Q11.5 12.8 13.2 9.6Q10.6 11.6 7.8 11Q3.6 10 2.3 5.5Z" fill="#fff"/><ellipse cx="8.2" cy="6.8" rx="2.6" ry="2" fill="#fff"/><circle cx="8.2" cy="6.8" r="1.1" fill="#2a62b0"/></svg>
<svg style="position:absolute;left:30px;top:248px" width="16" height="14" viewBox="0 0 16 14"><path d="M0.5 1.2H15" stroke="#9aa0a6" stroke-width="1.6"/><circle cx="1" cy="1.2" r="1.1" fill="#30b030"/><circle cx="14.6" cy="1.2" r="1.1" fill="#30b030"/><rect x="3" y="2.5" width="3.2" height="10.5" rx="1" fill="#52c452" stroke="#1e8a1e" stroke-width="0.6"/><rect x="9" y="2.5" width="3.2" height="10.5" rx="1" fill="#52c452" stroke="#1e8a1e" stroke-width="0.6"/><path d="M2 2L4.6 4.4M13.4 2L10.6 4.4M7.6 1.5V3.5" stroke="#8a8a8a" stroke-width="0.9"/></svg>
<svg style="position:absolute;left:30px;top:268px" width="16" height="15" viewBox="0 0 16 15"><path d="M0.5 1.5H13.5V5.5H15.5V11.5H13.5V13.5H0.5Z" fill="#2a9a2a" stroke="#105a10"/><rect x="2" y="3" width="2" height="2" fill="#e02020"/><rect x="2" y="7" width="2" height="2" fill="#e02020"/><rect x="5" y="3" width="4" height="7" fill="#d0e880"/><rect x="7" y="12" width="4" height="2" fill="#e0c020"/></svg>
<svg style="position:absolute;left:30px;top:288px" width="16" height="16" viewBox="0 0 16 16"><rect x="0.5" y="0.5" width="8" height="6" fill="#7ab0e8" stroke="#3a6aa6" stroke-width="0.8"/><rect x="6.5" y="5.5" width="8" height="6" fill="#7ab0e8" stroke="#3a6aa6" stroke-width="0.8"/><path d="M0 9H6M0 14H15" stroke="#30a030" stroke-width="1.4"/><rect x="2" y="12" width="4" height="2" fill="#708090"/><rect x="8" y="12.5" width="6" height="2" fill="#708090"/></svg>
<svg style="position:absolute;left:30px;top:309px" width="16" height="17" viewBox="0 0 16 17"><defs><radialGradient id="g20" cx="0.4" cy="0.35" r="0.75"><stop offset="0" stop-color="#e6f4ff"/><stop offset="0.45" stop-color="#6ab6f0"/><stop offset="1" stop-color="#2a6ab8"/></radialGradient></defs><circle cx="8" cy="9.5" r="6" fill="url(#g20)" stroke="#3a78b8" stroke-width="0.6"/><path d="M5 8Q7 6.5 8.5 8.5Q7.5 11 5.5 10.5Z" fill="#4aa0e0" fill-opacity="0.6"/><path d="M2 9Q1.5 1.2 8 1.2Q14.5 1.2 14 9" fill="none" stroke="#444" stroke-width="1.2"/><rect x="0.5" y="8" width="2.6" height="5" rx="1" fill="#2a2a2a"/><rect x="12.9" y="8" width="2.6" height="5" rx="1" fill="#2a2a2a"/></svg>
<svg style="position:absolute;left:257px;top:203px" width="17" height="17" viewBox="0 0 17 17"><rect x="0.5" y="0.5" width="12" height="9" fill="#fff" stroke="#6a7284"/><rect x="2" y="2.5" width="8" height="0.9" fill="#7a9ad0"/><rect x="2" y="4.8" width="8" height="0.9" fill="#8a9ab0"/><g transform="translate(6,6) scale(0.7)"><rect x="0.5" y="0.5" width="14" height="14.5" fill="#7f6fcc" stroke="#5a4aa6"/><rect x="3" y="1" width="9" height="6" fill="#f6f6fa"/><rect x="4" y="2.5" width="7" height="0.7" fill="#b0b0c0"/><rect x="4" y="4.5" width="7" height="0.7" fill="#b0b0c0"/><rect x="4" y="9.5" width="7" height="5" fill="#e8e8ee"/><rect x="5" y="10.5" width="2.5" height="4" fill="#4a3a8a"/></g></svg>
<div style="left:282px;top:200px;width:22px;height:22px;background:linear-gradient(#ffd28a,#ffb24a);border:1px solid #f0a040"></div>
<svg style="position:absolute;left:285px;top:202px" width="17" height="18" viewBox="0 0 17 18"><rect x="4.5" y="4.5" width="12" height="12" fill="#fff" stroke="#4a6a9a" stroke-width="0.8"/><rect x="5" y="5" width="11" height="2" fill="#5a8ae0"/><rect x="6.5" y="8.5" width="1" height="1" fill="#555"/><rect x="6.5" y="10.7" width="1" height="1" fill="#555"/><rect x="6.5" y="12.9" width="1" height="1" fill="#555"/><rect x="6.5" y="15.100000000000001" width="1" height="1" fill="#555"/><rect x="8.7" y="8.5" width="1" height="1" fill="#555"/><rect x="8.7" y="10.7" width="1" height="1" fill="#555"/><rect x="8.7" y="12.9" width="1" height="1" fill="#555"/><rect x="8.7" y="15.100000000000001" width="1" height="1" fill="#555"/><rect x="10.9" y="8.5" width="1" height="1" fill="#555"/><rect x="10.9" y="10.7" width="1" height="1" fill="#555"/><rect x="10.9" y="12.9" width="1" height="1" fill="#555"/><rect x="10.9" y="15.100000000000001" width="1" height="1" fill="#555"/><rect x="13.100000000000001" y="8.5" width="1" height="1" fill="#555"/><rect x="13.100000000000001" y="10.7" width="1" height="1" fill="#555"/><rect x="13.100000000000001" y="12.9" width="1" height="1" fill="#555"/><rect x="13.100000000000001" y="15.100000000000001" width="1" height="1" fill="#555"/><circle cx="6" cy="5" r="4" fill="#e8eef4" stroke="#8a96a4" stroke-width="1.1"/><path d="M3 8L0.5 10.5" stroke="#d08a2a" stroke-width="2.2"/></svg>
<svg style="position:absolute;left:314px;top:204px" width="16" height="16" viewBox="0 0 16 16"><path d="M0.5 0.5H13.5L8.5 6.5V12L5.5 13.5V6.5Z" fill="#7ed0f0" stroke="#3a8ab8" stroke-width="0.8"/><path d="M9.5 7.5H12.5V9.5H14.5V12.5H12.5V14.5H9.5V12.5H7.5V9.5H9.5Z" fill="#3fb0a0" stroke="#0d4a4a" stroke-width="1"/></svg>
<svg style="position:absolute;left:343px;top:204px" width="14" height="14" viewBox="0 0 14 14"><path d="M2 6.5A5 5 0 0 1 11 4" fill="none" stroke="#2a7ad0" stroke-width="2.6"/><path d="M9 0.5L13 4.5L8.5 5.5Z" fill="#2a7ad0"/><path d="M12 7.5A5 5 0 0 1 3 10" fill="none" stroke="#2a7ad0" stroke-width="2.6"/><path d="M5 13.5L1 9.5L5.5 8.5Z" fill="#2a7ad0"/></svg>
<svg style="position:absolute;left:362px;top:210px" width="6" height="4" viewBox="0 0 6 4"><path d="M0 0H6L3 3Z" fill="#000"/></svg>
<div style="left:279px;top:202px;width:1px;height:18px;background:#9dbbe4;box-shadow:1px 0 0 #f4f9ff"></div>
<div style="left:307px;top:202px;width:1px;height:18px;background:#9dbbe4;box-shadow:1px 0 0 #f4f9ff"></div>
<div style="left:335px;top:202px;width:1px;height:18px;background:#9dbbe4;box-shadow:1px 0 0 #f4f9ff"></div>
<div style="left:375px;top:202px;width:1px;height:18px;background:#9dbbe4;box-shadow:1px 0 0 #f4f9ff"></div>
<svg style="position:absolute;left:259px;top:729px" width="17" height="17" viewBox="0 0 17 17"><rect x="0.5" y="0.5" width="12" height="9" fill="#fff" stroke="#6a7284"/><rect x="2" y="2.5" width="8" height="0.9" fill="#7a9ad0"/><rect x="2" y="4.8" width="8" height="0.9" fill="#8a9ab0"/><g transform="translate(6,6) scale(0.7)"><rect x="0.5" y="0.5" width="14" height="14.5" fill="#7f6fcc" stroke="#5a4aa6"/><rect x="3" y="1" width="9" height="6" fill="#f6f6fa"/><rect x="4" y="2.5" width="7" height="0.7" fill="#b0b0c0"/><rect x="4" y="4.5" width="7" height="0.7" fill="#b0b0c0"/><rect x="4" y="9.5" width="7" height="5" fill="#e8e8ee"/><rect x="5" y="10.5" width="2.5" height="4" fill="#4a3a8a"/></g></svg>
<svg style="position:absolute;left:288px;top:730px" width="16" height="16" viewBox="0 0 16 16"><path d="M0.5 0.5H13.5L8.5 6.5V12L5.5 13.5V6.5Z" fill="#7ed0f0" stroke="#3a8ab8" stroke-width="0.8"/><path d="M9.5 7.5H12.5V9.5H14.5V12.5H12.5V14.5H9.5V12.5H7.5V9.5H9.5Z" fill="#3fb0a0" stroke="#0d4a4a" stroke-width="1"/></svg>
<svg style="position:absolute;left:317px;top:730px" width="14" height="14" viewBox="0 0 14 14"><path d="M2 6.5A5 5 0 0 1 11 4" fill="none" stroke="#2a7ad0" stroke-width="2.6"/><path d="M9 0.5L13 4.5L8.5 5.5Z" fill="#2a7ad0"/><path d="M12 7.5A5 5 0 0 1 3 10" fill="none" stroke="#2a7ad0" stroke-width="2.6"/><path d="M5 13.5L1 9.5L5.5 8.5Z" fill="#2a7ad0"/></svg>
<svg style="position:absolute;left:336px;top:736px" width="6" height="4" viewBox="0 0 6 4"><path d="M0 0H6L3 3Z" fill="#000"/></svg>
<div style="left:281px;top:728px;width:1px;height:18px;background:#9dbbe4;box-shadow:1px 0 0 #f4f9ff"></div>
<div style="left:309px;top:728px;width:1px;height:18px;background:#9dbbe4;box-shadow:1px 0 0 #f4f9ff"></div>
<div style="left:349px;top:728px;width:1px;height:18px;background:#9dbbe4;box-shadow:1px 0 0 #f4f9ff"></div>
<svg style="position:absolute;left:934px;top:204px" width="16" height="16" viewBox="0 0 16 16"><circle cx="6" cy="6" r="5" fill="#eef3f8" stroke="#8a96a4" stroke-width="1.3"/><path d="M9.5 9.5L14 14" stroke="#c8901a" stroke-width="2.5"/></svg>
<svg style="position:absolute;left:908px;top:730px" width="16" height="16" viewBox="0 0 16 16"><circle cx="6" cy="6" r="5" fill="#eef3f8" stroke="#8a96a4" stroke-width="1.3"/><path d="M9.5 9.5L14 14" stroke="#c8901a" stroke-width="2.5"/></svg>
<svg style="position:absolute;left:1705px;top:179px" width="14" height="13" viewBox="0 0 14 13"><rect x="0.5" y="2.5" width="12" height="10" fill="#f4f6fa" stroke="#5a6a84"/><rect x="1" y="0.5" width="4" height="2" fill="#fff" stroke="#5a6a84" stroke-width="0.6"/><rect x="8" y="0.5" width="4" height="2" fill="#8fb3e6"/><rect x="2" y="4" width="9" height="1.2" fill="#5a6a84"/><rect x="2" y="7" width="3" height="3" fill="#e0b020"/><rect x="6" y="7" width="5" height="0.8" fill="#5a6a84"/><rect x="6" y="9" width="5" height="0.8" fill="#5a6a84"/></svg>
<svg style="position:absolute;left:9px;top:997px" width="17" height="17" viewBox="0 0 17 17"><rect x="0.5" y="1.5" width="12" height="13" fill="#fff" stroke="#5a6a84"/><rect x="1" y="2" width="11" height="2" fill="#5a8ad8"/><path d="M2.5 7L3.5 8L5 6M2.5 11L3.5 12L5 10" stroke="#d02020" fill="none"/><path d="M6 16L7 13L15 5L17 7L9 15Z" fill="url(#g6)" stroke="#7a5a20" stroke-width="0.5"/></svg>
<svg style="position:absolute;left:161px;top:999px" width="15" height="13" viewBox="0 0 15 13"><rect x="0.5" y="1.5" width="13" height="9" rx="1.5" fill="#30a030" stroke="#107010"/><rect x="3" y="3" width="1.5" height="5" fill="#e02020"/><rect x="6" y="3" width="1.5" height="5" fill="#e0d040"/><rect x="9" y="9" width="4" height="3" fill="#e0c020"/></svg>
<svg style="position:absolute;left:235px;top:997px" width="17" height="16" viewBox="0 0 17 16"><path d="M3 2.5H13L15 5V10H1V5Z" fill="#f4f4f4" stroke="#555"/><rect x="0.5" y="8.5" width="15" height="5" rx="1" fill="#d8dce2" stroke="#555"/><rect x="3" y="0.5" width="9" height="4" fill="#fff" stroke="#666" stroke-width="0.7"/></svg>
<svg style="position:absolute;left:428px;top:998px" width="14" height="15" viewBox="0 0 14 15"><path d="M0.5 0.5H13.5L8.5 6.5V13L5.5 14.5V6.5Z" fill="#c8c8c8" stroke="#8a8a8a"/></svg>
<svg style="position:absolute;left:556px;top:997px" width="17" height="16" viewBox="0 0 17 16"><path d="M0.5 0.5H15.5L10 7V13L7 14.5V7Z" fill="#d8dce4" stroke="#7a8290"/><path d="M3 9L6.5 13L15 3" fill="none" stroke="#20a020" stroke-width="2.2"/></svg>
<svg style="position:absolute;left:615px;top:997px" width="17" height="17" viewBox="0 0 17 17"><path d="M0.5 0.5H15.5L10 7V13L7 14.5V7Z" fill="#d8dce4" stroke="#7a8290"/><circle cx="9" cy="10.5" r="4.2" fill="none" stroke="#e02020" stroke-width="1.5"/><path d="M6 13.5L12 7.5" stroke="#e02020" stroke-width="1.5"/></svg>
<svg style="position:absolute;left:1463px;top:996px" width="18" height="17" viewBox="0 0 18 17"><path d="M9 0.8L17.3 16H0.7Z" fill="#ffe030" stroke="#b08020"/><rect x="8.2" y="5" width="1.6" height="6" fill="#333"/><rect x="8.2" y="12.3" width="1.6" height="1.8" fill="#333"/></svg>
<svg style="position:absolute;left:1557px;top:999px" width="13" height="13" viewBox="0 0 13 13"><defs><radialGradient id="g21" cx="0.4" cy="0.3" r="0.75"><stop offset="0" stop-color="#ffe9a0"/><stop offset="0.6" stop-color="#ffb000"/><stop offset="1" stop-color="#e08a00"/></radialGradient></defs><circle cx="6.5" cy="6.5" r="6" fill="url(#g21)" stroke="#d08a10" stroke-width="0.6"/></svg>
<svg style="position:absolute;left:1607px;top:999px" width="13" height="13" viewBox="0 0 13 13"><defs><radialGradient id="g22" cx="0.4" cy="0.3" r="0.75"><stop offset="0" stop-color="#ffe9a0"/><stop offset="0.6" stop-color="#ffb000"/><stop offset="1" stop-color="#e08a00"/></radialGradient></defs><circle cx="6.5" cy="6.5" r="6" fill="url(#g22)" stroke="#d08a10" stroke-width="0.6"/></svg>
<svg style="position:absolute;left:1657px;top:999px" width="13" height="13" viewBox="0 0 13 13"><defs><radialGradient id="g23" cx="0.4" cy="0.3" r="0.75"><stop offset="0" stop-color="#ffe9a0"/><stop offset="0.6" stop-color="#ffb000"/><stop offset="1" stop-color="#e08a00"/></radialGradient></defs><circle cx="6.5" cy="6.5" r="6" fill="url(#g23)" stroke="#d08a10" stroke-width="0.6"/></svg>
<svg style="position:absolute;left:1713px;top:1001px" width="10" height="10" viewBox="0 0 10 10"><rect x="8" y="0" width="2" height="2" fill="#6a7e98"/><rect x="4" y="4" width="2" height="2" fill="#6a7e98"/><rect x="8" y="4" width="2" height="2" fill="#6a7e98"/><rect x="0" y="8" width="2" height="2" fill="#6a7e98"/><rect x="4" y="8" width="2" height="2" fill="#6a7e98"/><rect x="8" y="8" width="2" height="2" fill="#6a7e98"/></svg>
</body></html>
